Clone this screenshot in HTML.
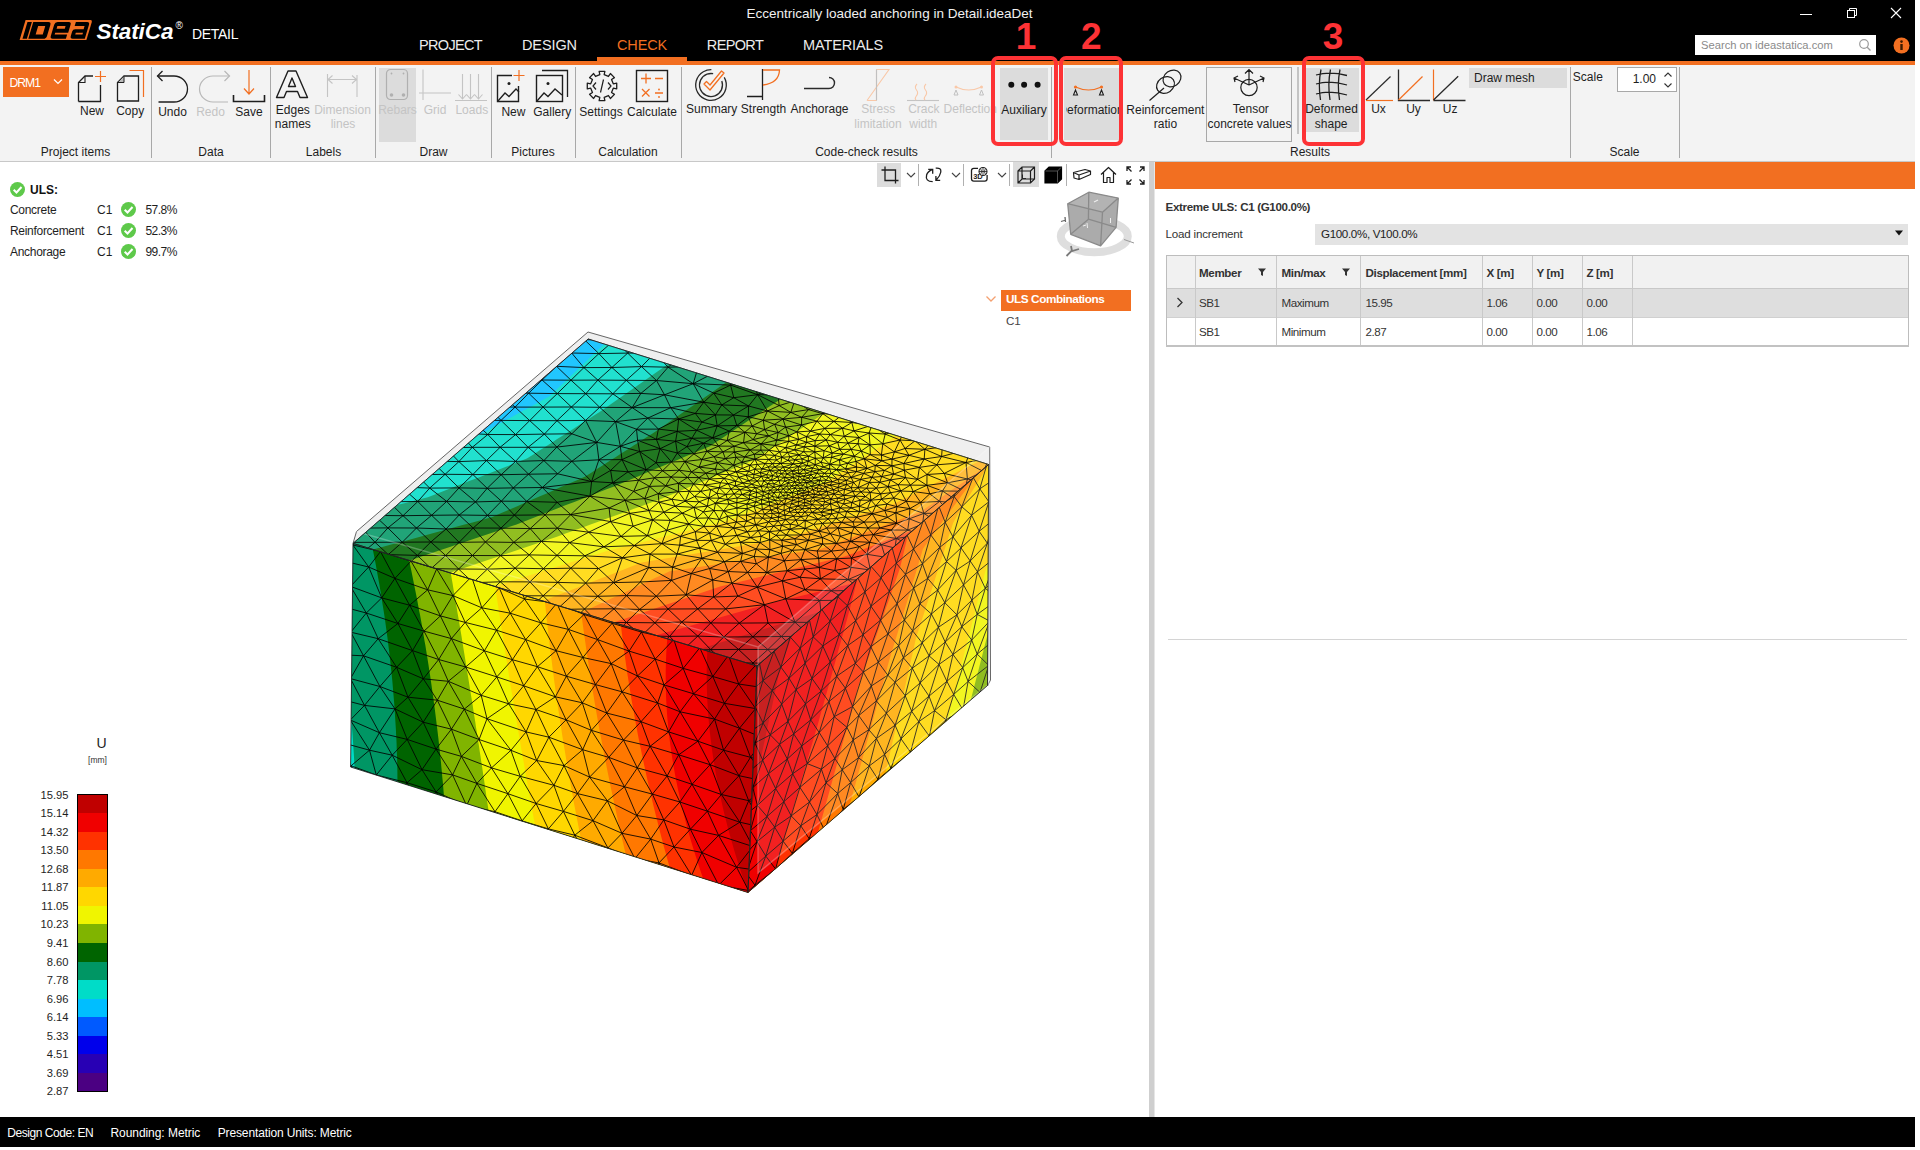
<!DOCTYPE html>
<html><head><meta charset="utf-8"><style>
html,body{margin:0;padding:0;width:1920px;height:1150px;overflow:hidden;background:#fff;}
body{position:relative;font-family:"Liberation Sans",sans-serif;}
.t{position:absolute;white-space:nowrap;line-height:1;}
.r{position:absolute;}
svg.r{overflow:visible;}
</style></head><body>
<div class="r" style="left:0px;top:0px;width:1915px;height:61px;background:#000;"></div>
<div class="r" style="left:0px;top:61px;width:1915px;height:4px;background:#f26f21;"></div>
<div class="r" style="left:0px;top:65px;width:1915px;height:96px;background:#f3f3f3;"></div>
<div class="r" style="left:0px;top:161px;width:1915px;height:1px;background:#c8c8c8;"></div>
<div class="r" style="left:0px;top:1117px;width:1915px;height:30px;background:#000;"></div>
<svg class="r" style="left:15px;top:15px;" width="85" height="30" viewBox="0 0 85 30"><g transform="matrix(1 0 -0.3 1 7.5 0)">
<path d="M4.6 5.1 H69.5 Q71.4 5.1 71.4 7 V25 H4.6 Z" fill="#f26f21"/>
<path d="M7.1 7.1 H11.5 V23.7 H7.1 Z" fill="#000"/>
<path d="M12.9 7.1 H28 Q30.8 7.1 30.8 9.9 V20.9 Q30.8 23.7 28 23.7 H12.9 Z M19 11.1 V19.5 H26.1 V11.1 Z" fill="#000" fill-rule="evenodd"/>
<path d="M37.3 7.1 H48.5 Q51 7.1 51 9.6 V17.7 H38 V19.5 H50.5 V23.7 H37.3 Q34.6 23.7 34.6 21 V9.8 Q34.6 7.1 37.3 7.1 Z M38.2 11.1 V13.7 H46.4 V11.1 Z" fill="#000" fill-rule="evenodd"/>
<path d="M55.5 7.1 H66.8 Q69.4 7.1 69.4 9.7 V23.7 H57.3 Q54.6 23.7 54.6 21 V16.5 Q54.6 14.2 57 14.2 H65.4 V11.1 H55.5 Z M58.6 17.7 V19.5 H65.8 V17.7 Z" fill="#000" fill-rule="evenodd"/>
</g></svg>
<div class="t" style="left:96.5px;top:20.5px;font-size:22.5px;color:#fff;font-weight:bold;font-style:italic;letter-spacing:-0.1px;">StatiCa</div>
<div class="t" style="left:175.5px;top:21.0px;font-size:10px;color:#fff;font-weight:normal;">®</div>
<div class="t" style="left:192.0px;top:27.1px;font-size:14px;color:#fff;font-weight:normal;letter-spacing:-0.3px;">DETAIL</div>
<div class="t" style="left:739.5px;width:300px;text-align:center;top:6.6px;font-size:13.5px;color:#f0f0f0;font-weight:normal;">Eccentrically loaded anchoring in Detail.ideaDet</div>
<div class="t" style="left:300.5px;width:300px;text-align:center;top:37.9px;font-size:14.5px;color:#ececec;font-weight:normal;letter-spacing:-0.65px;">PROJECT</div>
<div class="t" style="left:399.5px;width:300px;text-align:center;top:37.9px;font-size:14.5px;color:#ececec;font-weight:normal;letter-spacing:-0.1px;">DESIGN</div>
<div class="t" style="left:492.0px;width:300px;text-align:center;top:37.9px;font-size:14.5px;color:#f26f21;font-weight:normal;letter-spacing:-0.15px;">CHECK</div>
<div class="t" style="left:585.0px;width:300px;text-align:center;top:37.9px;font-size:14.5px;color:#ececec;font-weight:normal;letter-spacing:-0.65px;">REPORT</div>
<div class="t" style="left:693.0px;width:300px;text-align:center;top:37.9px;font-size:14.5px;color:#ececec;font-weight:normal;letter-spacing:-0.12px;">MATERIALS</div>
<div class="r" style="left:597px;top:57px;width:90px;height:4px;background:#f26f21;"></div>
<div class="r" style="left:1800px;top:14px;width:12px;height:1px;background:#fff;"></div>
<svg class="r" style="left:1845px;top:6px;" width="14" height="14" viewBox="0 0 14 14"><rect x="2.5" y="4.5" width="7" height="7" fill="none" stroke="#fff" stroke-width="1"/><path d="M4.5 4.5 V2.5 H11.5 V9.5 H9.5" fill="none" stroke="#fff" stroke-width="1"/></svg>
<svg class="r" style="left:1890px;top:7px;" width="12" height="12" viewBox="0 0 12 12"><path d="M1 1 L11 11 M11 1 L1 11" stroke="#fff" stroke-width="1.1"/></svg>
<div class="r" style="left:1695px;top:35px;width:181px;height:20px;background:#fff;"></div>
<div class="t" style="left:1701.0px;top:40.0px;font-size:11.2px;color:#8a8a8a;font-weight:normal;">Search on ideastatica.com</div>
<svg class="r" style="left:1858px;top:38px;" width="14" height="14" viewBox="0 0 14 14"><circle cx="6" cy="6" r="4.3" fill="none" stroke="#9a9a9a" stroke-width="1.2"/><path d="M9.2 9.2 L12.5 12.5" stroke="#9a9a9a" stroke-width="1.3"/></svg>
<svg class="r" style="left:1893px;top:37px;" width="17" height="17" viewBox="0 0 17 17"><circle cx="8.5" cy="8.5" r="8" fill="#f26f21"/><rect x="7.3" y="7" width="2.4" height="6" fill="#3a1a00"/><circle cx="8.5" cy="4.6" r="1.3" fill="#3a1a00"/></svg>
<div class="r" style="left:151px;top:67px;width:1px;height:91px;background:#a8a8a8;"></div>
<div class="r" style="left:270px;top:67px;width:1px;height:91px;background:#a8a8a8;"></div>
<div class="r" style="left:375px;top:67px;width:1px;height:91px;background:#a8a8a8;"></div>
<div class="r" style="left:491px;top:67px;width:1px;height:91px;background:#a8a8a8;"></div>
<div class="r" style="left:575px;top:67px;width:1px;height:91px;background:#a8a8a8;"></div>
<div class="r" style="left:681px;top:67px;width:1px;height:91px;background:#a8a8a8;"></div>
<div class="r" style="left:1051px;top:67px;width:1px;height:91px;background:#a8a8a8;"></div>
<div class="r" style="left:1570px;top:67px;width:1px;height:91px;background:#a8a8a8;"></div>
<div class="r" style="left:1679px;top:67px;width:1px;height:91px;background:#a8a8a8;"></div>
<div class="t" style="left:-74.5px;width:300px;text-align:center;top:145.6px;font-size:12px;color:#1e1e1e;font-weight:normal;">Project items</div>
<div class="t" style="left:61.0px;width:300px;text-align:center;top:145.6px;font-size:12px;color:#1e1e1e;font-weight:normal;">Data</div>
<div class="t" style="left:173.5px;width:300px;text-align:center;top:145.6px;font-size:12px;color:#1e1e1e;font-weight:normal;">Labels</div>
<div class="t" style="left:283.5px;width:300px;text-align:center;top:145.6px;font-size:12px;color:#1e1e1e;font-weight:normal;">Draw</div>
<div class="t" style="left:383.0px;width:300px;text-align:center;top:145.6px;font-size:12px;color:#1e1e1e;font-weight:normal;">Pictures</div>
<div class="t" style="left:478.0px;width:300px;text-align:center;top:145.6px;font-size:12px;color:#1e1e1e;font-weight:normal;">Calculation</div>
<div class="t" style="left:716.5px;width:300px;text-align:center;top:145.6px;font-size:12px;color:#1e1e1e;font-weight:normal;">Code-check results</div>
<div class="t" style="left:1160.0px;width:300px;text-align:center;top:145.6px;font-size:12px;color:#1e1e1e;font-weight:normal;">Results</div>
<div class="t" style="left:1474.5px;width:300px;text-align:center;top:145.6px;font-size:12px;color:#1e1e1e;font-weight:normal;">Scale</div>
<div class="r" style="left:3px;top:67px;width:66px;height:30px;background:#f26f21;"></div>
<div class="t" style="left:9.5px;top:76.7px;font-size:12.2px;color:#fff;font-weight:normal;letter-spacing:-1.0px;">DRM1</div>
<svg class="r" style="left:53px;top:78px;" width="10" height="7" viewBox="0 0 10 7"><path d="M1 1.5 L5 5.5 L9 1.5" fill="none" stroke="#fff" stroke-width="1.2"/></svg>
<svg class="r" style="left:76px;top:68px;" width="34" height="36" viewBox="0 0 34 36"><path d="M2.5 33.5 V14.5 L9 8 H17" fill="none" stroke="#1e1e1e" stroke-width="1.3"/>
<path d="M2.5 14.5 H9 V8" fill="none" stroke="#1e1e1e" stroke-width="1.1"/>
<path d="M24.5 17 V33.5 H2.5" fill="none" stroke="#1e1e1e" stroke-width="1.3"/>
<path d="M24.5 3 V14 M19 8.5 H30" stroke="#f26f21" stroke-width="1.2"/></svg>
<div class="t" style="left:-58.0px;width:300px;text-align:center;top:105.3px;font-size:12px;color:#1e1e1e;font-weight:normal;">New</div>
<svg class="r" style="left:114px;top:68px;" width="34" height="36" viewBox="0 0 34 36"><path d="M3.5 33 V14.5 L10 8 H24.5 V33 Z" fill="none" stroke="#1e1e1e" stroke-width="1.3"/>
<path d="M4 14.5 H10 V8.5" fill="#bbb" stroke="#1e1e1e" stroke-width="1"/>
<path d="M15.5 2.5 H29.5 V29" fill="none" stroke="#f26f21" stroke-width="1.2"/></svg>
<div class="t" style="left:-19.8px;width:300px;text-align:center;top:105.3px;font-size:12px;color:#1e1e1e;font-weight:normal;">Copy</div>
<svg class="r" style="left:155px;top:69px;" width="40" height="36" viewBox="0 0 40 36"><path d="M2.5 7 H19 A13.5 13 0 0 1 19 33 H3.5" fill="none" stroke="#1e1e1e" stroke-width="1.3"/>
<path d="M7.5 2 L2.5 7 L7.5 12" fill="none" stroke="#1e1e1e" stroke-width="1.3"/></svg>
<div class="t" style="left:22.5px;width:300px;text-align:center;top:105.5px;font-size:12px;color:#1e1e1e;font-weight:normal;">Undo</div>
<svg class="r" style="left:193px;top:69px;" width="40" height="36" viewBox="0 0 40 36"><path d="M36.5 7 H20 A13.5 13 0 0 0 20 33 H35" fill="none" stroke="#b8b8b8" stroke-width="1.2"/>
<path d="M31.5 2 L36.5 7 L31.5 12" fill="none" stroke="#b8b8b8" stroke-width="1.2"/></svg>
<div class="t" style="left:60.5px;width:300px;text-align:center;top:105.5px;font-size:12px;color:#c4c4c4;font-weight:normal;">Redo</div>
<svg class="r" style="left:231px;top:68px;" width="38" height="36" viewBox="0 0 38 36"><path d="M18 2 V26 M13 20.5 L18 26 L23 20.5" fill="none" stroke="#f26f21" stroke-width="1.2"/>
<path d="M2.5 27 V33.5 H33.5 V27" fill="none" stroke="#1e1e1e" stroke-width="1.6"/></svg>
<div class="t" style="left:99.0px;width:300px;text-align:center;top:105.5px;font-size:12px;color:#1e1e1e;font-weight:normal;">Save</div>
<svg class="r" style="left:274px;top:69px;" width="36" height="32" viewBox="0 0 36 32"><path d="M14 2 H22 L33.5 28.5 H26 L23.5 22.5 H12.5 L10 28.5 H2.5 Z M14.5 17.5 H21.5 L18 9 Z" fill="none" stroke="#1e1e1e" stroke-width="1.4" stroke-linejoin="round"/></svg>
<div class="t" style="left:142.8px;width:300px;text-align:center;top:103.7px;font-size:12px;color:#1e1e1e;font-weight:normal;">Edges</div>
<div class="t" style="left:142.8px;width:300px;text-align:center;top:118.3px;font-size:12px;color:#1e1e1e;font-weight:normal;">names</div>
<svg class="r" style="left:324px;top:72px;" width="36" height="28" viewBox="0 0 36 28"><path d="M3.5 2 V25 M33 3 V25 M4 7.5 H32.5 M8.5 3.5 L4 7.5 L8.5 11.5 M28 3.5 L32.5 7.5 L28 11.5" fill="none" stroke="#c4c4c4" stroke-width="1.1"/></svg>
<div class="t" style="left:192.5px;width:300px;text-align:center;top:103.7px;font-size:12px;color:#c4c4c4;font-weight:normal;">Dimension</div>
<div class="t" style="left:193.0px;width:300px;text-align:center;top:118.3px;font-size:12px;color:#c4c4c4;font-weight:normal;">lines</div>
<div class="r" style="left:379px;top:68px;width:37px;height:74px;background:#dcdcdc;"></div>
<svg class="r" style="left:384px;top:68px;" width="28" height="34" viewBox="0 0 28 34"><rect x="2.5" y="1.5" width="21" height="30" rx="4" fill="none" stroke="#b0b0b0" stroke-width="1.2"/>
<circle cx="7.5" cy="5.5" r="0.9" fill="#b0b0b0"/><circle cx="19.5" cy="5.5" r="0.9" fill="#b0b0b0"/>
<circle cx="7.5" cy="27" r="1.8" fill="#b0b0b0"/><circle cx="19.5" cy="27" r="1.8" fill="#b0b0b0"/></svg>
<div class="t" style="left:247.5px;width:300px;text-align:center;top:103.8px;font-size:12px;color:#c4c4c4;font-weight:normal;">Rebars</div>
<svg class="r" style="left:417px;top:68px;" width="36" height="34" viewBox="0 0 36 34"><path d="M6 1.5 V32 M2 25 H34" fill="none" stroke="#c4c4c4" stroke-width="1.1"/></svg>
<div class="t" style="left:285.0px;width:300px;text-align:center;top:103.8px;font-size:12px;color:#c4c4c4;font-weight:normal;">Grid</div>
<svg class="r" style="left:453px;top:72px;" width="36" height="30" viewBox="0 0 36 30"><path d="M2 28.5 H34 M9.5 2 V27 M17.5 2 V27 M25.5 2 V27 M5.5 22.5 L9.5 27 L13.5 22.5 M13.5 22.5 L17.5 27 L21.5 22.5 M21.5 22.5 L25.5 27 L29.5 22.5" fill="none" stroke="#c4c4c4" stroke-width="1.1"/></svg>
<div class="t" style="left:321.8px;width:300px;text-align:center;top:103.8px;font-size:12px;color:#c4c4c4;font-weight:normal;">Loads</div>
<svg class="r" style="left:495px;top:68px;" width="34" height="36" viewBox="0 0 34 36"><path d="M23.5 18 V33.5 H2.5 V7.5 H17" fill="none" stroke="#1e1e1e" stroke-width="1.4"/>
<circle cx="14" cy="15.5" r="1.5" fill="#1e1e1e"/>
<path d="M3 33 L10 25 L14 28.5 L21 21 L24 24" fill="none" stroke="#1e1e1e" stroke-width="1.3"/>
<path d="M24 2 V13 M18.5 7.5 H29.5" stroke="#f26f21" stroke-width="1.2"/></svg>
<div class="t" style="left:363.4px;width:300px;text-align:center;top:105.5px;font-size:12px;color:#1e1e1e;font-weight:normal;">New</div>
<svg class="r" style="left:534px;top:68px;" width="36" height="36" viewBox="0 0 36 36"><rect x="2.5" y="7.5" width="26" height="26" fill="none" stroke="#1e1e1e" stroke-width="1.4"/>
<circle cx="14" cy="15.5" r="1.5" fill="#1e1e1e"/>
<path d="M3 33 L10 25 L14 28.5 L21 21 L28 27" fill="none" stroke="#1e1e1e" stroke-width="1.3"/>
<path d="M8 2.5 H33.5 V29" fill="none" stroke="#1e1e1e" stroke-width="1.3"/></svg>
<div class="t" style="left:402.3px;width:300px;text-align:center;top:105.5px;font-size:12px;color:#1e1e1e;font-weight:normal;">Gallery</div>
<svg class="r" style="left:586px;top:70px;" width="32" height="32" viewBox="0 0 32 32"><polygon points="30.72,13.14 30.72,18.86 27.29,18.19 25.53,22.43 28.44,24.39 24.39,28.44 22.43,25.53 18.19,27.29 18.86,30.72 13.14,30.72 13.81,27.29 9.57,25.53 7.61,28.44 3.56,24.39 6.47,22.43 4.71,18.19 1.28,18.86 1.28,13.14 4.71,13.81 6.47,9.57 3.56,7.61 7.61,3.56 9.57,6.47 13.81,4.71 13.14,1.28 18.86,1.28 18.19,4.71 22.43,6.47 24.39,3.56 28.44,7.61 25.53,9.57 27.29,13.81" fill="none" stroke="#1e1e1e" stroke-width="1.3" stroke-linejoin="round"/>
<path d="M10 12.5 L7 16 L10 19.5 M22 12.5 L25 16 L22 19.5 M17.5 9.5 L14.5 22.5" fill="none" stroke="#1e1e1e" stroke-width="1.2"/></svg>
<div class="t" style="left:451.0px;width:300px;text-align:center;top:105.5px;font-size:12px;color:#1e1e1e;font-weight:normal;">Settings</div>
<svg class="r" style="left:635px;top:69px;" width="34" height="34" viewBox="0 0 34 34"><rect x="1.5" y="1.5" width="31" height="31" fill="none" stroke="#1e1e1e" stroke-width="1.4"/>
<path d="M6 9.5 H16 M11 4.5 V14.5 M20 9.5 H28 M7 20 L14.5 27.5 M14.5 20 L7 27.5 M20 24 H28" stroke="#f26f21" stroke-width="1.3"/>
<circle cx="24" cy="20.5" r="0.9" fill="#f26f21"/><circle cx="24" cy="28" r="0.9" fill="#f26f21"/></svg>
<div class="t" style="left:502.0px;width:300px;text-align:center;top:105.5px;font-size:12px;color:#1e1e1e;font-weight:normal;">Calculate</div>
<svg class="r" style="left:694px;top:68px;" width="34" height="34" viewBox="0 0 34 34"><circle cx="17" cy="17" r="15.3" fill="none" stroke="#2a2a2a" stroke-width="1.3" stroke-dasharray="80 16" transform="rotate(-30 17 17)"/>
<circle cx="17" cy="17" r="11.5" fill="none" stroke="#2a2a2a" stroke-width="1.3" stroke-dasharray="60 12" transform="rotate(-20 17 17)"/>
<path d="M10 16 L16 22 L30 5 L27.5 3 L16 17 L12.5 13.5 Z" fill="none" stroke="#f26f21" stroke-width="1.3" stroke-linejoin="round"/></svg>
<div class="t" style="left:561.7px;width:300px;text-align:center;top:103.4px;font-size:12px;color:#1e1e1e;font-weight:normal;">Summary</div>
<svg class="r" style="left:746px;top:68px;" width="36" height="34" viewBox="0 0 36 34"><path d="M1 28.5 H17 M16.5 1 V32" fill="none" stroke="#1e1e1e" stroke-width="1.3"/>
<path d="M17 2 H33.5 Q33 15 17 17" fill="none" stroke="#f26f21" stroke-width="1.3"/></svg>
<div class="t" style="left:613.5px;width:300px;text-align:center;top:103.4px;font-size:12px;color:#1e1e1e;font-weight:normal;">Strength</div>
<svg class="r" style="left:802px;top:76px;" width="36" height="16" viewBox="0 0 36 16"><path d="M2 12.5 H27 A5.5 5.5 0 0 0 27 1.5" fill="none" stroke="#2a2a2a" stroke-width="1.4"/></svg>
<div class="t" style="left:669.5px;width:300px;text-align:center;top:103.4px;font-size:12px;color:#1e1e1e;font-weight:normal;">Anchorage</div>
<svg class="r" style="left:864px;top:68px;" width="30" height="34" viewBox="0 0 30 34"><path d="M12.5 1.5 V32.5 M3 32.5 H12.5 M12.5 1.5 H25 L3 32.5" fill="none" stroke="#f9c8a8" stroke-width="1.1"/><path d="M12.5 1.5 V32.5" stroke="#c0c0c0" stroke-width="1.1"/></svg>
<div class="t" style="left:728.3px;width:300px;text-align:center;top:103.4px;font-size:12px;color:#c4c4c4;font-weight:normal;">Stress</div>
<div class="t" style="left:728.0px;width:300px;text-align:center;top:118.3px;font-size:12px;color:#c4c4c4;font-weight:normal;">limitation</div>
<svg class="r" style="left:906px;top:83px;" width="34" height="20" viewBox="0 0 34 20"><path d="M1 17.5 H33" stroke="#c4c4c4" stroke-width="1.1"/><path d="M11 1 Q8 4 10.5 7 Q13 10 10 13.5 Q8.5 15.5 10 17 M20 1 Q17 4 19.5 7 Q22 10 19 13.5 Q17.5 15.5 19 17" fill="none" stroke="#f9c8a8" stroke-width="1.1"/></svg>
<div class="t" style="left:773.8px;width:300px;text-align:center;top:103.4px;font-size:12px;color:#c4c4c4;font-weight:normal;">Crack</div>
<div class="t" style="left:773.3px;width:300px;text-align:center;top:118.3px;font-size:12px;color:#c4c4c4;font-weight:normal;">width</div>
<svg class="r" style="left:953px;top:84px;" width="34" height="14" viewBox="0 0 34 14"><path d="M3 3 Q15.5 9 28.5 3" fill="none" stroke="#f9c8a8" stroke-width="1.1"/><circle cx="3" cy="3" r="1.5" fill="#f9c8a8"/><circle cx="28.5" cy="3" r="1.5" fill="#f9c8a8"/>
<path d="M3 6 L1 11 H5 Z M28.5 6 L26.5 11 H30.5 Z" fill="none" stroke="#c0c0c0" stroke-width="1"/></svg>
<div class="t" style="left:943.6px;top:103.4px;font-size:12px;color:#c4c4c4;font-weight:normal;">Deflection</div>
<div class="r" style="left:1000px;top:68px;width:48px;height:72px;background:#dcdcdc;"></div>
<svg class="r" style="left:1005px;top:79px;" width="40" height="12" viewBox="0 0 40 12"><circle cx="6.3" cy="5.8" r="3" fill="#111"/><circle cx="19.1" cy="5.8" r="3" fill="#111"/><circle cx="32.6" cy="5.8" r="3" fill="#111"/></svg>
<div class="t" style="left:874.0px;width:300px;text-align:center;top:103.6px;font-size:12px;color:#1e1e1e;font-weight:normal;">Auxiliary</div>
<div class="r" style="left:1064px;top:68px;width:55px;height:72px;background:#dcdcdc;"></div>
<div class="r" style="left:1066px;top:100px;width:53px;height:20px;overflow:hidden"><div class="t" style="left:-125px;width:300px;text-align:center;top:3.64px;font-size:12px;color:#1e1e1e">Deformation</div></div>
<svg class="r" style="left:1072px;top:84px;" width="32" height="14" viewBox="0 0 32 14"><path d="M3.5 3 Q16.5 9 29.5 3" fill="none" stroke="#f26f21" stroke-width="1.2"/><circle cx="3.5" cy="3" r="1.6" fill="#f26f21"/><circle cx="29.5" cy="3" r="1.6" fill="#f26f21"/>
<path d="M3.5 6 L1.5 11 H5.5 Z M29.5 6 L27.5 11 H31.5 Z" fill="none" stroke="#1e1e1e" stroke-width="1.1"/></svg>
<svg class="r" style="left:1147px;top:68px;" width="38" height="36" viewBox="0 0 38 36"><ellipse cx="25" cy="10.5" rx="9.5" ry="7.8" transform="rotate(-35 25 10.5)" fill="none" stroke="#1e1e1e" stroke-width="1.2"/>
<ellipse cx="18.5" cy="17" rx="9.5" ry="7.8" transform="rotate(-35 18.5 17)" fill="none" stroke="#1e1e1e" stroke-width="1.2"/>
<path d="M2.5 32.5 L17 20" stroke="#1e1e1e" stroke-width="1.2"/></svg>
<div class="t" style="left:1015.4px;width:300px;text-align:center;top:103.6px;font-size:12px;color:#1e1e1e;font-weight:normal;">Reinforcement</div>
<div class="t" style="left:1015.4px;width:300px;text-align:center;top:118.4px;font-size:12px;color:#1e1e1e;font-weight:normal;">ratio</div>
<div class="r" style="left:1206px;top:67px;width:86px;height:75px;background:transparent;border:1px solid #a8a8a8;box-sizing:border-box;"></div>
<svg class="r" style="left:1232px;top:68px;" width="36" height="32" viewBox="0 0 36 32"><circle cx="17" cy="19.5" r="8.2" fill="none" stroke="#1e1e1e" stroke-width="1.2"/>
<path d="M17 1.5 V17 M13 5.5 L17 1.5 L21 5.5 M17 17 L2 10 M17 17 L32 10 M3 14 L2 10 L6 8 M31 14 L32 10 L28 8" fill="none" stroke="#1e1e1e" stroke-width="1.2"/></svg>
<div class="t" style="left:1100.8px;width:300px;text-align:center;top:103.4px;font-size:12px;color:#1e1e1e;font-weight:normal;">Tensor</div>
<div class="t" style="left:1099.5px;width:300px;text-align:center;top:118.3px;font-size:12px;color:#1e1e1e;font-weight:normal;">concrete values</div>
<div class="r" style="left:1297px;top:67px;width:2px;height:67px;background:#c4c4c4;"></div>
<div class="r" style="left:1306px;top:68px;width:53px;height:64px;background:#dcdcdc;"></div>
<svg class="r" style="left:1313px;top:68px;" width="36" height="34" viewBox="0 0 36 34"><path d="M8 1.5 Q5 16 7.5 32 M17.5 1.5 Q14.5 16 17 32 M27 1.5 Q24 16 26.5 32 M3 7 Q17 3 34 7.5 M3 16 Q17 12 34 17 M3 26 Q17 22 34 27" fill="none" stroke="#1e1e1e" stroke-width="1.3"/></svg>
<div class="t" style="left:1181.5px;width:300px;text-align:center;top:103.4px;font-size:12px;color:#1e1e1e;font-weight:normal;">Deformed</div>
<div class="t" style="left:1181.2px;width:300px;text-align:center;top:118.3px;font-size:12px;color:#1e1e1e;font-weight:normal;">shape</div>
<svg class="r" style="left:1364px;top:69px;" width="34" height="34" viewBox="0 0 34 34"><path d="M2 31 L26.5 7.5" stroke="#2a2a2a" stroke-width="1.2"/><path d="M2 31.5 H29" stroke="#f26f21" stroke-width="1.2"/></svg>
<div class="t" style="left:1228.5px;width:300px;text-align:center;top:103.2px;font-size:12px;color:#1e1e1e;font-weight:normal;">Ux</div>
<svg class="r" style="left:1396px;top:69px;" width="36" height="34" viewBox="0 0 36 34"><path d="M2.5 0.5 V31.5 H34" fill="none" stroke="#2a2a2a" stroke-width="1.3"/><path d="M2.5 31 L26.5 7.5" stroke="#f26f21" stroke-width="1.2"/></svg>
<div class="t" style="left:1263.5px;width:300px;text-align:center;top:103.2px;font-size:12px;color:#1e1e1e;font-weight:normal;">Uy</div>
<svg class="r" style="left:1432px;top:69px;" width="36" height="34" viewBox="0 0 36 34"><path d="M1.5 0.5 V31.5" stroke="#f26f21" stroke-width="1.2"/><path d="M1.5 31.5 H33.5 M1.5 31 L26.2 7.3" fill="none" stroke="#2a2a2a" stroke-width="1.3"/></svg>
<div class="t" style="left:1300.2px;width:300px;text-align:center;top:103.0px;font-size:12px;color:#1e1e1e;font-weight:normal;">Uz</div>
<div class="r" style="left:1469px;top:68px;width:98px;height:20px;background:#dcdcdc;"></div>
<div class="t" style="left:1474.0px;top:72.4px;font-size:12px;color:#1e1e1e;font-weight:normal;">Draw mesh</div>
<div class="t" style="left:1572.8px;top:70.8px;font-size:12px;color:#1e1e1e;font-weight:normal;">Scale</div>
<div class="r" style="left:1617px;top:67px;width:60px;height:25px;background:#fff;border:1px solid #a8a8a8;box-sizing:border-box;"></div>
<div class="t" style="left:1356.0px;width:300px;text-align:right;top:73.1px;font-size:12px;color:#1e1e1e;font-weight:normal;">1.00</div>
<svg class="r" style="left:1662px;top:70px;" width="12" height="20" viewBox="0 0 12 20"><path d="M2.5 6.5 L6 3 L9.5 6.5 M2.5 13.5 L6 17 L9.5 13.5" fill="none" stroke="#333" stroke-width="1.1"/></svg>
<div class="r" style="left:877px;top:163px;width:24px;height:24px;background:#dcdcdc;"></div>
<div class="r" style="left:1013px;top:162px;width:26px;height:25px;background:#dcdcdc;"></div>
<div class="r" style="left:918px;top:164px;width:1px;height:22px;background:#b0b0b0;"></div>
<div class="r" style="left:963px;top:164px;width:1px;height:22px;background:#b0b0b0;"></div>
<div class="r" style="left:1009px;top:164px;width:1px;height:22px;background:#b0b0b0;"></div>
<div class="r" style="left:1066px;top:164px;width:1px;height:22px;background:#b0b0b0;"></div>
<svg class="r" style="left:880px;top:165px;" width="20" height="20" viewBox="0 0 20 20"><path d="M5 1.5 V15.5 H18.5 M1.5 5 H15.5 V18.5" fill="none" stroke="#1e1e1e" stroke-width="1.3"/></svg>
<svg class="r" style="left:906px;top:172px;" width="10" height="6" viewBox="0 0 10 6"><path d="M1 1 L5 5 L9 1" fill="none" stroke="#444" stroke-width="1.1"/></svg>
<svg class="r" style="left:951px;top:172px;" width="10" height="6" viewBox="0 0 10 6"><path d="M1 1 L5 5 L9 1" fill="none" stroke="#444" stroke-width="1.1"/></svg>
<svg class="r" style="left:997px;top:172px;" width="10" height="6" viewBox="0 0 10 6"><path d="M1 1 L5 5 L9 1" fill="none" stroke="#444" stroke-width="1.1"/></svg>
<svg class="r" style="left:920px;top:162px;" width="30" height="26" viewBox="0 0 30 26"><path d="M12.7 19.7 Q5 19.5 6.6 13 Q7.5 9.5 12.2 7.6 M8.2 7.3 H12.7 V11.7" fill="none" stroke="#1e1e1e" stroke-width="1.3"/><path d="M15.7 6.1 Q21.5 5.5 20.8 10 Q20 14.5 16.2 17.9 M15.9 14.1 V18.3 H20.2" fill="none" stroke="#1e1e1e" stroke-width="1.3"/></svg>
<svg class="r" style="left:966px;top:162px;" width="26" height="26" viewBox="0 0 26 26"><path d="M12 6.3 H7.8 Q5.5 6.3 5.5 8.6 V16.8 Q5.5 19.2 7.8 19.2 H18.8 Q21.1 19.2 21.1 16.8 V13" fill="none" stroke="#1e1e1e" stroke-width="1.3"/><text x="7.2" y="17.2" font-size="7.5" font-weight="bold" font-family="Liberation Sans" fill="#1e1e1e">3D</text><circle cx="17" cy="9.5" r="4.6" fill="#fff"/><circle cx="17" cy="9.5" r="4" fill="none" stroke="#1e1e1e" stroke-width="1.1"/><path d="M13 9.5 H21 M17 5.5 V13.5 M14.5 6.5 Q17 9.5 14.5 12.5 M19.5 6.5 Q17 9.5 19.5 12.5" fill="none" stroke="#1e1e1e" stroke-width="0.8"/></svg>
<svg class="r" style="left:1016px;top:165px;" width="22" height="20" viewBox="0 0 22 20"><path d="M2 6 L6 2 H18.5 V14 L14.5 18 H2 Z M2 6 H14.5 V18 M14.5 6 L18.5 2 M2 18 L6 14 H18.5 M6 2 V14" fill="none" stroke="#1e1e1e" stroke-width="1.2"/><path d="M6.5 13.5 V9.5 M6.5 13.5 H10" stroke="#1e1e1e" stroke-width="0.9"/></svg>
<svg class="r" style="left:1043px;top:165px;" width="20" height="20" viewBox="0 0 20 20"><path d="M2 6 L6 2 H18.5 V14 L14.5 18 H2 Z" fill="#000" stroke="#000" stroke-width="1.2"/><path d="M2.5 6 H14.5 V17.5 M14.5 6 L18 2.5" fill="none" stroke="#888" stroke-width="0.6"/></svg>
<svg class="r" style="left:1072px;top:168px;" width="20" height="14" viewBox="0 0 20 14"><path d="M1.5 4.5 L13 1.5 L18.5 3 V6.5 L7 11.5 L2 10 Z M1.5 4.5 L7 7 L18.5 3 M7 7 V11.5" fill="none" stroke="#1e1e1e" stroke-width="1.2" stroke-linejoin="round"/></svg>
<svg class="r" style="left:1099px;top:165px;" width="20" height="20" viewBox="0 0 20 20"><path d="M2 9.5 L9.5 2.5 L17 9.5 M4.5 7.5 V17.5 H8 V12.5 H11 V17.5 H14.5 V7.5" fill="none" stroke="#1e1e1e" stroke-width="1.2" stroke-linejoin="round"/></svg>
<svg class="r" style="left:1125px;top:165px;" width="21" height="21" viewBox="0 0 21 21"><path d="M2 6 V2 H6 M2 2 L6.5 6.5 M19 6 V2 H15 M19 2 L14.5 6.5 M2 15 V19 H6 M2 19 L6.5 14.5 M19 15 V19 H15 M19 19 L14.5 14.5" fill="none" stroke="#1e1e1e" stroke-width="1.3"/></svg>
<div class="r" style="left:1149px;top:162px;width:6px;height:955px;background:#cfcfcf;"></div>
<div class="r" style="left:1154px;top:162px;width:1px;height:955px;background:#e6e6e6;"></div>
<svg class="r" style="left:8.5px;top:181.0px;" width="17.0" height="17.0" viewBox="0 0 17.0 17.0"><circle cx="8.5" cy="8.5" r="7.5" fill="#5ec94a"/><path d="M4.7 8.7 L7.5 11.5 L12.5 6.0" fill="none" stroke="#fff" stroke-width="2"/></svg>
<div class="t" style="left:30.0px;top:184.3px;font-size:12px;color:#111;font-weight:bold;">ULS:</div>
<div class="t" style="left:10.0px;top:204.3px;font-size:12px;color:#1e1e1e;font-weight:normal;letter-spacing:-0.3px;">Concrete</div>
<div class="t" style="left:97.0px;top:204.3px;font-size:12px;color:#1e1e1e;font-weight:normal;">C1</div>
<svg class="r" style="left:119.5px;top:201.0px;" width="17.0" height="17.0" viewBox="0 0 17.0 17.0"><circle cx="8.5" cy="8.5" r="7.5" fill="#5ec94a"/><path d="M4.7 8.7 L7.5 11.5 L12.5 6.0" fill="none" stroke="#fff" stroke-width="2"/></svg>
<div class="t" style="left:145.5px;top:204.3px;font-size:12px;color:#1e1e1e;font-weight:normal;letter-spacing:-0.55px;">57.8%</div>
<div class="t" style="left:10.0px;top:225.3px;font-size:12px;color:#1e1e1e;font-weight:normal;letter-spacing:-0.3px;">Reinforcement</div>
<div class="t" style="left:97.0px;top:225.3px;font-size:12px;color:#1e1e1e;font-weight:normal;">C1</div>
<svg class="r" style="left:119.5px;top:222.0px;" width="17.0" height="17.0" viewBox="0 0 17.0 17.0"><circle cx="8.5" cy="8.5" r="7.5" fill="#5ec94a"/><path d="M4.7 8.7 L7.5 11.5 L12.5 6.0" fill="none" stroke="#fff" stroke-width="2"/></svg>
<div class="t" style="left:145.5px;top:225.3px;font-size:12px;color:#1e1e1e;font-weight:normal;letter-spacing:-0.55px;">52.3%</div>
<div class="t" style="left:10.0px;top:246.3px;font-size:12px;color:#1e1e1e;font-weight:normal;letter-spacing:-0.3px;">Anchorage</div>
<div class="t" style="left:97.0px;top:246.3px;font-size:12px;color:#1e1e1e;font-weight:normal;">C1</div>
<svg class="r" style="left:119.5px;top:243.0px;" width="17.0" height="17.0" viewBox="0 0 17.0 17.0"><circle cx="8.5" cy="8.5" r="7.5" fill="#5ec94a"/><path d="M4.7 8.7 L7.5 11.5 L12.5 6.0" fill="none" stroke="#fff" stroke-width="2"/></svg>
<div class="t" style="left:145.5px;top:246.3px;font-size:12px;color:#1e1e1e;font-weight:normal;letter-spacing:-0.55px;">99.7%</div>
<div class="t" style="left:-48.5px;width:300px;text-align:center;top:735.6px;font-size:14px;color:#222;font-weight:normal;">U</div>
<div class="t" style="left:-52.5px;width:300px;text-align:center;top:756.3px;font-size:8.5px;color:#333;font-weight:normal;">[mm]</div>
<div class="r" style="left:77px;top:794.6px;width:31px;height:19.1px;background:#c00000;"></div>
<div class="r" style="left:77px;top:813.1px;width:31px;height:19.1px;background:#f00000;"></div>
<div class="r" style="left:77px;top:831.7px;width:31px;height:19.1px;background:#ff3200;"></div>
<div class="r" style="left:77px;top:850.2px;width:31px;height:19.1px;background:#ff7800;"></div>
<div class="r" style="left:77px;top:868.8px;width:31px;height:19.1px;background:#ffaa00;"></div>
<div class="r" style="left:77px;top:887.3px;width:31px;height:19.1px;background:#ffd700;"></div>
<div class="r" style="left:77px;top:905.9px;width:31px;height:19.1px;background:#f0f500;"></div>
<div class="r" style="left:77px;top:924.4px;width:31px;height:19.1px;background:#80b400;"></div>
<div class="r" style="left:77px;top:943.0px;width:31px;height:19.1px;background:#006400;"></div>
<div class="r" style="left:77px;top:961.5px;width:31px;height:19.1px;background:#009664;"></div>
<div class="r" style="left:77px;top:980.0px;width:31px;height:19.1px;background:#00dcc8;"></div>
<div class="r" style="left:77px;top:998.6px;width:31px;height:19.1px;background:#00beff;"></div>
<div class="r" style="left:77px;top:1017.1px;width:31px;height:19.1px;background:#005aff;"></div>
<div class="r" style="left:77px;top:1035.7px;width:31px;height:19.1px;background:#0000eb;"></div>
<div class="r" style="left:77px;top:1054.2px;width:31px;height:19.1px;background:#2800b4;"></div>
<div class="r" style="left:77px;top:1072.8px;width:31px;height:19.1px;background:#4b0082;"></div>
<div class="r" style="left:77px;top:794px;width:31px;height:298px;background:transparent;border:1px solid #000;box-sizing:border-box;"></div>
<div class="t" style="left:-231.5px;width:300px;text-align:right;top:789.6px;font-size:11.2px;color:#1e1e1e;font-weight:normal;">15.95</div>
<div class="t" style="left:-231.5px;width:300px;text-align:right;top:808.2px;font-size:11.2px;color:#1e1e1e;font-weight:normal;">15.14</div>
<div class="t" style="left:-231.5px;width:300px;text-align:right;top:826.7px;font-size:11.2px;color:#1e1e1e;font-weight:normal;">14.32</div>
<div class="t" style="left:-231.5px;width:300px;text-align:right;top:845.3px;font-size:11.2px;color:#1e1e1e;font-weight:normal;">13.50</div>
<div class="t" style="left:-231.5px;width:300px;text-align:right;top:863.8px;font-size:11.2px;color:#1e1e1e;font-weight:normal;">12.68</div>
<div class="t" style="left:-231.5px;width:300px;text-align:right;top:882.3px;font-size:11.2px;color:#1e1e1e;font-weight:normal;">11.87</div>
<div class="t" style="left:-231.5px;width:300px;text-align:right;top:900.9px;font-size:11.2px;color:#1e1e1e;font-weight:normal;">11.05</div>
<div class="t" style="left:-231.5px;width:300px;text-align:right;top:919.4px;font-size:11.2px;color:#1e1e1e;font-weight:normal;">10.23</div>
<div class="t" style="left:-231.5px;width:300px;text-align:right;top:938.0px;font-size:11.2px;color:#1e1e1e;font-weight:normal;">9.41</div>
<div class="t" style="left:-231.5px;width:300px;text-align:right;top:956.5px;font-size:11.2px;color:#1e1e1e;font-weight:normal;">8.60</div>
<div class="t" style="left:-231.5px;width:300px;text-align:right;top:975.1px;font-size:11.2px;color:#1e1e1e;font-weight:normal;">7.78</div>
<div class="t" style="left:-231.5px;width:300px;text-align:right;top:993.6px;font-size:11.2px;color:#1e1e1e;font-weight:normal;">6.96</div>
<div class="t" style="left:-231.5px;width:300px;text-align:right;top:1012.1px;font-size:11.2px;color:#1e1e1e;font-weight:normal;">6.14</div>
<div class="t" style="left:-231.5px;width:300px;text-align:right;top:1030.7px;font-size:11.2px;color:#1e1e1e;font-weight:normal;">5.33</div>
<div class="t" style="left:-231.5px;width:300px;text-align:right;top:1049.2px;font-size:11.2px;color:#1e1e1e;font-weight:normal;">4.51</div>
<div class="t" style="left:-231.5px;width:300px;text-align:right;top:1067.8px;font-size:11.2px;color:#1e1e1e;font-weight:normal;">3.69</div>
<div class="t" style="left:-231.5px;width:300px;text-align:right;top:1086.3px;font-size:11.2px;color:#1e1e1e;font-weight:normal;">2.87</div>
<div class="r" style="left:1155px;top:162px;width:760px;height:27px;background:#f26f21;"></div>
<div class="t" style="left:1165.5px;top:200.7px;font-size:11.6px;color:#333;font-weight:bold;letter-spacing:-0.35px;">Extreme ULS: C1 (G100.0%)</div>
<div class="t" style="left:1165.5px;top:228.2px;font-size:11.6px;color:#333;font-weight:normal;letter-spacing:-0.2px;">Load increment</div>
<div class="r" style="left:1315px;top:224px;width:593px;height:21px;background:#e3e3e3;"></div>
<div class="t" style="left:1321.0px;top:228.2px;font-size:11.6px;color:#222;font-weight:normal;letter-spacing:-0.35px;">G100.0%, V100.0%</div>
<svg class="r" style="left:1894px;top:229px;" width="10" height="8" viewBox="0 0 10 8"><path d="M1 1.5 H9 L5 6.5 Z" fill="#111"/></svg>
<div class="r" style="left:1166px;top:255px;width:743px;height:92px;background:#fff;border:1px solid #bdbdbd;box-sizing:border-box;"></div>
<div class="r" style="left:1167px;top:256px;width:741px;height:32px;background:#f1f1f1;"></div>
<div class="r" style="left:1167px;top:288px;width:741px;height:1px;background:#c8c8c8;"></div>
<div class="r" style="left:1167px;top:289px;width:741px;height:28px;background:#dedede;"></div>
<div class="r" style="left:1167px;top:317px;width:741px;height:1px;background:#d0d0d0;"></div>
<div class="r" style="left:1166px;top:345px;width:743px;height:2px;background:#c2c2c2;"></div>
<div class="r" style="left:1195px;top:256px;width:1px;height:89px;background:#c9c9c9;"></div>
<div class="r" style="left:1276px;top:256px;width:1px;height:89px;background:#c9c9c9;"></div>
<div class="r" style="left:1360px;top:256px;width:1px;height:89px;background:#c9c9c9;"></div>
<div class="r" style="left:1482px;top:256px;width:1px;height:89px;background:#c9c9c9;"></div>
<div class="r" style="left:1532px;top:256px;width:1px;height:89px;background:#c9c9c9;"></div>
<div class="r" style="left:1582px;top:256px;width:1px;height:89px;background:#c9c9c9;"></div>
<div class="r" style="left:1632px;top:256px;width:1px;height:89px;background:#c9c9c9;"></div>
<div class="t" style="left:1199.0px;top:266.7px;font-size:11.6px;color:#333;font-weight:bold;letter-spacing:-0.35px;">Member</div>
<div class="t" style="left:1281.5px;top:266.7px;font-size:11.6px;color:#333;font-weight:bold;letter-spacing:-0.35px;">Min/max</div>
<div class="t" style="left:1365.5px;top:266.7px;font-size:11.6px;color:#333;font-weight:bold;letter-spacing:-0.35px;">Displacement [mm]</div>
<div class="t" style="left:1486.5px;top:266.7px;font-size:11.6px;color:#333;font-weight:bold;letter-spacing:-0.35px;">X [m]</div>
<div class="t" style="left:1536.5px;top:266.7px;font-size:11.6px;color:#333;font-weight:bold;letter-spacing:-0.35px;">Y [m]</div>
<div class="t" style="left:1586.5px;top:266.7px;font-size:11.6px;color:#333;font-weight:bold;letter-spacing:-0.35px;">Z [m]</div>
<svg class="r" style="left:1257px;top:267px;" width="10" height="10" viewBox="0 0 10 10"><path d="M1 1.5 H9 L6 5 V9 L4 8 V5 Z" fill="#333"/></svg>
<svg class="r" style="left:1341px;top:267px;" width="10" height="10" viewBox="0 0 10 10"><path d="M1 1.5 H9 L6 5 V9 L4 8 V5 Z" fill="#333"/></svg>
<svg class="r" style="left:1176px;top:297px;" width="8" height="11" viewBox="0 0 8 11"><path d="M1.5 1 L6 5.5 L1.5 10" fill="none" stroke="#333" stroke-width="1.3"/></svg>
<div class="t" style="left:1199.0px;top:297.2px;font-size:11.6px;color:#333;font-weight:normal;letter-spacing:-0.45px;">SB1</div>
<div class="t" style="left:1281.5px;top:297.2px;font-size:11.6px;color:#333;font-weight:normal;letter-spacing:-0.45px;">Maximum</div>
<div class="t" style="left:1365.5px;top:297.2px;font-size:11.6px;color:#333;font-weight:normal;letter-spacing:-0.45px;">15.95</div>
<div class="t" style="left:1486.5px;top:297.2px;font-size:11.6px;color:#333;font-weight:normal;letter-spacing:-0.45px;">1.06</div>
<div class="t" style="left:1536.5px;top:297.2px;font-size:11.6px;color:#333;font-weight:normal;letter-spacing:-0.45px;">0.00</div>
<div class="t" style="left:1586.5px;top:297.2px;font-size:11.6px;color:#333;font-weight:normal;letter-spacing:-0.45px;">0.00</div>
<div class="t" style="left:1199.0px;top:326.2px;font-size:11.6px;color:#333;font-weight:normal;letter-spacing:-0.45px;">SB1</div>
<div class="t" style="left:1281.5px;top:326.2px;font-size:11.6px;color:#333;font-weight:normal;letter-spacing:-0.45px;">Minimum</div>
<div class="t" style="left:1365.5px;top:326.2px;font-size:11.6px;color:#333;font-weight:normal;letter-spacing:-0.45px;">2.87</div>
<div class="t" style="left:1486.5px;top:326.2px;font-size:11.6px;color:#333;font-weight:normal;letter-spacing:-0.45px;">0.00</div>
<div class="t" style="left:1536.5px;top:326.2px;font-size:11.6px;color:#333;font-weight:normal;letter-spacing:-0.45px;">0.00</div>
<div class="t" style="left:1586.5px;top:326.2px;font-size:11.6px;color:#333;font-weight:normal;letter-spacing:-0.45px;">1.06</div>
<div class="r" style="left:1168px;top:639px;width:739px;height:1px;background:#d4d4d4;"></div>
<div class="t" style="left:7.3px;top:1126.8px;font-size:12px;color:#fff;font-weight:normal;letter-spacing:-0.45px;">Design Code: EN</div>
<div class="t" style="left:110.4px;top:1126.8px;font-size:12px;color:#fff;font-weight:normal;letter-spacing:-0.05px;">Rounding: Metric</div>
<div class="t" style="left:217.7px;top:1126.8px;font-size:12px;color:#fff;font-weight:normal;letter-spacing:-0.13px;">Presentation Units: Metric</div>
<svg class="r" style="left:0;top:0" width="1920" height="1150" viewBox="0 0 1920 1150">
<defs><clipPath id="ct"><polygon points="353.0,543.4 757.0,666.0 988.6,464.5 588.2,339.0"/></clipPath><clipPath id="cl"><polygon points="353.0,543.4 757.0,666.0 748.0,892.5 350.6,767.0"/></clipPath><clipPath id="cr"><polygon points="757.0,666.0 988.6,464.5 987.5,685.5 748.0,892.5"/></clipPath></defs>
<polygon points="356.5,531.5 588,332 989.7,447 990.5,680 987.5,686 988.6,464.5 588.2,339 353,543.4" fill="#efefef" stroke="#555" stroke-width="0.9"/>
<g clip-path="url(#ct)"><polygon points="353.0,543.4 757.0,666.0 988.6,464.5 588.2,339.0" fill="#21c6ff"/><polygon points="344.9,540.9 349.8,536.7 354.7,532.4 359.6,528.2 364.5,523.9 369.4,519.7 374.3,515.4 379.2,511.1 384.1,506.9 389.0,502.6 393.9,498.4 398.8,494.1 403.7,489.8 408.6,485.6 413.5,481.3 418.4,477.1 423.3,472.8 428.2,468.5 433.1,464.3 438.0,460.0 443.0,455.8 447.9,451.5 452.8,447.2 458.8,443.3 468.6,440.6 475.3,436.9 482.1,433.2 488.8,429.5 495.6,425.8 502.3,422.1 509.0,418.4 515.8,414.8 522.5,411.1 529.3,407.4 536.0,403.7 542.7,400.0 549.5,396.3 554.0,392.0 558.6,387.6 563.2,383.3 567.7,378.9 572.3,374.5 576.8,370.2 581.4,365.8 586.0,361.5 590.5,357.1 595.1,352.7 599.7,348.4 604.2,344.0 1001.2,463.0 760.4,672.5" fill="#21e1cf"/><polygon points="344.9,540.9 349.8,536.7 354.7,532.4 359.6,528.2 364.5,523.9 369.4,519.7 374.3,515.4 379.2,511.1 386.8,507.7 397.1,505.1 407.4,502.5 417.7,499.8 427.9,497.2 436.2,494.0 444.4,490.8 452.7,487.6 460.9,484.3 469.2,481.1 477.4,477.9 485.7,474.7 493.9,471.4 502.2,468.2 510.4,465.0 518.7,461.8 526.9,458.6 533.0,454.7 539.0,450.8 545.1,446.9 551.2,443.0 557.2,439.1 563.3,435.2 569.3,431.4 575.4,427.5 581.5,423.6 587.5,419.7 593.6,415.8 599.6,411.9 605.4,407.9 611.1,404.0 616.8,400.0 622.5,396.0 628.2,392.0 634.0,388.0 639.7,384.0 645.4,380.0 651.1,376.1 656.8,372.1 662.6,368.1 668.3,364.1 1001.2,463.0 760.4,672.5" fill="#21a478"/><polygon points="373.2,549.5 383.1,546.8 393.1,544.1 403.0,541.4 413.0,538.7 422.9,535.9 432.8,533.2 442.8,530.5 452.7,527.8 462.6,525.1 472.6,522.4 482.5,519.7 492.4,517.0 500.2,513.6 507.9,510.2 515.6,506.9 523.4,503.5 531.1,500.1 538.8,496.7 546.6,493.4 554.3,490.0 562.0,486.6 569.8,483.3 577.5,479.9 585.2,476.6 591.3,472.7 597.3,468.8 603.4,464.9 609.4,461.0 615.5,457.2 621.5,453.3 627.6,449.4 633.6,445.5 639.7,441.7 645.7,437.8 651.8,433.9 657.8,430.0 663.5,426.0 669.2,422.1 675.0,418.1 680.7,414.1 686.4,410.1 692.1,406.2 697.8,402.2 703.5,398.2 709.2,394.2 714.9,390.3 720.6,386.3 726.3,382.3 1001.2,463.0 760.4,672.5" fill="#217821"/><polygon points="409.6,560.6 418.5,557.5 427.4,554.5 436.3,551.5 445.3,548.5 454.2,545.5 463.1,542.4 472.0,539.4 480.9,536.4 489.9,533.4 498.8,530.4 507.7,527.4 516.6,524.4 524.8,521.2 533.1,517.9 541.3,514.7 549.6,511.5 557.8,508.3 566.0,505.1 574.3,501.9 582.5,498.7 590.7,495.5 598.9,492.3 607.2,489.1 615.4,485.9 623.3,482.6 631.2,479.2 639.1,475.9 646.9,472.6 654.8,469.3 662.7,466.0 670.6,462.7 678.5,459.4 686.4,456.1 694.2,452.8 702.1,449.5 710.0,446.2 715.9,442.3 721.7,438.4 727.6,434.5 733.5,430.6 739.3,426.7 745.2,422.7 751.1,418.8 756.9,414.9 762.8,411.0 768.7,407.1 774.5,403.2 780.4,399.2 1001.2,463.0 760.4,672.5" fill="#91be21"/><polygon points="450.0,572.8 458.9,569.8 467.8,566.8 476.7,563.8 485.6,560.8 494.6,557.7 503.5,554.7 512.4,551.7 521.3,548.7 530.2,545.7 539.1,542.7 548.0,539.7 556.9,536.7 565.5,533.6 574.0,530.5 582.6,527.4 591.2,524.3 599.7,521.2 608.3,518.1 616.9,515.0 625.4,511.9 634.0,508.8 642.5,505.7 651.1,502.6 659.6,499.5 667.5,496.2 675.4,492.9 683.3,489.6 691.2,486.3 699.0,483.0 706.9,479.7 714.8,476.4 722.6,473.1 730.5,469.8 738.4,466.6 746.3,463.3 754.1,460.0 760.0,456.1 765.8,452.1 771.7,448.2 777.6,444.3 783.4,440.4 789.3,436.5 795.1,432.6 801.0,428.7 806.9,424.8 812.7,420.9 818.6,417.0 824.4,413.0 1001.2,463.0 760.4,672.5" fill="#f2f621"/><polygon points="494.4,586.3 503.6,583.4 512.9,580.5 522.1,577.6 531.4,574.7 540.6,571.8 549.9,568.9 559.1,566.0 568.4,563.1 577.6,560.2 586.8,557.3 596.1,554.4 605.3,551.5 615.5,548.9 625.8,546.3 636.0,543.7 646.2,541.2 656.5,538.6 666.7,536.0 676.9,533.4 687.1,530.9 697.4,528.3 707.6,525.7 717.8,523.2 728.0,520.6 736.2,517.4 744.4,514.2 752.6,511.0 760.8,507.9 769.0,504.7 777.2,501.5 785.4,498.3 793.6,495.1 801.8,492.0 810.0,488.8 818.2,485.6 826.4,482.4 832.2,478.5 838.1,474.6 843.9,470.7 849.8,466.8 855.6,462.9 861.4,459.0 867.3,455.1 873.1,451.2 879.0,447.3 884.8,443.4 890.7,439.5 896.5,435.6 1001.2,463.0 760.4,672.5" fill="#ffdc21"/><polygon points="542.9,601.0 551.1,597.8 559.3,594.6 567.6,591.4 575.8,588.2 584.0,585.0 592.2,581.8 600.5,578.6 608.7,575.4 616.9,572.2 625.1,569.0 633.3,565.8 641.6,562.6 653.6,560.6 665.7,558.6 677.8,556.6 689.9,554.6 701.9,552.6 714.0,550.5 726.1,548.5 738.1,546.5 750.2,544.6 762.2,542.6 774.3,540.6 786.3,538.6 795.4,535.7 804.4,532.7 813.4,529.8 822.4,526.9 831.5,524.0 840.5,521.1 849.5,518.2 858.5,515.3 867.5,512.4 876.6,509.5 885.6,506.5 894.6,503.6 901.6,500.1 908.6,496.6 915.6,493.1 922.6,489.5 929.6,486.0 936.6,482.5 943.6,479.0 950.6,475.4 957.6,471.9 964.6,468.4 971.6,464.9 978.6,461.4 1001.2,463.0 760.4,672.5" fill="#ffb521"/><polygon points="581.3,612.7 588.6,609.2 596.0,605.8 603.4,602.3 610.8,598.8 618.2,595.4 625.5,591.9 632.9,588.5 640.3,585.0 647.7,581.6 655.0,578.1 662.4,574.7 669.8,571.2 682.4,569.4 694.9,567.5 707.5,565.7 720.1,563.8 732.6,562.0 745.2,560.1 757.8,558.3 770.3,556.5 782.9,554.6 795.4,552.8 808.0,551.0 820.5,549.1 828.9,546.0 837.2,542.9 845.6,539.8 853.9,536.7 862.3,533.5 870.6,530.4 879.0,527.3 887.3,524.2 895.6,521.1 904.0,518.0 912.3,514.9 920.7,511.8 926.3,507.8 932.0,503.9 937.7,499.9 943.3,496.0 949.0,492.1 954.6,488.1 960.3,484.2 966.0,480.2 971.6,476.3 977.3,472.4 982.9,468.4 988.6,464.5 1001.2,463.0 760.4,672.5" fill="#ff8a21"/><polygon points="613.6,622.5 622.5,619.5 631.4,616.5 640.2,613.5 649.1,610.5 658.0,607.5 666.9,604.5 675.8,601.6 684.7,598.6 693.5,595.6 702.4,592.6 711.3,589.6 720.2,586.6 730.6,584.1 740.9,581.6 751.3,579.1 761.7,576.6 772.1,574.1 782.4,571.6 792.8,569.1 803.2,566.6 813.6,564.1 823.9,561.6 834.3,559.1 844.6,556.6 852.8,553.4 861.0,550.2 869.2,547.1 877.4,543.9 885.5,540.7 893.7,537.6 901.9,534.4 910.1,531.3 918.2,528.1 926.4,524.9 933.9,521.6 938.7,517.4 943.5,513.2 948.4,509.0 953.2,504.8 958.0,500.6 962.8,496.4 967.7,492.2 972.5,488.0 977.3,483.8 982.1,479.6 987.0,475.4 991.8,471.2 996.6,467.0 1001.2,463.0 760.4,672.5" fill="#ff4d21"/><polygon points="656.0,635.4 665.7,632.6 675.4,629.9 685.2,627.2 694.9,624.4 704.6,621.7 714.3,619.0 724.0,616.3 733.7,613.5 743.5,610.8 753.2,608.1 762.9,605.4 772.6,602.7 782.9,600.2 793.3,597.7 803.7,595.2 814.1,592.7 824.4,590.2 834.8,587.7 845.2,585.2 855.5,582.7 865.9,580.2 871.2,576.1 876.0,571.9 880.8,567.7 885.7,563.5 890.5,559.3 895.3,555.1 900.1,550.9 905.0,546.7 909.8,542.6 914.6,538.4 919.4,534.2 924.3,530.0 929.1,525.8 933.9,521.6 938.7,517.4 943.5,513.2 948.4,509.0 953.2,504.8 958.0,500.6 962.8,496.4 967.7,492.2 972.5,488.0 977.3,483.8 982.1,479.6 987.0,475.4 991.8,471.2 996.6,467.0 1001.2,463.0 760.4,672.5" fill="#f22121"/><polygon points="700.4,648.8 709.7,646.0 718.9,643.1 728.1,640.2 737.3,637.3 746.5,634.5 755.7,631.6 764.9,628.7 774.1,625.9 783.3,623.0 792.5,620.1 801.7,617.3 810.9,614.4 821.1,611.8 831.3,609.3 837.4,605.5 842.3,601.3 847.1,597.1 851.9,592.9 856.7,588.7 861.6,584.5 866.4,580.3 871.2,576.1 876.0,571.9 880.8,567.7 885.7,563.5 890.5,559.3 895.3,555.1 900.1,550.9 905.0,546.7 909.8,542.6 914.6,538.4 919.4,534.2 924.3,530.0 929.1,525.8 933.9,521.6 938.7,517.4 943.5,513.2 948.4,509.0 953.2,504.8 958.0,500.6 962.8,496.4 967.7,492.2 972.5,488.0 977.3,483.8 982.1,479.6 987.0,475.4 991.8,471.2 996.6,467.0 1001.2,463.0 760.4,672.5" fill="#c82121"/></g>
<g clip-path="url(#cl)"><polygon points="353.0,543.4 757.0,666.0 748.0,892.5 350.6,767.0" fill="#00dcc8"/><polygon points="344.9,540.9 344.9,545.6 344.8,550.3 344.8,554.9 344.7,559.6 344.7,564.2 344.6,568.9 344.6,573.5 344.5,578.2 344.5,582.9 344.4,587.5 344.4,592.2 344.4,596.8 344.3,601.5 344.3,606.1 344.2,610.8 344.2,615.5 344.1,620.1 344.1,624.8 344.0,629.4 344.0,634.1 343.9,638.7 344.1,643.5 344.7,648.3 345.2,653.2 345.8,658.0 346.3,662.8 346.8,667.7 347.3,672.5 347.8,677.3 348.2,682.1 348.7,686.9 349.1,691.8 349.6,696.6 350.0,701.4 350.4,706.2 350.8,711.0 351.2,715.8 351.5,720.6 351.9,725.3 352.2,730.1 352.6,734.9 352.9,739.7 353.2,744.4 353.5,749.2 353.8,754.0 354.1,758.7 354.3,763.5 354.6,768.3 755.8,899.5 765.3,663.9" fill="#009664"/><polygon points="372.8,549.4 373.8,554.4 374.8,559.4 375.7,564.3 376.6,569.3 377.5,574.2 378.4,579.2 379.3,584.1 380.1,589.1 381.0,594.0 381.8,598.9 382.5,603.9 383.3,608.8 384.1,613.7 384.8,618.6 385.5,623.5 386.2,628.4 386.8,633.3 387.5,638.1 388.1,643.0 388.7,647.9 389.3,652.8 389.8,657.6 390.4,662.5 390.9,667.3 391.4,672.1 391.9,677.0 392.4,681.8 392.8,686.6 393.2,691.4 393.6,696.3 394.0,701.1 394.4,705.9 394.7,710.6 395.0,715.4 395.3,720.2 395.6,725.0 395.9,729.8 396.1,734.5 396.4,739.3 396.6,744.0 396.7,748.8 396.9,753.5 397.1,758.2 397.2,763.0 397.3,767.7 397.4,772.4 397.4,777.1 397.5,781.8 755.8,899.5 765.3,663.9" fill="#006400"/><polygon points="409.2,560.4 410.2,565.5 411.3,570.5 412.3,575.5 413.3,580.5 414.3,585.5 415.3,590.4 416.3,595.4 417.3,600.4 418.2,605.4 419.1,610.4 420.1,615.3 421.0,620.3 421.9,625.3 422.7,630.2 423.6,635.2 424.4,640.2 425.3,645.1 426.1,650.0 426.9,655.0 427.7,659.9 428.5,664.9 429.2,669.8 430.0,674.7 430.7,679.6 431.4,684.5 432.1,689.5 432.8,694.4 433.5,699.3 434.1,704.2 434.8,709.1 435.4,714.0 436.0,718.8 436.6,723.7 437.2,728.6 437.8,733.5 438.4,738.4 438.9,743.2 439.4,748.1 440.0,752.9 440.5,757.8 441.0,762.7 441.4,767.5 441.9,772.3 442.3,777.2 442.8,782.0 443.2,786.8 443.6,791.7 444.0,796.5 755.8,899.5 765.3,663.9" fill="#80b400"/><polygon points="450.8,573.1 451.6,578.0 452.5,583.0 453.3,587.9 454.2,592.9 455.0,597.9 455.9,602.8 456.7,607.8 457.5,612.7 458.4,617.7 459.2,622.6 460.0,627.6 460.9,632.5 461.7,637.5 462.5,642.5 463.3,647.4 464.1,652.4 464.9,657.3 465.7,662.3 466.5,667.2 467.3,672.2 468.1,677.1 468.9,682.1 469.7,687.0 470.5,692.0 471.3,696.9 472.1,701.8 472.9,706.8 473.6,711.7 474.4,716.7 475.2,721.6 475.9,726.6 476.7,731.5 477.5,736.5 478.2,741.4 479.0,746.3 479.7,751.3 480.5,756.2 481.2,761.2 482.0,766.1 482.7,771.0 483.4,776.0 484.2,780.9 484.9,785.9 485.6,790.8 486.3,795.7 487.1,800.7 487.8,805.6 488.5,810.5 755.8,899.5 765.3,663.9" fill="#f0f500"/><polygon points="495.2,586.6 495.9,591.5 496.7,596.4 497.4,601.4 498.2,606.3 498.9,611.2 499.7,616.2 500.4,621.1 501.2,626.1 501.9,631.0 502.7,635.9 503.5,640.9 504.3,645.8 505.0,650.8 505.8,655.8 506.6,660.7 507.4,665.7 508.2,670.6 509.0,675.6 509.8,680.5 510.6,685.5 511.4,690.5 512.3,695.4 513.1,700.4 513.9,705.4 514.7,710.4 515.6,715.3 516.4,720.3 517.3,725.3 518.1,730.3 519.0,735.3 519.8,740.2 520.7,745.2 521.5,750.2 522.4,755.2 523.3,760.2 524.2,765.2 525.0,770.2 525.9,775.2 526.8,780.2 527.7,785.2 528.6,790.2 529.5,795.2 530.4,800.2 531.3,805.2 532.2,810.2 533.1,815.2 534.1,820.2 535.0,825.2 755.8,899.5 765.3,663.9" fill="#ffd700"/><polygon points="544.9,601.6 545.4,606.5 545.9,611.4 546.4,616.3 546.9,621.1 547.5,626.0 548.0,630.9 548.6,635.8 549.2,640.7 549.7,645.6 550.3,650.5 550.9,655.4 551.6,660.3 552.2,665.3 552.8,670.2 553.5,675.1 554.1,680.0 554.8,685.0 555.5,689.9 556.2,694.8 556.9,699.8 557.6,704.7 558.3,709.7 559.1,714.6 559.8,719.6 560.6,724.6 561.4,729.5 562.1,734.5 562.9,739.5 563.7,744.5 564.6,749.4 565.4,754.4 566.2,759.4 567.1,764.4 567.9,769.4 568.8,774.4 569.7,779.4 570.6,784.4 571.5,789.4 572.4,794.5 573.3,799.5 574.2,804.5 575.2,809.5 576.1,814.6 577.1,819.6 578.1,824.6 579.1,829.7 580.1,834.7 581.1,839.8 755.8,899.5 765.3,663.9" fill="#ffaa00"/><polygon points="581.3,612.7 581.9,617.6 582.5,622.5 583.2,627.5 583.9,632.4 584.6,637.3 585.3,642.3 586.0,647.2 586.7,652.2 587.4,657.1 588.2,662.1 588.9,667.1 589.7,672.0 590.5,677.0 591.3,682.0 592.1,687.0 592.9,692.0 593.8,697.0 594.6,702.0 595.5,707.0 596.3,712.0 597.2,717.0 598.1,722.0 599.0,727.0 599.9,732.0 600.9,737.0 601.8,742.1 602.8,747.1 603.7,752.1 604.7,757.2 605.7,762.2 606.7,767.3 607.7,772.3 608.8,777.4 609.8,782.5 610.8,787.5 611.9,792.6 613.0,797.7 614.1,802.8 615.2,807.9 616.3,813.0 617.4,818.1 618.5,823.2 619.7,828.3 620.8,833.4 622.0,838.5 623.2,843.6 624.4,848.7 625.6,853.8 755.8,899.5 765.3,663.9" fill="#ff7800"/><polygon points="620.9,624.7 621.4,629.6 622.0,634.5 622.6,639.4 623.3,644.4 623.9,649.3 624.6,654.3 625.3,659.2 626.0,664.2 626.7,669.1 627.4,674.1 628.2,679.1 629.0,684.1 629.8,689.1 630.6,694.1 631.4,699.1 632.3,704.1 633.2,709.1 634.1,714.1 635.0,719.1 635.9,724.2 636.9,729.2 637.8,734.3 638.8,739.3 639.8,744.4 640.9,749.4 641.9,754.5 643.0,759.6 644.1,764.7 645.2,769.8 646.3,774.9 647.4,780.0 648.6,785.1 649.8,790.2 651.0,795.3 652.2,800.5 653.4,805.6 654.7,810.7 656.0,815.9 657.3,821.1 658.6,826.2 659.9,831.4 661.2,836.6 662.6,841.8 664.0,846.9 665.4,852.1 666.8,857.3 668.3,862.6 669.7,867.8 755.8,899.5 765.3,663.9" fill="#ff3200"/><polygon points="667.3,638.8 666.9,643.4 666.6,648.1 666.3,652.7 666.1,657.4 665.9,662.1 665.8,666.8 665.7,671.6 665.7,676.3 665.7,681.1 665.7,685.8 665.9,690.6 666.0,695.4 666.2,700.2 666.5,705.1 666.8,709.9 667.1,714.8 667.5,719.7 668.0,724.5 668.4,729.5 669.0,734.4 669.6,739.3 670.2,744.3 670.9,749.2 671.6,754.2 672.4,759.2 673.2,764.2 674.1,769.2 675.0,774.3 675.9,779.3 677.0,784.4 678.0,789.5 679.1,794.6 680.3,799.7 681.5,804.8 682.7,810.0 684.0,815.2 685.3,820.3 686.7,825.5 688.1,830.7 689.6,836.0 691.1,841.2 692.7,846.5 694.3,851.7 696.0,857.0 697.7,862.3 699.4,867.6 701.2,873.0 703.1,878.3 755.8,899.5 765.3,663.9" fill="#f00000"/><polygon points="707.3,650.9 707.1,655.6 706.9,660.3 706.8,665.1 706.7,669.8 706.7,674.6 706.7,679.3 706.8,684.1 706.9,688.9 707.0,693.7 707.2,698.5 707.5,703.4 707.8,708.2 708.1,713.1 708.5,718.0 708.9,722.9 709.4,727.8 709.9,732.7 710.5,737.6 711.1,742.6 711.7,747.6 712.4,752.5 713.1,757.5 713.9,762.5 714.8,767.6 715.6,772.6 716.6,777.7 717.5,782.7 718.5,787.8 719.6,792.9 720.7,798.0 721.8,803.1 723.0,808.3 724.2,813.4 725.5,818.6 726.8,823.8 728.2,829.0 729.6,834.2 731.1,839.4 732.6,844.7 734.1,849.9 735.7,855.2 737.3,860.5 739.0,865.8 740.7,871.1 742.5,876.4 744.3,881.8 746.1,887.1 748.0,892.5 755.8,899.5 765.3,663.9" fill="#c00000"/></g>
<g clip-path="url(#cr)"><polygon points="757.0,666.0 988.6,464.5 987.5,685.5 748.0,892.5" fill="#80b400"/><polygon points="993.2,460.5 993.2,465.1 993.2,469.7 993.2,474.3 993.2,478.9 993.1,483.5 993.1,488.1 993.1,492.7 993.1,497.3 993.1,501.9 993.0,506.5 993.0,511.1 993.0,515.7 993.0,520.3 993.0,524.9 992.9,529.5 992.9,534.1 992.9,538.7 992.9,543.3 992.9,547.9 992.8,552.5 992.8,557.1 992.8,561.7 992.8,566.3 992.8,570.9 992.7,575.5 992.7,580.1 992.7,584.7 992.7,589.3 992.7,593.9 992.6,598.5 992.6,603.1 992.6,607.7 992.6,612.3 992.0,617.4 990.5,623.3 989.0,629.2 987.5,635.1 985.9,641.0 984.4,646.9 982.9,652.8 981.4,658.7 979.9,664.6 978.4,670.5 976.8,676.4 975.3,682.3 973.8,688.2 972.3,694.1 970.7,700.0 743.0,901.2 752.6,665.5" fill="#f0f500"/><polygon points="993.2,460.5 993.2,465.1 993.2,469.7 993.2,474.3 993.2,478.9 993.1,483.5 993.1,488.1 993.1,492.7 993.1,497.3 993.1,501.9 993.0,506.5 993.0,511.1 993.0,515.7 993.0,520.3 993.0,524.9 992.9,529.5 992.9,534.1 992.9,538.7 992.8,543.4 991.2,549.4 989.6,555.3 988.1,561.2 986.5,567.2 984.9,573.1 983.3,579.1 981.8,585.0 980.3,590.9 978.8,596.7 977.3,602.6 975.8,608.5 974.3,614.4 972.8,620.3 971.3,626.2 969.8,632.1 968.3,638.0 966.7,643.9 965.2,649.8 963.7,655.7 962.2,661.6 960.6,667.5 959.1,673.4 957.6,679.3 956.0,685.2 954.5,691.1 953.0,697.0 951.4,702.9 949.9,708.9 948.3,714.8 946.8,720.7 743.0,901.2 752.6,665.5" fill="#ffd700"/><polygon points="988.6,464.5 982.5,474.4 976.5,484.2 970.4,494.1 964.3,504.0 958.2,513.8 953.1,522.9 951.1,529.2 949.0,535.5 947.0,541.9 945.0,548.2 942.9,554.6 940.9,560.9 938.9,567.3 936.8,573.6 934.8,580.0 932.7,586.4 930.7,592.7 928.6,599.1 926.5,605.4 924.5,611.8 922.4,618.2 920.4,624.6 918.3,630.9 916.2,637.3 914.9,643.0 913.7,648.7 912.4,654.3 911.1,660.0 909.8,665.7 908.6,671.4 907.3,677.1 906.0,682.8 904.7,688.4 903.4,694.1 902.1,699.8 900.8,705.5 899.5,711.2 898.3,716.9 897.0,722.6 895.7,728.3 894.4,734.0 893.1,739.7 891.8,745.4 890.5,751.1 889.2,756.8 887.9,762.5 886.5,768.2 885.2,773.9 743.0,901.2 752.6,665.5" fill="#ffaa00"/><polygon points="977.0,474.6 967.7,487.2 958.4,499.9 949.1,512.6 939.8,525.3 930.5,538.0 922.9,549.1 921.1,555.3 919.2,561.5 917.3,567.7 915.5,573.9 913.6,580.1 911.7,586.3 909.9,592.5 908.0,598.7 906.1,604.9 904.2,611.1 902.4,617.3 900.5,623.5 898.6,629.7 896.7,635.9 894.8,642.1 892.9,648.3 891.0,654.6 889.1,660.8 887.5,666.8 885.9,672.7 884.3,678.7 882.6,684.7 881.0,690.7 879.4,696.6 877.8,702.6 876.1,708.6 874.5,714.6 872.9,720.6 871.2,726.6 869.6,732.5 868.0,738.5 866.3,744.5 864.7,750.5 863.0,756.5 861.4,762.5 859.7,768.5 858.1,774.5 856.4,780.5 854.8,786.5 853.1,792.5 851.5,798.5 849.8,804.5 743.0,901.2 752.6,665.5" fill="#ff7800"/><polygon points="908.0,534.6 906.6,540.4 905.3,546.2 903.9,551.9 902.5,557.7 901.1,563.5 899.5,569.4 897.3,576.0 895.0,582.6 892.7,589.1 890.4,595.7 888.1,602.3 885.7,608.8 883.4,615.4 881.1,622.0 878.8,628.6 876.5,635.2 874.2,641.8 871.8,648.4 869.5,655.0 867.2,661.5 864.8,668.1 862.5,674.7 860.1,681.3 857.8,688.0 856.2,693.9 854.5,699.9 852.9,705.9 851.3,711.9 849.6,717.9 848.0,723.8 846.4,729.8 844.7,735.8 843.1,741.8 841.4,747.8 839.8,753.8 838.1,759.8 836.5,765.8 834.8,771.8 833.2,777.8 831.5,783.8 829.9,789.8 828.2,795.8 826.5,801.8 824.9,807.8 823.2,813.8 821.5,819.8 819.8,825.8 818.2,831.8 743.0,901.2 752.6,665.5" fill="#ff3200"/><polygon points="857.5,578.5 856.0,584.4 854.5,590.3 853.1,596.1 851.6,602.0 850.1,607.9 848.5,613.8 846.9,619.8 845.2,625.8 843.6,631.8 841.9,637.8 840.3,643.8 838.6,649.8 836.9,655.8 835.3,661.8 833.6,667.8 831.9,673.9 830.2,679.9 828.6,685.9 826.9,691.9 825.2,698.0 823.5,704.0 821.8,710.0 820.1,716.0 818.5,722.1 816.7,728.2 814.9,734.3 813.1,740.4 811.3,746.5 809.5,752.6 807.7,758.7 805.9,764.9 804.1,771.0 802.3,777.1 800.5,783.2 798.7,789.3 796.9,795.5 795.1,801.6 793.3,807.7 791.5,813.9 789.7,820.0 787.9,826.1 786.0,832.3 784.2,838.4 782.4,844.5 780.6,850.7 778.7,856.8 776.9,863.0 775.1,869.1 743.0,901.2 752.6,665.5" fill="#f00000"/><polygon points="791.7,635.8 789.6,642.2 787.4,648.7 785.2,655.1 783.0,661.6 780.8,668.1 778.9,674.3 777.7,679.9 776.5,685.5 775.3,691.1 774.1,696.7 772.9,702.3 771.7,707.9 770.5,713.5 769.3,719.1 768.1,724.7 766.9,730.3 765.7,735.9 764.5,741.5 763.3,747.1 762.1,752.7 760.9,758.3 759.6,763.9 758.4,769.6 757.2,775.2 756.3,780.5 755.5,785.8 754.6,791.1 753.7,796.4 752.8,801.7 752.0,807.1 751.1,812.4 750.2,817.7 749.3,823.0 748.5,828.3 747.6,833.6 746.7,839.0 745.8,844.3 745.1,849.4 744.9,854.2 744.7,858.9 744.5,863.6 744.4,868.3 744.2,873.0 744.0,877.8 743.8,882.5 743.6,887.2 743.4,891.9 743.2,896.6 743.0,901.2 752.6,665.5" fill="#c00000"/></g>
<path clip-path="url(#cl)" d="M394.9 578.4L381.7 597.9M723.6 750.2L750.5 757.3M641.0 721.7L650.1 746.3M352.9 545.0L368.7 567.0M491.5 767.9L520.2 776.3M566.9 584.8L594.6 591.6M351.1 765.8L367.6 795.9M510.2 613.2L540.8 622.8M436.7 568.9L427.7 589.8M326.6 533.9L321.6 624.3M750.5 757.3L783.1 767.4M692.0 784.3L721.4 794.5M608.8 757.4L624.5 786.8M466.6 805.6L495.0 811.7M623.6 602.3L612.2 623.3M540.8 622.8L568.4 629.4M484.4 650.8L512.4 659.7M798.7 700.0L797.5 793.0M721.4 794.5L748.7 800.7M577.5 793.6L593.0 820.7M743.3 639.2L768.8 645.8M597.6 639.6L582.9 657.5M512.4 659.7L537.4 666.7M448.3 681.3L481.2 695.3M363.5 655.8L350.5 678.6M690.4 829.2L718.6 835.4M768.8 645.8L799.1 654.3M548.4 828.9L560.0 857.8M712.8 676.5L738.7 684.0M481.2 695.3L508.7 703.8M412.5 650.6L396.6 667.3M341.0 699.3L323.8 713.8M659.0 862.9L691.6 875.4M738.7 684.0L766.8 688.2M321.6 624.3L323.6 762.5M673.8 639.5L655.2 659.1M680.1 711.8L714.6 719.1M595.5 684.6L582.3 702.8M451.4 729.2L479.1 739.5M379.9 686.5L364.5 705.4M780.6 859.7L790.8 881.8M714.6 719.1L739.5 728.2M797.5 793.0L788.2 926.4M323.8 713.8L323.6 762.5M637.5 676.0L622.0 691.8M736.6 867.3L748.6 890.5M566.1 719.8L548.9 737.2M422.0 769.7L452.6 774.9M350.3 720.0L337.2 741.3M471.6 576.6L499.3 588.0M748.6 890.5L757.8 918.5M324.1 583.4L337.8 605.5M678.7 754.8L710.1 764.7M606.8 713.1L591.3 730.3M536.7 760.5L520.2 776.3M507.9 793.7L522.1 820.9M395.9 803.1L420.6 809.6M379.4 732.7L369.5 750.2M440.4 615.9L465.2 622.4M771.6 782.6L780.3 808.4M641.0 721.7L623.5 740.1M652.4 794.1L679.9 802.0M582.7 749.7L564.0 765.6M420.6 809.6L455.3 822.3M351.1 765.8L337.3 781.8M739.8 822.2L752.8 846.5M510.2 613.2L525.7 639.6M608.8 757.4L589.6 777.1M553.9 785.3L536.1 803.5M367.6 795.9L533.6 849.3M556.8 603.1L568.4 629.4M650.7 839.1L674.0 847.0M701.9 852.5L718.7 885.1M484.4 650.8L496.8 676.9M577.5 793.6L563.4 811.4M522.1 820.9L506.7 835.9M743.3 639.2L755.7 665.2M780.3 808.4L764.9 827.9M618.5 873.5L647.8 882.7M448.3 681.3L464.3 709.1M548.4 828.9L533.6 849.3M326.6 533.9L335.3 559.0M535.9 709.5L526.1 731.9M712.8 676.5L724.4 703.3M512.5 567.5L524.6 599.1M752.8 846.5L736.6 867.3M436.7 568.9L471.6 576.6M718.7 885.1L732.8 912.2M423.2 722.2L436.0 749.1M798.7 700.0L786.7 723.6M650.1 746.3L678.7 754.8M510.9 750.3L491.5 767.9M623.6 602.3L686.0 621.3M680.1 711.8L697.9 741.2M780.6 859.7L762.9 871.1M367.6 795.9L395.9 803.1M481.8 607.8L496.5 630.2M409.6 605.2L440.4 615.9M392.2 755.2L407.0 782.7M764.6 738.4L750.5 757.3M624.5 786.8L652.4 794.1M476.9 783.4L466.6 805.6M748.6 890.5L732.8 912.2M524.6 599.1L540.8 622.8M451.4 638.6L465.7 667.0M378.2 638.7L412.5 650.6M797.3 747.3L783.1 767.4M739.0 775.7L721.4 794.5M593.0 820.7L622.0 833.3M507.9 793.7L495.0 811.7M641.4 632.1L673.8 639.5M496.5 630.2L512.4 659.7M412.5 650.6L438.7 659.5M350.5 678.6L379.9 686.5M771.6 782.6L748.7 800.7M707.4 811.2L690.4 829.2M622.0 833.3L650.7 839.1M673.8 639.5L699.8 647.8M611.2 663.6L637.5 676.0M525.7 639.6L537.4 666.7M465.7 667.0L481.2 695.3M379.9 686.5L408.0 697.2M323.8 713.8L350.3 720.0M739.8 822.2L718.6 835.4M748.7 800.7L739.8 822.2M395.6 532.1L425.6 545.3M592.1 864.1L618.5 873.5M728.5 655.2L738.7 684.0M637.5 676.0L664.0 684.9M582.3 702.8L606.8 713.1M496.8 676.9L508.7 703.8M437.3 700.2L451.4 729.2M350.3 720.0L379.4 732.7M425.6 545.3L453.3 550.2M701.9 852.5L691.6 875.4M368.7 567.0L394.9 578.4M755.7 665.2L766.8 688.2M693.6 693.8L714.6 719.1M606.8 713.1L641.0 721.7M548.9 737.2L582.7 749.7M464.3 709.1L479.1 739.5M799.1 654.3L798.7 700.0M323.6 762.5L351.1 765.8M484.4 561.3L471.6 576.6M394.9 578.4L427.7 589.8M337.8 605.5L366.3 613.0M724.4 703.3L739.5 728.2M668.6 731.9L678.7 754.8M582.7 749.7L608.8 757.4M520.2 776.3L553.9 785.3M436.0 749.1L452.6 774.9M512.5 567.5L499.3 588.0M718.7 885.1L702.3 898.6M366.3 613.0L397.9 623.5M697.9 741.2L710.1 764.7M553.9 785.3L577.5 793.6M623.6 602.3L653.8 612.4M407.0 782.7L420.6 809.6M481.8 607.8L465.2 622.4M499.3 588.0L481.8 607.8M341.8 654.8L363.5 655.8M667.1 776.0L679.9 802.0M522.1 820.9L548.4 828.9M708.8 627.5L728.5 655.2M597.6 639.6L629.1 651.1M524.6 599.1L510.2 613.2M451.4 638.6L438.7 659.5M465.2 622.4L451.4 638.6M423.3 678.8L437.3 700.2M636.8 815.5L650.7 839.1M683.2 668.4L693.6 693.8M566.4 676.2L595.5 684.6M496.5 630.2L484.4 650.8M593.0 820.7L607.9 847.9M395.0 708.9L407.2 739.4M512.5 567.5L594.6 591.6M752.8 846.5L780.6 859.7M607.9 847.9L618.5 873.5M699.8 647.8L683.2 668.4M657.6 703.0L668.6 731.9M465.7 667.0L448.3 681.3M797.5 793.0L790.8 881.8M369.5 750.2L376.3 775.0M728.5 655.2L712.8 676.5M623.5 740.1L637.3 767.9M437.3 700.2L423.2 722.2M693.6 693.8L680.1 711.8M589.6 777.1L607.4 800.8M464.3 709.1L451.4 729.2M407.2 739.4L392.2 755.2M594.6 591.6L623.6 602.3M452.9 595.6L440.4 615.9M668.6 731.9L650.1 746.3M637.3 767.9L652.4 794.1M563.4 811.4L574.8 835.2M481.5 829.8L533.6 849.3M436.0 749.1L422.0 769.7M376.3 775.0L367.6 795.9M568.4 629.4L597.6 639.6M424.0 631.1L412.5 650.6M748.7 800.7L780.3 808.4M607.4 800.8L622.0 833.3M407.0 782.7L395.9 803.1M686.0 621.3L673.8 639.5M537.4 666.7L566.4 676.2M396.6 667.3L379.9 686.5M667.1 776.0L652.4 794.1M367.1 523.6L380.5 551.5M574.8 835.2L592.1 864.1M708.8 627.5L699.8 647.8M655.2 659.1L637.5 676.0M508.7 703.8L535.9 709.5M423.3 678.8L408.0 697.2M364.5 705.4L350.3 720.0M762.9 871.1L774.2 902.3M674.4 891.5L732.8 912.2M636.8 815.5L622.0 833.3M766.8 688.2L798.7 700.0M683.2 668.4L664.0 684.9M622.0 691.8L606.8 713.1M535.9 709.5L566.1 719.8M395.0 708.9L379.4 732.7M337.2 741.3L323.6 762.5M718.7 885.1L748.6 890.5M607.9 847.9L592.1 864.1M380.5 551.5L394.9 578.4M739.5 728.2L764.6 738.4M657.6 703.0L641.0 721.7M664.0 684.9L657.6 703.0M591.3 730.3L582.7 749.7M510.9 750.3L536.7 760.5M369.5 750.2L351.1 765.8M499.3 588.0L524.6 599.1M774.2 902.3L788.2 926.4M411.0 561.1L427.7 589.8M350.6 586.4L366.3 613.0M764.6 738.4L797.3 747.3M710.1 764.7L739.0 775.7M623.5 740.1L608.8 757.4M560.0 857.8L674.4 891.5M564.0 765.6L553.9 785.3M708.8 627.5L799.1 654.3M476.9 783.4L507.9 793.7M524.6 599.1L556.8 603.1M465.2 622.4L496.5 630.2M381.7 597.9L397.9 623.5M321.6 624.3L341.8 654.8M739.0 775.7L771.6 782.6M589.6 777.1L577.5 793.6M536.1 803.5L522.1 820.9M455.3 822.3L481.5 829.8M584.0 614.5L597.6 639.6M718.6 835.4L752.8 846.5M496.5 630.2L525.7 639.6M438.7 659.5L465.7 667.0M350.8 632.2L363.5 655.8M797.5 793.0L780.3 808.4M707.4 811.2L739.8 822.2M637.3 767.9L624.5 786.8M563.4 811.4L548.4 828.9M338.8 517.2L352.9 545.0M699.8 647.8L728.5 655.2M612.2 623.3L629.1 651.1M691.6 875.4L718.7 885.1M465.7 667.0L496.8 676.9M323.0 666.1L341.0 699.3M764.9 827.9L752.8 846.5M674.0 847.0L701.9 852.5M453.3 550.2L512.5 567.5M607.4 800.8L593.0 820.7M728.5 655.2L755.7 665.2M479.1 739.5L510.9 750.3M582.9 657.5L595.5 684.6M437.3 700.2L464.3 709.1M791.9 840.4L780.6 859.7M367.1 523.6L352.9 545.0M647.8 882.7L674.4 891.5M335.3 559.0L350.6 586.4M574.8 835.2L560.0 857.8M452.6 774.9L476.9 783.4M693.6 693.8L724.4 703.3M555.4 696.8L566.1 719.8M407.2 739.4L436.0 749.1M484.4 561.3L512.5 567.5M762.9 871.1L748.6 890.5M541.0 579.1L556.8 603.1M352.9 545.0L335.3 559.0M668.6 731.9L697.9 741.2M526.1 731.9L536.7 760.5M376.3 775.0L407.0 782.7M566.9 584.8L584.0 614.5M679.9 802.0L707.4 811.2M380.5 551.5L368.7 567.0M540.8 622.8L556.1 650.7M774.2 902.3L757.8 918.5M350.6 586.4L337.8 605.5M408.0 697.2L437.3 700.2M512.4 659.7L523.7 685.8M768.8 645.8L787.8 677.5M584.0 614.5L568.4 629.4M556.1 650.7L566.4 676.2M481.2 695.3L487.0 718.7M338.8 517.2L326.6 533.9M738.7 684.0L755.6 708.6M797.5 793.0L791.9 840.4M664.0 684.9L693.6 693.8M523.7 685.8L535.9 709.5M451.4 729.2L461.4 756.4M453.3 550.2L484.4 561.3M736.6 867.3L718.7 885.1M787.8 677.5L798.7 700.0M714.6 719.1L723.6 750.2M479.1 739.5L491.5 767.9M487.0 718.7L510.9 750.3M422.0 769.7L436.1 791.9M427.7 589.8L452.9 595.6M335.3 559.0L324.1 583.4M324.1 583.4L321.6 624.3M755.6 708.6L764.6 738.4M678.7 754.8L692.0 784.3M452.6 774.9L466.6 805.6M461.4 756.4L476.9 783.4M541.0 579.1L524.6 599.1M397.9 623.5L424.0 631.1M786.7 723.6L797.3 747.3M723.6 750.2L739.0 775.7M637.3 767.9L667.1 776.0M652.4 794.1L663.8 819.9M491.5 767.9L507.9 793.7M653.8 612.4L686.0 621.3M436.1 791.9L455.3 822.3M510.2 613.2L496.5 630.2M750.5 757.3L771.6 782.6M679.9 802.0L690.4 829.2M692.0 784.3L707.4 811.2M607.4 800.8L636.8 815.5M466.6 805.6L481.5 829.8M629.1 651.1L655.2 659.1M540.8 622.8L525.7 639.6M556.8 603.1L540.8 622.8M484.4 650.8L465.7 667.0M721.4 794.5L739.8 822.2M650.7 839.1L659.0 862.9M663.8 819.9L674.0 847.0M574.8 835.2L607.9 847.9M743.3 639.2L728.5 655.2M379.4 732.7L407.2 739.4M512.4 659.7L496.8 676.9M448.3 681.3L437.3 700.2M364.5 705.4L395.0 708.9M641.0 721.7L668.6 731.9M690.4 829.2L701.9 852.5M352.9 545.0L380.5 551.5M634.9 858.6L647.8 882.7M768.8 645.8L755.7 665.2M326.6 533.9L324.1 583.4M712.8 676.5L693.6 693.8M351.1 765.8L376.3 775.0M556.1 650.7L537.4 666.7M481.2 695.3L464.3 709.1M423.2 722.2L407.2 739.4M337.2 741.3L369.5 750.2M732.8 912.2L788.2 926.4M608.8 757.4L637.3 767.9M659.0 862.9L674.4 891.5M738.7 684.0L724.4 703.3M798.7 700.0L797.3 747.3M680.1 711.8L668.6 731.9M591.3 730.3L623.5 740.1M650.1 746.3L667.1 776.0M523.7 685.8L508.7 703.8M451.4 729.2L436.0 749.1M392.2 755.2L376.3 775.0M577.5 793.6L607.4 800.8M787.8 677.5L766.8 688.2M714.6 719.1L697.9 741.2M564.0 765.6L589.6 777.1M624.5 786.8L636.8 815.5M487.0 718.7L479.1 739.5M363.5 655.8L396.6 667.3M422.0 769.7L407.0 782.7M471.6 576.6L481.8 607.8M548.4 828.9L574.8 835.2M321.6 624.3L350.8 632.2M797.3 747.3L797.5 793.0M755.6 708.6L739.5 728.2M678.7 754.8L667.1 776.0M536.1 803.5L563.4 811.4M461.4 756.4L452.6 774.9M341.0 699.3L364.5 705.4M440.4 615.9L451.4 638.6M723.6 750.2L710.1 764.7M595.5 684.6L622.0 691.8M652.4 794.1L636.8 815.5M525.7 639.6L512.4 659.7M622.0 833.3L634.9 858.6M506.7 835.9L533.6 849.3M436.1 791.9L420.6 809.6M764.9 827.9L791.9 840.4M692.0 784.3L679.9 802.0M566.1 719.8L591.3 730.3M395.6 532.1L411.0 561.1M496.8 676.9L481.2 695.3M323.0 666.1L323.6 762.5M748.6 890.5L774.2 902.3M324.1 583.4L350.6 586.4M755.7 665.2L738.7 684.0M425.6 545.3L436.7 568.9M663.8 819.9L650.7 839.1M536.7 760.5L564.0 765.6M368.7 567.0L381.7 597.9M724.4 703.3L714.6 719.1M394.9 578.4L409.6 605.2M634.9 858.6L618.5 873.5M337.8 605.5L350.8 632.2M697.9 741.2L678.7 754.8M436.7 568.9L452.9 595.6M366.3 613.0L378.2 638.7M395.6 532.1L512.5 567.5M650.1 746.3L637.3 767.9M623.6 602.3L641.4 632.1M556.8 603.1L584.0 614.5M409.6 605.2L424.0 631.1M341.8 654.8L350.5 678.6M624.5 786.8L607.4 800.8M597.6 639.6L611.2 663.6M326.6 533.9L352.9 545.0M378.2 638.7L396.6 667.3M593.0 820.7L574.8 835.2M641.4 632.1L655.2 659.1M512.5 567.5L566.9 584.8M566.4 676.2L582.3 702.8M341.0 699.3L350.3 720.0M350.5 678.6L364.5 705.4M622.0 833.3L607.9 847.9M611.2 663.6L622.0 691.8M379.9 686.5L395.0 708.9M323.8 713.8L337.2 741.3M367.6 795.9L455.3 822.3M395.6 532.1L380.5 551.5M582.3 702.8L591.3 730.3M350.3 720.0L369.5 750.2M702.3 898.6L732.8 912.2M368.7 567.0L350.6 586.4M507.9 793.7L536.1 803.5M606.8 713.1L623.5 740.1M536.7 760.5L553.9 785.3M548.9 737.2L564.0 765.6M395.9 803.1L455.3 822.3M771.6 782.6L797.5 793.0M323.6 762.5L337.3 781.8M594.6 591.6L612.2 623.3M337.8 605.5L321.6 624.3M481.5 829.8L506.7 835.9M525.7 639.6L556.1 650.7M582.7 749.7L589.6 777.1M520.2 776.3L536.1 803.5M436.1 791.9L466.6 805.6M739.8 822.2L764.9 827.9M568.4 629.4L582.9 657.5M366.3 613.0L350.8 632.2M783.1 767.4L797.5 793.0M496.8 676.9L523.7 685.8M553.9 785.3L563.4 811.4M367.6 795.9L560.0 857.8M701.9 852.5L736.6 867.3M537.4 666.7L555.4 696.8M409.6 605.2L397.9 623.5M755.7 665.2L787.8 677.5M341.8 654.8L323.0 666.1M663.8 819.9L690.4 829.2M464.3 709.1L487.0 718.7M522.1 820.9L533.6 849.3M674.4 891.5L702.3 898.6M508.7 703.8L526.1 731.9M378.2 638.7L363.5 655.8M724.4 703.3L755.6 708.6M594.6 591.6L708.8 627.5M780.3 808.4L791.9 840.4M634.9 858.6L659.0 862.9M436.0 749.1L461.4 756.4M766.8 688.2L786.7 723.6M641.4 632.1L629.1 651.1M512.5 567.5L541.0 579.1M790.8 881.8L774.2 902.3M566.4 676.2L555.4 696.8M535.9 709.5L548.9 737.2M423.2 722.2L451.4 729.2M350.5 678.6L341.0 699.3M697.9 741.2L723.6 750.2M752.8 846.5L762.9 871.1M407.0 782.7L436.1 791.9M739.5 728.2L750.5 757.3M611.2 663.6L595.5 684.6M481.8 607.8L510.2 613.2M411.0 561.1L394.9 578.4M510.9 750.3L520.2 776.3M392.2 755.2L422.0 769.7M395.6 532.1L594.6 591.6M667.1 776.0L692.0 784.3M560.0 857.8L647.8 882.7M708.8 627.5L768.8 645.8M764.6 738.4L783.1 767.4M710.1 764.7L721.4 794.5M582.3 702.8L566.1 719.8M451.4 638.6L484.4 650.8M381.7 597.9L366.3 613.0M476.9 783.4L495.0 811.7M636.8 815.5L663.8 819.9M495.0 811.7L506.7 835.9M321.6 624.3L323.0 666.1M739.0 775.7L748.7 800.7M548.9 737.2L536.7 760.5M350.8 632.2L341.8 654.8M594.6 591.6L584.0 614.5M607.9 847.9L634.9 858.6M612.2 623.3L597.6 639.6M707.4 811.2L718.6 835.4M520.2 776.3L507.9 793.7M568.4 629.4L556.1 650.7M323.0 666.1L323.8 713.8M783.1 767.4L771.6 782.6M748.7 800.7L764.9 827.9M582.9 657.5L566.4 676.2M674.0 847.0L691.6 875.4M395.6 532.1L453.3 550.2M537.4 666.7L523.7 685.8M791.9 840.4L790.8 881.8M555.4 696.8L535.9 709.5M799.1 654.3L787.8 677.5M452.9 595.6L481.8 607.8M508.7 703.8L487.0 718.7M594.6 591.6L686.0 621.3M484.4 561.3L499.3 588.0M526.1 731.9L510.9 750.3M766.8 688.2L755.6 708.6M566.9 584.8L556.8 603.1M424.0 631.1L451.4 638.6M790.8 881.8L788.2 926.4M686.0 621.3L708.8 627.5M739.5 728.2L723.6 750.2M396.6 667.3L423.3 678.8M499.3 588.0L510.2 613.2M560.0 857.8L618.5 873.5M708.8 627.5L743.3 639.2M655.2 659.1L683.2 668.4M710.1 764.7L692.0 784.3M423.3 678.8L448.3 681.3M465.2 622.4L484.4 650.8M495.0 811.7L481.5 829.8M683.2 668.4L712.8 676.5M622.0 691.8L657.6 703.0M594.6 591.6L799.1 654.3M395.0 708.9L423.2 722.2M718.6 835.4L736.6 867.3M380.5 551.5L411.0 561.1M438.7 659.5L448.3 681.3M657.6 703.0L680.1 711.8M699.8 647.8L712.8 676.5M369.5 750.2L392.2 755.2M411.0 561.1L436.7 568.9M691.6 875.4L702.3 898.6M350.6 586.4L381.7 597.9M623.5 740.1L650.1 746.3M674.0 847.0L659.0 862.9M453.3 550.2L471.6 576.6M479.1 739.5L461.4 756.4M337.3 781.8L367.6 795.9M560.0 857.8L732.8 912.2M381.7 597.9L409.6 605.2M589.6 777.1L624.5 786.8M427.7 589.8L440.4 615.9M452.6 774.9L436.1 791.9M584.0 614.5L612.2 623.3M350.8 632.2L378.2 638.7M455.3 822.3L533.6 849.3M407.2 739.4L422.0 769.7M786.7 723.6L764.6 738.4M452.9 595.6L465.2 622.4M563.4 811.4L593.0 820.7M397.9 623.5L412.5 650.6M491.5 767.9L476.9 783.4M612.2 623.3L641.4 632.1M323.0 666.1L350.5 678.6M653.8 612.4L673.8 639.5M376.3 775.0L395.9 803.1M750.5 757.3L739.0 775.7M679.9 802.0L663.8 819.9M424.0 631.1L438.7 659.5M533.6 849.3L560.0 857.8M466.6 805.6L455.3 822.3M582.9 657.5L611.2 663.6M686.0 621.3L699.8 647.8M629.1 651.1L637.5 676.0M721.4 794.5L707.4 811.2M367.1 523.6L395.6 532.1M650.7 839.1L634.9 858.6M560.0 857.8L592.1 864.1M396.6 667.3L408.0 697.2M555.4 696.8L582.3 702.8M408.0 697.2L423.2 722.2M655.2 659.1L664.0 684.9M762.9 871.1L790.8 881.8M690.4 829.2L674.0 847.0M364.5 705.4L379.4 732.7M526.1 731.9L548.9 737.2M622.0 691.8L641.0 721.7M732.8 912.2L757.8 918.5M718.6 835.4L701.9 852.5M659.0 862.9L647.8 882.7M438.7 659.5L423.3 678.8M337.2 741.3L351.1 765.8M664.0 684.9L680.1 711.8M757.8 918.5L788.2 926.4M591.3 730.3L608.8 757.4M691.6 875.4L674.4 891.5M453.3 550.2L436.7 568.9M471.6 576.6L452.9 595.6M564.0 765.6L577.5 793.6M363.5 655.8L379.9 686.5M427.7 589.8L409.6 605.2M495.0 811.7L522.1 820.9M556.1 650.7L582.9 657.5M440.4 615.9L424.0 631.1M536.1 803.5L548.4 828.9M412.5 650.6L423.3 678.8M338.8 517.2L367.1 523.6M397.9 623.5L378.2 638.7M673.8 639.5L683.2 668.4M595.5 684.6L606.8 713.1M523.7 685.8L555.4 696.8M653.8 612.4L641.4 632.1M736.6 867.3L762.9 871.1M764.9 827.9L780.6 859.7M637.5 676.0L657.6 703.0M566.1 719.8L582.7 749.7M487.0 718.7L526.1 731.9M629.1 651.1L611.2 663.6M425.6 545.3L411.0 561.1M335.3 559.0L368.7 567.0M755.6 708.6L786.7 723.6M408.0 697.2L395.0 708.9M461.4 756.4L491.5 767.9M379.4 732.7L392.2 755.2M541.0 579.1L566.9 584.8" fill="none" stroke="#000" stroke-width="0.85"/>
<path clip-path="url(#cr)" d="M780.9 667.1L772.2 690.6M1014.0 420.8L1014.5 502.6M970.2 561.0L987.3 543.2M919.9 603.8L931.4 614.0M759.5 663.3L763.0 680.6M834.9 758.5L853.2 740.0M881.5 535.0L898.9 520.9M746.5 873.5L755.0 885.2M847.4 605.6L864.9 591.9M809.2 618.9L800.2 648.1M739.0 678.8L736.2 763.6M932.5 490.9L979.4 451.4M987.3 543.2L1006.3 529.9M956.9 614.8L971.9 600.1M903.4 657.8L912.3 668.2M730.6 928.6L868.8 811.8M816.9 814.6L837.7 793.5M912.1 511.0L906.6 534.1M864.9 591.9L881.0 577.8M830.2 662.2L847.7 645.6M971.9 600.1L985.3 588.4M886.4 713.2L895.1 725.2M979.4 451.4L997.7 435.3M798.6 870.1L814.5 854.6M896.3 563.2L889.4 591.4M847.7 645.6L863.0 634.8M810.7 719.9L828.9 701.6M762.7 760.1L752.8 787.5M953.0 654.5L971.7 640.1M997.7 435.3L1014.0 420.8M869.3 765.9L878.0 779.4M814.5 854.6L833.9 836.4M961.8 506.8L979.8 488.8M828.9 701.6L845.4 688.2M868.8 811.8L918.9 767.3M788.0 721.3L779.6 744.3M743.8 816.1L732.5 848.6M934.5 710.7L953.7 694.4M979.8 488.8L996.9 477.5M938.6 505.6L930.7 534.8M946.5 561.6L961.0 547.9M897.0 603.6L887.9 634.0M807.2 763.6L827.6 745.8M768.5 773.7L757.4 805.4M1005.8 609.2L1011.4 627.5M918.9 767.3L934.1 753.3M961.0 547.9L979.2 531.3M732.5 848.6L732.0 884.5M922.5 563.8L913.7 588.0M977.2 654.1L988.7 665.4M878.3 662.2L871.3 686.0M791.2 815.9L809.5 802.0M750.4 830.7L740.2 860.3M821.2 608.6L837.9 596.8M988.7 665.4L996.3 680.8M934.1 753.3L953.0 737.6M738.3 720.5L747.9 732.9M944.8 602.7L963.5 584.9M904.4 620.0L898.7 645.7M963.0 710.0L970.5 719.1M858.7 715.6L853.2 740.0M842.2 769.8L850.6 782.6M775.6 869.0L792.4 853.4M767.0 816.5L757.0 841.6M805.1 663.2L822.8 646.0M997.4 555.7L1004.6 571.4M732.0 884.5L730.6 928.6M919.9 603.8L912.6 630.8M929.1 655.9L945.2 642.0M887.8 675.2L876.4 700.9M792.4 853.4L809.2 838.7M824.6 830.2L833.9 836.4M746.5 873.5L740.3 898.2M977.2 614.4L989.7 621.1M847.4 605.6L855.6 620.7M903.4 657.8L895.1 682.3M868.8 729.7L858.5 757.8M871.0 566.3L881.0 577.8M798.0 611.3L832.0 579.1M962.7 667.6L968.1 681.5M929.0 696.1L946.9 681.3M886.4 713.2L876.4 738.5M830.2 662.2L836.7 676.2M850.6 782.6L843.2 809.5M979.4 451.4L987.5 462.5M1004.6 571.4L998.8 598.8M910.5 752.2L929.4 736.2M945.9 719.7L953.0 737.6M810.7 719.9L819.2 732.5M739.0 678.8L747.8 693.7M869.3 765.9L859.1 797.0M863.4 672.1L852.6 706.5M961.8 506.8L971.6 515.2M848.4 566.6L857.4 577.1M989.7 621.1L977.2 654.1M809.2 618.9L821.2 608.6M968.1 681.5L980.0 692.4M792.7 773.7L799.9 787.4M1013.2 462.5L1003.3 490.7M931.4 614.0L944.8 602.7M846.9 727.3L834.9 758.5M946.5 561.6L956.1 570.3M1005.8 609.2L995.8 638.6M755.0 885.2L775.6 869.0M830.1 621.2L839.2 634.7M789.0 678.2L805.1 663.2M774.7 827.2L783.1 841.2M993.6 519.6L987.3 543.2M912.3 668.2L929.1 655.9M826.0 782.8L816.9 814.6M857.4 577.1L864.9 591.9M988.7 665.4L980.0 692.4M812.0 678.5L821.1 691.2M770.3 734.9L788.0 721.3M1014.5 502.6L1006.3 529.9M977.5 571.8L971.9 600.1M895.1 725.2L911.7 711.3M833.9 836.4L868.8 811.8M842.2 769.8L837.7 793.5M923.8 519.1L938.6 505.6M839.2 634.7L847.7 645.6M788.0 721.3L805.5 703.9M752.8 787.5L768.5 773.7M997.4 555.7L985.3 588.4M961.8 626.7L953.0 654.5M911.7 711.3L929.0 696.1M938.6 505.6L954.2 496.6M824.6 830.2L814.5 854.6M905.5 574.3L922.5 563.8M855.6 620.7L863.0 634.8M821.1 691.2L828.9 701.6M768.5 773.7L787.3 759.0M732.5 848.6L750.4 830.7M977.2 614.4L971.7 640.1M985.3 588.4L977.2 614.4M783.1 623.1L798.0 611.3M891.0 768.4L910.5 752.2M973.1 477.3L979.8 488.8M922.5 563.8L939.8 547.3M887.9 634.0L904.4 620.0M836.7 676.2L845.4 688.2M801.7 746.0L807.2 763.6M750.4 830.7L767.0 816.5M798.0 611.3L815.3 596.3M962.7 667.6L953.7 694.4M763.0 680.6L780.9 667.1M987.5 462.5L996.9 477.5M953.0 536.9L961.0 547.9M904.4 620.0L919.9 603.8M871.3 686.0L887.8 675.2M819.2 732.5L827.6 745.8M1014.0 420.8L1013.2 462.5M898.9 520.9L932.5 490.9M732.0 884.5L746.5 873.5M832.0 579.1L821.2 608.6M780.9 667.1L800.2 648.1M945.9 719.7L934.1 753.3M747.9 732.9L763.1 723.1M971.6 515.2L979.2 531.3M937.7 590.0L944.8 602.7M887.8 675.2L903.4 657.8M853.2 740.0L868.8 729.7M799.9 787.4L809.5 802.0M848.4 566.6L837.9 596.8M968.1 681.5L963.0 710.0M763.1 723.1L781.7 704.0M956.1 570.3L963.5 584.9M868.8 729.7L886.4 713.2M912.1 511.0L932.5 490.9M783.1 841.2L792.4 853.4M830.1 621.2L822.8 646.0M837.9 596.8L830.1 621.2M745.2 774.9L762.7 760.1M755.0 885.2L764.0 898.8M938.4 627.3L945.2 642.0M850.6 782.6L869.3 765.9M962.5 467.9L973.1 477.3M896.3 563.2L913.5 548.9M857.4 577.1L847.4 605.6M812.0 678.5L805.5 703.9M822.8 646.0L812.0 678.5M793.7 733.9L801.7 746.0M832.0 579.1L881.5 535.0M920.1 683.0L929.0 696.1M833.9 836.4L850.4 822.2M945.2 522.3L953.0 536.9M880.5 620.1L897.0 603.6M839.2 634.7L830.2 662.2M895.1 725.2L901.0 738.8M736.2 763.6L732.5 848.6M775.6 788.5L783.8 801.7M989.7 621.1L1005.8 609.2M901.0 738.8L910.5 752.2M954.2 496.6L945.2 522.3M927.7 578.4L937.7 590.0M821.1 691.2L810.7 719.9M757.0 841.6L765.8 856.1M953.0 737.6L987.8 706.4M973.1 477.3L961.8 506.8M912.6 630.8L922.2 642.9M801.7 746.0L792.7 773.7M740.3 898.2L746.6 914.1M953.0 536.9L946.5 561.6M895.1 682.3L905.2 695.7M819.2 732.5L807.2 763.6M783.8 801.7L774.7 827.2M898.9 520.9L912.1 511.0M813.2 636.9L805.1 663.2M937.7 590.0L931.4 614.0M922.2 642.9L929.1 655.9M876.4 738.5L884.6 754.4M799.9 787.4L791.2 815.9M765.8 856.1L755.0 885.2M881.0 577.8L896.3 563.2M796.0 689.7L788.0 721.3M985.3 588.4L1004.6 571.4M905.2 695.7L911.7 711.3M859.1 797.0L868.8 811.8M946.0 480.4L938.6 505.6M783.1 841.2L775.6 869.0M863.0 634.8L880.5 620.1M779.6 744.3L768.5 773.7M938.4 627.3L929.1 655.9M768.1 635.2L773.9 651.3M878.0 779.4L887.2 791.8M884.6 754.4L891.0 768.4M962.5 467.9L954.2 496.6M930.7 534.8L922.5 563.8M845.4 688.2L863.4 672.1M793.7 733.9L787.3 759.0M757.4 805.4L750.4 830.7M832.0 579.1L866.3 549.5M995.8 638.6L1004.6 649.3M920.1 683.0L911.7 711.3M996.9 477.5L1013.2 462.5M945.2 522.3L939.8 547.3M913.7 588.0L904.4 620.0M863.4 672.1L878.3 662.2M775.6 788.5L767.0 816.5M740.2 860.3L732.0 884.5M968.1 681.5L988.7 665.4M980.0 692.4L987.8 706.4M901.0 738.8L891.0 768.4M773.9 651.3L780.9 667.1M979.2 531.3L993.6 519.6M927.7 578.4L919.9 603.8M939.8 547.3L927.7 578.4M898.7 645.7L887.8 675.2M846.9 727.3L858.7 715.6M757.0 841.6L746.5 873.5M837.9 596.8L857.4 577.1M1004.6 649.3L1011.9 664.2M996.3 680.8L1004.6 691.5M953.0 737.6L970.5 719.1M790.3 637.1L800.2 648.1M755.0 706.6L763.1 723.1M993.6 519.6L1014.5 502.6M963.5 584.9L977.5 571.8M768.1 635.2L832.0 579.1M912.6 630.8L903.4 657.8M876.4 700.9L868.8 729.7M826.0 782.8L842.2 769.8M764.0 898.8L798.6 870.1M857.4 577.1L871.0 566.3M740.3 898.2L730.6 928.6M822.8 646.0L839.2 634.7M772.2 690.6L781.7 704.0M736.2 763.6L745.2 774.9M977.5 571.8L997.4 555.7M895.1 682.3L886.4 713.2M858.5 757.8L850.6 782.6M809.2 838.7L824.6 830.2M1014.5 502.6L1015.0 582.8M891.3 544.7L896.3 563.2M971.7 640.1L989.7 621.1M839.2 634.7L855.6 620.7M805.5 703.9L821.1 691.2M754.9 742.9L762.7 760.1M1013.1 543.6L1004.6 571.4M961.8 626.7L977.2 614.4M922.2 642.9L912.3 668.2M750.7 650.8L759.5 663.3M876.4 738.5L869.3 765.9M954.2 496.6L973.1 477.3M843.2 809.5L833.9 836.4M906.6 534.1L913.5 548.9M953.7 694.4L968.1 681.5M821.1 691.2L836.7 676.2M736.1 802.9L743.8 816.1M998.8 598.8L989.7 621.1M946.9 681.3L962.7 667.6M905.2 695.7L895.1 725.2M973.1 477.3L987.5 462.5M859.1 797.0L850.4 822.2M827.6 745.8L846.9 727.3M889.4 591.4L897.0 603.6M801.7 746.0L819.2 732.5M1015.0 582.8L1005.8 609.2M768.1 635.2L759.5 663.3M929.4 736.2L945.9 719.7M747.8 693.7L755.0 706.6M884.6 754.4L878.0 779.4M809.5 802.0L826.0 782.8M953.0 536.9L971.6 515.2M870.8 646.7L878.3 662.2M783.8 801.7L799.9 787.4M832.0 579.1L848.4 566.6M995.8 638.6L988.7 665.4M866.3 549.5L871.0 566.3M759.5 663.3L747.8 693.7M937.7 590.0L956.1 570.3M852.6 706.5L858.7 715.6M765.8 856.1L783.1 841.2M881.5 535.0L891.3 544.7M945.2 642.0L961.8 626.7M980.0 692.4L970.5 719.1M773.9 651.3L763.0 680.6M946.0 480.4L979.4 451.4M746.6 914.1L764.0 898.8M864.9 591.9L871.0 606.3M1004.6 649.3L996.3 680.8M755.0 706.6L747.9 732.9M787.3 759.0L801.7 746.0M847.7 645.6L855.4 663.3M997.7 435.3L1004.6 450.5M868.8 811.8L902.6 779.0M891.3 544.7L881.0 577.8M871.0 606.3L880.5 620.1M828.9 701.6L834.2 716.7M750.7 650.8L739.0 678.8M979.8 488.8L988.9 501.8M1013.1 543.6L1015.0 582.8M939.8 547.3L953.0 536.9M855.4 663.3L863.4 672.1M807.2 763.6L821.4 769.2M815.3 596.3L832.0 579.1M977.2 654.1L968.1 681.5M1004.6 450.5L1013.2 462.5M961.0 547.9L970.2 561.0M827.6 745.8L834.9 758.5M834.2 716.7L846.9 727.3M798.6 870.1L868.8 811.8M791.2 815.9L800.8 825.8M800.2 648.1L813.2 636.9M963.0 710.0L953.0 737.6M747.8 693.7L738.3 720.5M738.3 720.5L736.2 763.6M988.9 501.8L993.6 519.6M944.8 602.7L956.9 614.8M809.5 802.0L816.9 814.6M821.4 769.2L826.0 782.8M775.6 869.0L781.4 881.7M866.3 549.5L857.4 577.1M781.7 704.0L796.0 689.7M1003.3 490.7L1014.5 502.6M970.2 561.0L977.5 571.8M922.2 642.9L938.4 627.3M929.1 655.9L939.0 664.4M834.9 758.5L842.2 769.8M932.5 490.9L946.0 480.4M792.4 853.4L798.6 870.1M800.8 825.8L809.2 838.7M847.4 605.6L839.2 634.7M987.3 543.2L997.4 555.7M945.2 642.0L953.0 654.5M956.9 614.8L961.8 626.7M905.2 695.7L920.1 683.0M816.9 814.6L824.6 830.2M913.5 548.9L930.7 534.8M864.9 591.9L855.6 620.7M871.0 566.3L864.9 591.9M830.2 662.2L821.1 691.2M971.9 600.1L977.2 614.4M929.0 696.1L934.5 710.7M939.0 664.4L946.9 681.3M884.6 754.4L901.0 738.8M979.4 451.4L973.1 477.3M767.0 816.5L783.8 801.7M847.7 645.6L836.7 676.2M810.7 719.9L801.7 746.0M757.4 805.4L775.6 788.5M919.9 603.8L937.7 590.0M953.0 654.5L962.7 667.6M759.5 663.3L773.9 651.3M918.8 721.6L929.4 736.2M997.7 435.3L987.5 462.5M739.0 678.8L738.3 720.5M868.8 811.8L887.2 791.8M910.5 752.2L918.9 767.3M961.8 506.8L953.0 536.9M746.5 873.5L765.8 856.1M871.0 606.3L863.0 634.8M828.9 701.6L819.2 732.5M792.7 773.7L783.8 801.7M881.5 535.0L932.5 490.9M740.2 860.3L757.0 841.6M903.4 657.8L922.2 642.9M934.5 710.7L945.9 719.7M932.5 490.9L1014.0 420.8M979.8 488.8L971.6 515.2M1013.2 462.5L1014.5 502.6M946.5 561.6L937.7 590.0M730.6 928.6L746.6 914.1M931.4 614.0L938.4 627.3M898.7 645.7L912.6 630.8M855.4 663.3L845.4 688.2M807.2 763.6L799.9 787.4M774.7 827.2L765.8 856.1M886.4 713.2L905.2 695.7M1004.6 450.5L996.9 477.5M961.0 547.9L956.1 570.3M876.4 700.9L895.1 682.3M912.3 668.2L920.1 683.0M834.2 716.7L827.6 745.8M762.7 760.1L779.6 744.3M791.2 815.9L783.1 841.2M732.5 848.6L730.6 928.6M821.2 608.6L830.1 621.2M987.8 706.4L1004.6 691.5M869.3 765.9L884.6 754.4M736.2 763.6L754.9 742.9M1014.5 502.6L1013.1 543.6M988.9 501.8L979.2 531.3M944.8 602.7L938.4 627.3M858.5 757.8L876.4 738.5M821.4 769.2L809.5 802.0M743.8 816.1L757.4 805.4M775.6 869.0L764.0 898.8M805.1 663.2L812.0 678.5M850.4 822.2L868.8 811.8M970.2 561.0L963.5 584.9M897.0 603.6L913.7 588.0M929.1 655.9L920.1 683.0M855.6 620.7L847.7 645.6M911.7 711.3L918.8 721.6M843.2 809.5L859.1 797.0M800.8 825.8L792.4 853.4M998.8 598.8L1015.0 582.8M956.9 614.8L945.2 642.0M878.3 662.2L898.7 645.7M783.1 623.1L790.3 637.1M836.7 676.2L828.9 701.6M891.0 768.4L902.6 779.0M988.7 665.4L1004.6 649.3M738.3 720.5L755.0 706.6M987.5 462.5L979.8 488.8M798.0 611.3L809.2 618.9M939.0 664.4L929.0 696.1M858.7 715.6L876.4 700.9M763.0 680.6L772.2 690.6M1015.0 582.8L1011.9 664.2M970.5 719.1L987.8 706.4M971.6 515.2L961.0 547.9M780.9 667.1L789.0 678.2M918.8 721.6L910.5 752.2M747.9 732.9L754.9 742.9M956.1 570.3L944.8 602.7M809.2 618.9L813.2 636.9M763.1 723.1L770.3 734.9M931.4 614.0L922.2 642.9M739.0 678.8L732.5 848.6M912.1 511.0L923.8 519.1M871.0 566.3L891.3 544.7M755.0 885.2L746.6 914.1M789.0 678.2L796.0 689.7M745.2 774.9L752.8 787.5M912.3 668.2L905.2 695.7M979.4 451.4L1014.0 420.8M896.3 563.2L905.5 574.3M739.0 678.8L759.5 663.3M770.3 734.9L779.6 744.3M895.1 725.2L884.6 754.4M923.8 519.1L930.7 534.8M880.5 620.1L887.9 634.0M743.8 816.1L750.4 830.7M752.8 787.5L757.4 805.4M911.7 711.3L901.0 738.8M905.5 574.3L913.7 588.0M768.5 773.7L775.6 788.5M730.6 928.6L798.6 870.1M732.5 848.6L740.2 860.3M918.9 767.3L953.0 737.6M783.1 623.1L773.9 651.3M891.0 768.4L887.2 791.8M887.9 634.0L898.7 645.7M750.4 830.7L757.0 841.6M963.0 710.0L980.0 692.4M763.0 680.6L755.0 706.6M842.2 769.8L858.5 757.8M904.4 620.0L912.6 630.8M858.7 715.6L868.8 729.7M871.3 686.0L876.4 700.9M997.4 555.7L1013.1 543.6M898.9 520.9L906.6 534.1M732.0 884.5L740.3 898.2M747.9 732.9L736.2 763.6M824.6 830.2L843.2 809.5M855.6 620.7L871.0 606.3M887.8 675.2L895.1 682.3M853.2 740.0L858.5 757.8M800.8 825.8L816.9 814.6M977.2 614.4L998.8 598.8M881.0 577.8L889.4 591.4M1011.9 664.2L1004.6 691.5M763.1 723.1L754.9 742.9M1006.3 529.9L1013.1 543.6M783.1 623.1L832.0 579.1M836.7 676.2L855.4 663.3M868.8 729.7L876.4 738.5M781.4 881.7L798.6 870.1M962.7 667.6L977.2 654.1M863.0 634.8L870.8 646.7M789.0 678.2L781.7 704.0M987.5 462.5L1004.6 450.5M878.0 779.4L868.8 811.8M745.2 774.9L736.1 802.9M939.0 664.4L953.0 654.5M819.2 732.5L834.2 716.7M850.6 782.6L859.1 797.0M945.9 719.7L963.0 710.0M845.4 688.2L852.6 706.5M770.3 734.9L762.7 760.1M971.6 515.2L988.9 501.8M1004.6 571.4L1015.0 582.8M918.8 721.6L934.5 710.7M799.9 787.4L821.4 769.2M996.9 477.5L1003.3 490.7M923.8 519.1L913.5 548.9M848.4 566.6L866.3 549.5M880.5 620.1L870.8 646.7M1011.4 627.5L1004.6 649.3M863.4 672.1L871.3 686.0M792.7 773.7L807.2 763.6M752.8 787.5L743.8 816.1M956.1 570.3L970.2 561.0M989.7 621.1L995.8 638.6M783.1 841.2L800.8 825.8M979.2 531.3L987.3 543.2M905.5 574.3L897.0 603.6M830.1 621.2L847.4 605.6M996.3 680.8L987.8 706.4M790.3 637.1L780.9 667.1M846.9 727.3L853.2 740.0M774.7 827.2L791.2 815.9M938.4 627.3L956.9 614.8M993.6 519.6L1006.3 529.9M764.0 898.8L781.4 881.7M963.5 584.9L971.9 600.1M887.9 634.0L878.3 662.2M812.0 678.5L830.2 662.2M772.2 690.6L763.1 723.1M826.0 782.8L837.7 793.5M920.1 683.0L939.0 664.4M837.7 793.5L843.2 809.5M736.2 763.6L736.1 802.9M977.5 571.8L985.3 588.4M871.3 686.0L858.7 715.6M754.9 742.9L745.2 774.9M809.2 838.7L814.5 854.6M898.9 520.9L891.3 544.7M901.0 738.8L918.8 721.6M906.6 534.1L896.3 563.2M961.8 626.7L971.7 640.1M853.2 740.0L842.2 769.8M881.0 577.8L871.0 606.3M1006.3 529.9L997.4 555.7M736.1 802.9L732.5 848.6M985.3 588.4L998.8 598.8M889.4 591.4L880.5 620.1M946.9 681.3L953.7 694.4M768.1 635.2L881.5 535.0M863.0 634.8L855.4 663.3M902.6 779.0L918.9 767.3M1015.0 582.8L1011.4 627.5M870.8 646.7L863.4 672.1M929.4 736.2L934.1 753.3M1014.0 420.8L1004.6 450.5M813.2 636.9L830.1 621.2M845.4 688.2L834.2 716.7M832.0 579.1L837.9 596.8M852.6 706.5L846.9 727.3M996.9 477.5L988.9 501.8M881.5 535.0L871.0 566.3M796.0 689.7L812.0 678.5M1011.4 627.5L1011.9 664.2M946.0 480.4L962.5 467.9M979.2 531.3L970.2 561.0M779.6 744.3L793.7 733.9M837.9 596.8L847.4 605.6M962.5 467.9L979.4 451.4M930.7 534.8L945.2 522.3M963.5 584.9L956.9 614.8M793.7 733.9L810.7 719.9M822.8 646.0L830.2 662.2M837.7 793.5L824.6 830.2M945.2 522.3L961.8 506.8M913.7 588.0L927.7 578.4M775.6 788.5L792.7 773.7M809.2 838.7L798.6 870.1M971.7 640.1L977.2 654.1M773.9 651.3L790.3 637.1M805.5 703.9L810.7 719.9M887.2 791.8L902.6 779.0M927.7 578.4L946.5 561.6M954.2 496.6L961.8 506.8M757.0 841.6L774.7 827.2M790.3 637.1L809.2 618.9M953.7 694.4L963.0 710.0M755.0 706.6L772.2 690.6M912.6 630.8L931.4 614.0M953.0 737.6L1004.6 691.5M946.9 681.3L934.5 710.7M815.3 596.3L821.2 608.6M827.6 745.8L821.4 769.2M740.3 898.2L755.0 885.2M772.2 690.6L789.0 678.2M895.1 682.3L912.3 668.2M929.4 736.2L918.9 767.3M800.2 648.1L805.1 663.2M814.5 854.6L868.8 811.8M809.5 802.0L800.8 825.8M891.3 544.7L906.6 534.1M868.8 811.8L953.0 737.6M754.9 742.9L770.3 734.9M783.8 801.7L791.2 815.9M1003.3 490.7L993.6 519.6M813.2 636.9L822.8 646.0M876.4 738.5L895.1 725.2M781.7 704.0L788.0 721.3M834.9 758.5L826.0 782.8M906.6 534.1L923.8 519.1M792.4 853.4L781.4 881.7M736.1 802.9L752.8 787.5M932.5 490.9L938.6 505.6M765.8 856.1L775.6 869.0M987.3 543.2L977.5 571.8M945.2 642.0L939.0 664.4M796.0 689.7L805.5 703.9M859.1 797.0L878.0 779.4M816.9 814.6L809.2 838.7M889.4 591.4L905.5 574.3M946.0 480.4L954.2 496.6M913.5 548.9L922.5 563.8M971.9 600.1L961.8 626.7M768.1 635.2L783.1 623.1M929.0 696.1L918.8 721.6M878.0 779.4L891.0 768.4M779.6 744.3L787.3 759.0M870.8 646.7L887.9 634.0M787.3 759.0L792.7 773.7M930.7 534.8L939.8 547.3M995.8 638.6L1011.4 627.5M953.0 654.5L946.9 681.3M910.5 752.2L902.6 779.0M757.4 805.4L767.0 816.5M852.6 706.5L871.3 686.0M913.7 588.0L919.9 603.8M971.7 640.1L962.7 667.6M980.0 692.4L996.3 680.8M934.5 710.7L929.4 736.2M805.5 703.9L793.7 733.9M740.2 860.3L746.5 873.5M939.8 547.3L946.5 561.6M996.3 680.8L1011.9 664.2M898.7 645.7L903.4 657.8M953.7 694.4L945.9 719.7M746.6 914.1L798.6 870.1M815.3 596.3L809.2 618.9M821.2 608.6L813.2 636.9M876.4 700.9L886.4 713.2M762.7 760.1L768.5 773.7M800.2 648.1L789.0 678.2M837.7 793.5L850.6 782.6M871.0 606.3L889.4 591.4M805.1 663.2L796.0 689.7M858.5 757.8L869.3 765.9M788.0 721.3L793.7 733.9M750.7 650.8L768.1 635.2M781.7 704.0L770.3 734.9M938.6 505.6L945.2 522.3M897.0 603.6L904.4 620.0M855.4 663.3L870.8 646.7M843.2 809.5L850.4 822.2M932.5 490.9L923.8 519.1M977.2 654.1L995.8 638.6M998.8 598.8L1005.8 609.2M922.5 563.8L927.7 578.4M878.3 662.2L887.8 675.2M834.2 716.7L852.6 706.5M913.5 548.9L905.5 574.3M798.0 611.3L790.3 637.1M747.8 693.7L763.0 680.6M988.9 501.8L1003.3 490.7M787.3 759.0L775.6 788.5M821.4 769.2L834.9 758.5M767.0 816.5L774.7 827.2M866.3 549.5L881.5 535.0" fill="none" stroke="#000" stroke-width="0.85"/>
<path clip-path="url(#ct)" d="M881.5 544.7L869.8 542.3M687.0 446.6L675.6 441.2M757.6 394.7L781.4 381.9M361.5 475.3L347.2 487.4M715.4 469.0L699.1 467.1M557.2 690.1L583.5 690.7M418.2 366.5L401.5 380.1M780.8 338.8L768.5 353.9M836.8 502.0L843.5 503.9M543.3 299.0L570.9 300.0M697.9 312.4L726.2 313.3M376.6 461.1L361.5 475.3M881.7 476.5L884.4 470.4M529.7 420.6L544.4 434.1M389.3 474.9L375.3 487.8M444.3 582.0L473.1 582.7M802.6 485.3L800.3 483.0M717.5 462.7L699.1 467.1M819.3 567.5L834.8 570.5M726.2 313.3L752.6 313.2M402.8 461.0L389.3 474.9M1018.8 622.5L1032.7 636.5M878.8 325.7L905.9 325.8M708.4 517.9L714.0 510.5M820.6 494.8L827.1 491.5M749.9 499.3L737.1 498.0M648.9 510.6L625.2 500.3M780.5 485.9L777.7 489.7M415.7 609.4L444.2 610.4M767.9 649.5L753.0 663.0M528.7 691.1L948.3 690.4M817.0 487.8L813.0 489.7M905.9 325.8L934.7 326.5M317.8 353.6L347.2 353.2M459.8 649.7L473.6 662.9M446.7 501.4L459.2 515.0M697.7 608.9L713.7 597.0M704.0 526.4L695.3 531.7M779.6 470.1L783.4 467.0M947.8 662.5L935.4 676.6M697.8 636.1L710.7 649.6M714.0 510.5L707.3 506.2M710.8 622.9L739.3 623.1M870.3 454.7L881.8 460.8M834.0 493.9L838.6 491.4M836.8 502.0L837.6 498.2M1032.1 582.6L1032.7 609.2M347.2 353.2L375.8 353.8M797.0 431.9L785.6 427.1M783.4 467.0L780.8 463.5M459.1 542.3L445.7 555.5M642.2 663.4L653.5 676.5M774.8 455.4L779.6 451.9M652.6 519.9L666.8 530.3M675.6 441.2L677.3 431.3M892.9 636.2L921.3 636.9M814.0 478.0L821.4 476.4M304.2 501.2L305.5 528.1M736.2 471.8L729.1 474.7M402.7 570.2L389.0 582.7M529.1 366.8L556.5 366.3M826.7 528.1L830.4 533.7M823.9 677.4L837.8 690.2M861.5 415.6L847.0 406.2M787.9 494.9L786.4 498.6M784.3 504.3L778.3 504.4M921.3 636.9L947.5 636.2M814.9 446.2L804.2 446.8M333.6 663.2L361.4 663.4M869.4 482.4L872.0 477.3M765.1 463.6L757.3 464.4M332.8 393.3L359.7 393.3M1005.2 582.5L991.0 596.3M800.2 577.3L805.0 589.7M924.9 449.3L941.6 456.5M771.3 480.3L767.7 477.9M845.3 517.1L856.7 517.3M823.5 467.1L829.6 468.9M361.4 663.4L388.9 663.0M842.2 414.8L847.0 406.2M759.9 542.6L769.9 549.7M705.9 473.2L698.9 477.6M967.4 479.0L966.0 462.5M1032.1 582.6L1020.7 596.3M688.8 524.0L680.6 536.4M417.5 420.6L445.3 419.8M633.7 491.4L625.2 500.3M814.9 446.2L806.8 442.3M543.4 676.5L569.7 676.2M935.7 595.6L949.2 608.9M445.3 419.8L472.4 420.4M678.4 483.3L665.8 485.9M376.6 461.1L402.8 461.0M610.6 521.6L621.0 536.4M780.6 492.1L782.8 495.7M734.0 493.8L727.5 499.5M458.5 326.7L474.4 339.8M823.4 498.1L824.9 501.8M921.0 367.0L935.4 381.4M725.7 690.1L754.3 689.9M831.7 513.9L836.1 518.5M402.8 461.0L431.5 461.1M782.7 546.2L769.9 549.7M1005.0 610.2L1018.8 622.5M727.5 499.5L719.0 498.2M737.1 498.0L736.8 502.7M614.0 608.8L626.3 622.5M641.7 339.4L655.0 352.9M612.8 393.8L632.2 407.6M650.1 554.1L672.5 567.2M784.7 477.4L779.0 480.6M446.7 501.4L475.6 501.9M597.9 380.1L612.8 393.8M571.9 461.3L557.6 473.8M684.9 461.5L691.4 471.9M727.5 516.2L726.8 523.8M741.9 494.5L734.0 493.8M891.4 530.0L896.3 538.5M794.9 481.9L798.2 479.9M675.0 506.2L685.2 501.2M812.1 512.4L823.4 515.8M1032.7 609.2L1018.8 622.5M836.7 558.7L819.3 567.5M1018.5 462.2L1033.8 474.5M459.1 542.3L485.4 542.0M319.4 514.8L305.5 528.1M841.6 522.4L838.0 527.9M842.2 476.1L836.7 469.7M762.6 518.2L755.7 524.9M819.0 531.2L830.4 533.7M826.2 439.9L819.6 434.1M767.7 477.9L761.4 476.4M944.3 473.4L966.0 462.5M693.9 453.9L684.9 461.5M851.8 422.5L842.2 414.8M909.9 508.6L909.3 518.8M782.8 495.7L786.4 498.6M818.9 484.8L811.4 486.1M827.1 491.5L833.6 489.8M472.7 636.5L459.8 649.7M844.6 489.3L851.2 487.7M345.9 514.9L334.1 528.4M513.7 353.3L542.0 352.8M331.5 582.9L361.5 581.8M859.3 506.4L850.9 507.9M797.9 490.8L804.7 490.6M772.8 475.6L766.6 474.6M655.1 648.7L669.2 662.7M851.5 558.1L851.0 567.4M711.2 540.4L717.5 552.2M762.0 469.0L755.0 469.1M753.9 506.2L747.3 508.6M765.1 463.6L772.8 463.6M1003.7 555.8L966.7 545.8M570.8 568.2L557.9 582.4M709.1 479.0L705.9 473.2M698.4 366.3L724.8 367.2M836.2 662.4L850.2 676.7M688.8 524.0L666.8 530.3M695.3 531.7L680.6 536.4M1003.7 555.8L1019.4 568.5M755.7 524.9L746.7 521.1M347.1 542.4L360.5 554.4M704.9 485.1L719.2 487.8M794.8 459.8L801.9 458.9M500.2 393.7L528.7 393.2M1018.3 676.4L1031.4 690.3M699.8 548.1L701.9 558.2M895.0 548.1L912.7 546.1M798.8 497.8L798.8 501.6M622.0 459.6L610.6 470.4M846.7 484.5L837.8 487.4M815.2 464.7L815.3 458.3M860.2 500.2L870.9 500.2M836.7 469.7L840.1 465.2M921.4 534.7L947.6 534.7M679.2 470.2L691.4 471.9M794.8 538.8L801.0 535.0M528.7 393.2L557.3 393.6M736.4 522.0L733.6 528.0M748.3 416.8L733.5 415.0M620.3 446.3L598.9 459.8M716.9 493.3L719.0 498.2M867.4 508.5L859.5 511.7M877.1 521.9L879.8 528.0M1004.7 419.7L1033.3 421.4M304.0 582.0L305.1 663.0M762.6 518.2L754.0 518.0M805.2 520.6L805.2 528.4M444.9 312.8L432.8 326.4M844.2 436.3L842.4 428.2M961.6 503.6L964.7 491.2M797.9 506.1L804.5 505.7M808.4 456.1L799.0 454.9M793.5 516.1L801.0 516.7M736.8 425.5L729.2 431.1M360.8 609.6L346.2 622.8M747.3 531.8L743.7 526.7M472.8 311.9L458.5 326.7M626.7 326.0L614.7 339.9M583.5 690.7L639.2 690.5M818.9 484.8L825.6 486.7M389.5 609.4L374.5 622.8M472.4 420.4L458.8 432.8M804.8 502.6L811.9 504.6M851.1 449.3L858.0 443.7M856.7 517.3L853.0 522.0M319.4 514.8L345.9 514.9M789.3 489.3L783.2 488.8M655.2 326.4L641.7 339.4M846.7 484.5L844.6 489.3M809.5 340.1L794.6 353.2M472.4 366.2L487.2 380.1M543.1 407.1L529.7 420.6M374.8 379.8L359.7 393.3M756.9 492.3L751.5 490.8M800.3 483.0L806.4 482.4M501.0 420.4L487.8 434.5M431.5 461.1L445.1 474.3M678.7 419.0L695.3 413.4M458.6 622.3L446.2 636.5M304.6 555.5L333.3 555.0M786.7 486.2L780.5 485.9M836.6 339.2L822.0 353.4M599.8 299.4L627.0 299.4M775.7 472.6L779.6 470.1M748.7 480.8L738.8 477.3M458.9 461.6L472.9 474.5M486.9 622.1L472.7 636.5M830.1 485.1L833.6 489.8M445.1 474.3L429.7 488.1M641.5 635.8L626.8 649.8M333.3 555.0L360.5 554.4M742.1 468.5L736.2 471.8M500.3 581.8L529.9 581.9M797.9 506.1L804.8 502.6M779.8 312.1L808.0 312.7M905.0 448.5L924.9 449.3M769.6 505.5L770.8 509.9M786.0 492.3L782.8 495.7M942.3 446.9L971.4 448.5M669.7 636.4L655.1 648.7M803.7 479.9L804.1 476.2M822.5 648.8L809.3 662.4M529.9 581.9L557.9 582.4M766.7 572.6L757.3 587.1M472.8 609.3L500.1 609.0M460.3 298.9L793.6 298.8M934.9 437.2L942.3 446.9M961.2 326.7L990.1 325.9M513.8 542.4L529.3 554.9M724.8 367.2L753.9 367.7M849.5 650.0L836.2 662.4M888.1 486.6L898.2 484.7M881.7 476.5L893.6 474.1M1003.9 663.7L990.7 677.6M500.1 609.0L528.0 609.7M804.8 569.0L820.4 578.8M1004.7 419.7L970.1 436.2M773.7 492.5L768.2 493.6M792.4 470.8L798.2 470.1M896.7 523.3L877.1 521.9M458.6 569.0L473.1 582.7M542.3 650.1L556.7 663.0M541.4 541.4L557.0 555.4M864.9 366.7L836.8 372.5M1034.0 663.0L1018.3 676.4M795.0 622.3L822.2 622.5M430.1 299.2L417.5 312.2M775.7 472.6L769.8 470.4M831.0 499.1L824.9 501.8M803.9 469.6L798.2 470.1M319.5 595.5L334.3 608.8M840.4 536.3L851.6 532.9M738.5 649.4L767.9 649.5M976.4 636.7L1004.7 636.4M613.2 312.9L599.1 325.9M915.1 440.8L905.1 429.7M304.5 312.8L319.7 326.9M417.2 662.9L445.3 663.6M640.7 312.6L626.7 326.0M734.0 493.8L731.0 489.0M779.6 451.9L785.7 447.7M824.5 473.3L829.6 468.9M347.3 595.9L334.3 608.8M869.4 482.4L876.4 488.2M333.5 313.0L346.3 326.3M766.7 572.6L782.3 580.9M703.8 402.2L721.8 404.9M599.0 677.3L627.8 676.9M822.1 325.4L809.5 340.1M821.3 403.8L847.0 406.2M991.0 596.3L1005.0 610.2M542.1 380.0L528.7 393.2M736.8 502.7L746.8 504.0M792.4 492.5L787.9 494.9M716.4 526.4L704.0 526.4M514.0 326.5L528.8 340.7M724.4 561.7L728.2 571.5M977.8 367.0L991.2 379.7M780.5 689.8L806.9 689.7M875.8 505.6L867.4 508.5M1005.9 339.9L990.9 352.9M641.5 366.6L626.3 380.3M360.4 420.6L375.2 435.2M796.3 445.0L798.6 439.4M766.5 299.4L793.6 298.8M756.5 513.3L747.3 508.6M831.2 473.4L842.2 476.1M320.3 434.1L305.8 447.9M319.0 623.2L334.2 635.6M791.6 485.9L786.7 486.2M668.1 609.0L681.7 622.0M698.4 339.5L710.1 353.3M430.6 406.6L445.3 419.8M882.8 443.8L900.0 440.0M460.3 298.9L515.1 300.1M1032.9 339.7L1019.6 353.0M668.1 367.2L656.5 380.5M777.7 489.7L780.6 492.1M1019.1 434.0L1001.1 445.2M810.5 431.1L816.9 421.2M671.0 477.0L678.4 483.3M347.3 434.5L331.7 447.8M346.2 622.8L360.1 636.0M948.1 312.3L976.2 312.9M304.3 474.1L318.1 488.8M501.6 635.7L513.7 648.7M726.8 523.8L719.3 519.5M740.5 542.2L756.3 549.0M811.1 471.4L803.9 469.6M769.4 531.6L761.1 536.3M778.1 432.5L768.6 435.9M976.2 312.9L1005.5 313.1M677.3 453.0L675.6 441.2M332.8 474.6L347.2 487.4M389.4 340.0L417.2 339.9M736.9 508.1L737.3 515.1M374.3 515.4L361.8 528.1M529.3 636.5L542.3 650.1M779.9 530.6L790.0 529.3M556.8 447.1L596.7 442.4M765.2 527.2L755.7 524.9M818.3 491.7L817.0 487.8M840.1 465.2L847.7 463.2M417.2 339.9L445.8 339.6M571.7 353.0L598.9 353.6M403.0 515.7L387.9 527.9M710.7 649.6L725.1 662.9M834.0 493.9L831.0 499.1M836.1 518.5L831.7 522.9M798.5 466.4L798.2 470.1M865.5 405.4L849.8 395.3M830.4 533.7L840.4 536.3M845.9 549.7L859.3 546.6M912.7 546.1L927.0 554.2M598.9 353.6L627.7 353.1M811.4 486.1L814.6 483.3M893.3 662.8L907.2 677.4M772.8 463.6L768.7 459.5M947.6 534.7L976.6 533.8M784.0 510.4L789.7 511.9M856.7 517.3L864.2 522.1M661.9 543.6L677.1 554.1M824.8 428.4L833.9 421.4M784.4 560.8L801.0 559.6M894.5 366.6L921.0 367.0M921.2 662.8L935.4 676.6M897.0 506.7L909.9 508.6M320.3 299.0L333.5 313.0M877.1 521.9L867.9 528.0M990.6 406.7L1019.1 407.3M976.6 581.3L953.3 560.0M1033.6 501.4L1032.3 527.9M961.6 503.6L939.6 501.4M722.9 451.9L706.8 451.3M585.8 393.7L612.8 393.8M516.2 595.8L500.1 609.0M884.7 510.5L895.8 512.8M501.7 312.7L514.0 326.5M612.8 663.9L642.2 663.4M861.5 415.6L865.5 405.4M837.7 442.3L844.2 436.3M646.2 469.7L654.3 477.8M543.1 595.8L528.0 609.7M320.3 434.1L347.3 434.5M922.6 524.0L921.4 534.7M851.9 502.5L860.2 500.2M528.6 312.8L544.1 326.1M892.0 459.1L894.4 451.9M683.9 326.7L698.4 339.5M761.1 536.3L769.7 539.8M654.3 477.8L649.5 486.4M821.3 403.8L809.6 394.2M796.6 676.3L823.9 677.4M821.4 476.4L826.3 480.2M304.3 474.1L332.8 474.6M832.2 453.0L839.7 449.4M709.7 326.5L725.5 340.0M736.4 522.0L743.7 526.7M866.2 339.9L879.1 352.4M571.9 461.3L596.7 442.4M430.5 380.5L444.6 393.7M978.5 689.9L1005.5 689.4M627.0 299.4L683.0 298.9M702.0 459.5L693.9 453.9M529.7 420.6L515.6 434.6M733.6 528.0L716.4 526.4M444.2 610.4L430.2 623.3M991.2 379.7L976.4 393.8M733.8 397.7L757.6 394.7M374.3 515.4L403.0 515.7M947.6 534.7L966.7 545.8M870.0 444.9L881.4 455.0M893.8 340.4L906.5 353.3M529.1 366.8L542.1 380.0M788.0 460.4L790.0 456.7M801.0 516.7L808.3 515.5M557.0 420.7L544.4 434.1M486.4 460.6L501.2 474.7M515.0 622.8L501.6 635.7M988.7 458.3L966.0 462.5M650.1 554.1L622.4 557.8M501.2 474.7L513.3 487.9M360.5 554.4L388.3 554.6M528.7 691.1L921.4 690.4M347.7 298.8L430.1 299.2M556.5 366.3L571.0 380.2M708.8 498.1L700.8 491.4M446.7 501.4L431.6 515.3M515.6 461.4L528.6 474.2M845.3 517.1L836.1 518.5M726.8 523.8L733.6 528.0M697.8 636.1L682.7 650.3M714.0 510.5L703.4 511.9M570.8 514.6L557.4 528.2M850.5 541.4L862.3 535.7M879.6 648.8L893.3 662.8M808.3 515.5L805.2 520.6M748.8 471.3L746.1 475.2M941.6 456.5L966.0 462.5M639.6 451.5L637.6 440.3M817.5 508.8L809.7 508.3M725.7 608.9L713.7 597.0M626.6 595.6L656.4 596.2M709.6 533.1L695.3 531.7M772.4 496.3L775.0 500.4M723.8 637.0L710.7 649.6M810.3 534.1L801.0 535.0M585.7 583.1L613.6 582.6M814.8 494.5L818.3 491.7M736.2 471.8L726.1 470.4M733.6 465.2L717.5 462.7M304.0 582.0L305.6 636.4M836.6 543.5L850.5 541.4M794.6 449.9L804.2 446.8M845.9 549.7L836.7 558.7M430.2 623.3L458.6 622.3M666.8 530.3L647.4 535.7M569.7 542.6L584.8 555.8M787.9 494.9L782.8 495.7M907.7 649.9L893.3 662.8M691.8 438.3L677.3 431.3M898.2 484.7L910.4 485.1M738.8 477.3L742.8 483.0M556.8 609.5L584.5 609.0M762.0 469.0L765.1 463.6M699.0 501.8L694.6 496.5M838.0 527.9L830.4 533.7M829.7 464.3L823.2 457.9M306.2 366.8L304.4 393.7M744.8 432.3L756.6 433.8M515.1 568.2L529.9 581.9M613.1 635.8L641.5 635.8M774.0 487.2L766.9 487.1M346.7 676.8L333.7 689.7M1019.1 514.5L988.6 522.3M794.2 648.3L822.5 648.8M376.0 596.2L389.5 609.4M991.6 568.8L976.6 581.3M861.2 451.0L870.3 454.7M814.9 446.2L815.2 440.7M515.1 300.1L501.7 312.7M802.4 463.2L808.3 461.1M808.2 382.0L797.3 368.6M402.5 595.7L415.7 609.4M976.3 663.7L1003.9 663.7M767.4 411.0L748.6 406.0M678.5 491.7L689.4 491.3M697.9 312.4L683.9 326.7M798.6 525.6L805.2 528.4M768.3 498.3L772.4 496.3M782.7 546.2L792.4 550.3M638.6 480.2L612.6 482.8M778.4 517.1L778.2 521.1M863.7 473.4L856.5 471.6M773.6 526.1L768.5 521.9M614.0 608.8L597.8 622.7M970.1 436.2L942.6 427.1M705.9 473.2L691.4 471.9M737.1 498.0L727.5 499.5M501.2 474.7L528.6 474.2M304.2 501.2L304.0 582.0M860.5 479.4L851.1 477.4M528.7 691.1L639.2 690.5M878.8 325.7L866.2 339.9M717.5 462.7L714.2 456.7M811.1 471.4L812.8 468.0M597.9 380.1L585.8 393.7M819.7 600.5L847.7 600.1M375.2 435.2L389.4 447.5M704.0 526.4L688.8 524.0M639.6 609.4L626.3 622.5M677.1 554.1L672.5 567.2M991.6 568.8L953.3 560.0M739.3 623.1L764.3 604.7M714.2 456.7L722.9 451.9M317.8 353.6L306.2 366.8M761.8 504.1L755.9 501.9M334.3 608.8L346.2 622.8M417.5 420.6L432.0 433.9M626.3 380.3L612.8 393.8M823.7 299.2L851.3 300.0M910.4 485.1L926.9 485.3M765.2 527.2L758.3 530.6M874.8 471.6L875.3 465.4M712.8 437.8L696.7 430.3M823.4 498.1L815.5 500.6M710.8 622.9L697.8 636.1M693.9 453.9L687.0 446.6M543.3 299.0L627.0 299.4M445.3 419.8L458.8 432.8M852.7 491.5L844.6 489.3M826.7 528.1L838.0 527.9M403.6 623.2L416.7 637.0M780.6 492.1L777.8 497.7M797.3 494.2L793.2 497.2M640.3 582.0L648.8 567.5M892.9 636.2L879.6 648.8M648.9 510.6L663.7 512.2M401.5 487.0L417.8 501.5M802.6 485.3L806.4 482.4M689.4 491.3L694.6 496.5M1032.3 527.9L988.6 522.3M805.2 528.4L801.0 535.0M586.0 635.8L599.1 650.0M459.2 515.0L473.2 528.0M771.3 480.3L772.8 475.6M755.0 459.2L768.7 459.5M795.0 622.3L819.7 600.5M446.0 529.0L430.8 542.0M333.6 663.2L319.2 675.7M976.9 339.8L1005.9 339.9M305.7 420.3L305.8 447.9M784.7 477.4L793.3 477.3M347.1 542.4L333.3 555.0M474.4 339.8L501.8 339.8M599.7 407.3L615.6 421.6M785.1 470.9L792.4 470.8M445.7 555.5L431.1 568.6M939.3 415.8L960.1 421.4M781.8 457.3L780.8 463.5M418.2 366.5L445.0 366.6M836.7 469.7L845.6 468.9M797.0 431.9L810.5 431.1M830.1 485.1L839.5 483.6M655.0 352.9L684.4 353.6M810.5 636.3L838.1 635.5M621.0 536.4L634.2 545.6M873.3 534.6L879.8 528.0M909.9 508.6L923.9 513.4M962.2 380.7L991.2 379.7M880.7 493.9L888.1 486.6M743.7 526.7L733.6 528.0M829.7 464.3L821.1 462.3M727.5 499.5L736.8 502.7M950.3 366.7L977.8 367.0M656.1 462.7L660.1 448.7M989.8 649.2L1019.7 649.1M773.7 492.5L769.9 490.3M660.1 448.7L637.6 440.3M375.6 299.4L390.2 313.0M305.7 420.3L332.5 420.3M687.5 477.5L693.5 483.9M748.3 416.8L736.8 425.5M571.5 596.0L556.8 609.5M668.1 367.2L693.2 383.7M430.4 676.7L459.3 676.9M400.9 299.4L417.5 312.2M603.9 546.8L622.4 557.8M556.8 313.1L570.4 326.8M701.9 558.2L677.1 554.1M669.2 662.7L697.4 663.1M764.6 429.6L763.3 420.2M597.7 596.3L584.5 609.0M472.8 609.3L486.9 622.1M612.7 690.0L639.2 690.5M584.0 312.5L599.1 325.9M671.0 477.0L665.8 485.9M739.7 326.5L752.2 339.8M756.6 433.8L753.2 439.6M816.9 421.2L822.8 413.7M850.2 676.7L878.7 676.8M304.1 690.4L360.7 690.2M500.1 609.0L515.0 622.8M621.0 536.4L588.7 532.2M767.8 326.1L780.8 338.8M920.6 340.2L934.0 352.9M487.2 380.1L500.2 393.7M513.7 353.3L501.0 366.0M751.5 490.8L755.5 487.6M782.7 546.2L781.0 553.4M708.8 498.1L715.6 503.2M747.3 508.6L746.4 515.1M571.8 433.8L556.8 447.1M570.7 622.7L586.0 635.8M785.1 470.9L779.6 470.1M948.8 339.8L962.7 353.4M514.4 379.9L528.7 393.2M347.1 542.4L375.0 542.3M724.8 367.2L730.6 385.1M704.9 485.1L693.5 483.9M597.8 622.7L613.1 635.8M972.9 512.7L998.3 507.4M850.5 541.4L869.8 542.3M806.4 473.2L803.9 469.6M611.9 367.5L626.3 380.3M769.9 549.7L768.4 557.2M526.7 501.4L545.1 514.9M649.5 486.4L644.7 498.6M1018.5 462.2L988.7 458.3M883.1 401.3L868.5 393.0M762.6 518.2L756.5 513.3M781.3 636.5L794.2 648.3M915.1 440.8L934.9 437.2M870.4 570.0L879.4 581.2M783.0 419.0L774.6 424.3M541.4 541.4L529.3 554.9M725.1 662.9L740.4 677.2M542.3 650.1L528.9 663.6M777.8 497.7L775.0 500.4M304.6 555.5L318.1 568.8M610.6 521.6L588.7 532.2M961.7 649.1L976.3 663.7M719.3 519.5L714.0 510.5M831.0 499.1L836.8 502.0M808.3 515.5L817.9 519.3M782.3 580.9L757.3 587.1M724.8 367.2L753.1 381.7M333.3 555.0L348.0 568.8M864.2 522.1L867.9 528.0M1032.2 312.5L1032.9 339.7M401.9 676.8L418.2 691.0M789.7 511.9L797.9 512.7M417.5 394.2L444.6 393.7M753.9 506.2L762.4 509.5M941.6 456.5L942.3 446.9M725.2 544.3L711.2 540.4M304.0 582.0L319.5 595.5M774.8 455.4L776.4 460.0M894.5 366.6L883.8 381.5M570.9 300.0L584.0 312.5M860.2 500.2L865.6 496.6M501.0 420.4L529.7 420.6M598.5 568.5L613.6 582.6M375.2 407.5L404.2 406.7M851.0 567.4L870.4 570.0M703.8 402.2L693.2 383.7M752.6 313.2L767.8 326.1M950.5 512.9L961.6 503.6M305.6 636.4L305.1 663.0M458.9 461.6L486.4 460.6M755.7 524.9L754.0 518.0M459.4 596.4L472.8 609.3M736.8 502.7L736.9 508.1M304.6 555.5L304.0 582.0M800.2 577.3L782.3 580.9M767.7 483.6L763.8 481.0M934.9 437.2L942.6 427.1M961.6 503.6L972.9 512.7M934.7 326.5L948.8 339.8M713.7 393.1L693.2 383.7M765.1 463.6L755.0 459.2M786.0 492.3L787.9 494.9M501.4 501.2L526.7 501.4M668.1 609.0L654.9 622.8M806.4 436.6L798.6 439.4M375.8 353.8L388.7 367.0M526.7 501.4L557.1 502.3M346.2 622.8L334.2 635.6M905.5 477.6L893.6 474.1M513.8 542.4L541.4 541.4M872.2 513.8L856.7 517.3M794.8 459.8L799.0 454.9M500.2 393.7L487.6 406.6M851.1 449.3L861.2 451.0M697.7 608.9L681.7 622.0M798.6 439.4L788.8 441.3M486.1 300.1L515.1 300.1M768.7 459.5L776.4 460.0M800.3 483.0L803.7 479.9M348.2 460.7L361.5 475.3M402.1 352.9L418.2 366.5M824.9 501.8L822.8 505.3M332.8 474.6L318.1 488.8M935.4 381.4L948.4 393.5M908.8 299.7L963.3 299.0M873.3 534.6L862.3 535.7M541.4 541.4L569.7 542.6M458.8 432.8L472.3 447.3M389.0 582.7L417.4 582.5M634.2 545.6L622.4 557.8M636.5 429.2L637.6 440.3M917.6 479.4L904.3 470.2M668.3 312.8L697.9 312.4M819.0 531.2L810.3 534.1M873.3 534.6L896.3 538.5M895.8 512.8L887.5 517.4M900.7 491.0L888.1 486.6M417.4 582.5L444.3 582.0M678.4 483.3L689.4 491.3M883.1 401.3L903.1 393.0M800.2 577.3L804.8 569.0M814.8 451.9L824.1 450.7M757.3 587.1L737.8 596.1M851.8 326.0L878.8 325.7M875.8 505.6L872.2 513.8M815.2 464.7L808.3 461.1M402.3 542.2L417.3 555.4M824.5 473.3L818.9 469.7M738.5 649.4L725.1 662.9M822.7 544.0L817.2 551.0M389.5 609.4L415.7 609.4M1019.1 514.5L998.3 507.4M783.4 467.0L793.2 463.9M514.4 515.2L530.2 528.6M820.9 512.2L823.4 515.8M858.0 443.7L870.0 444.9M983.7 471.6L988.7 458.3M815.5 500.6L811.9 504.6M815.2 464.7L821.1 462.3M777.7 489.7L773.7 492.5M855.2 496.1L865.6 496.6M921.2 662.8L907.2 677.4M789.4 507.7L784.0 510.4M681.7 622.0L710.8 622.9M500.7 555.6L487.3 569.2M851.1 477.4L848.2 472.8M728.2 571.5L740.6 561.4M658.9 502.2L663.7 512.2M865.7 636.1L892.9 636.2M808.9 492.0L813.0 489.7M817.0 473.2L824.5 473.3M824.5 508.7L820.9 512.2M694.0 507.4L682.3 513.1M803.9 451.7L794.6 449.9M742.1 468.5L733.6 465.2M794.6 509.6L802.4 508.7M774.6 424.3L763.3 420.2M804.4 499.2L804.8 502.6M802.4 508.7L804.5 505.7M305.1 663.0L333.6 663.2M528.6 312.8L514.0 326.5M821.1 462.3L815.3 458.3M867.1 554.3L869.8 542.3M864.2 522.1L854.4 527.2M821.3 403.8L828.5 394.7M766.5 299.4L752.6 313.2M826.2 439.9L837.7 442.3M822.8 413.7L801.7 417.3M830.3 434.5L824.8 428.4M656.4 596.2L668.1 609.0M761.4 499.6L761.8 504.1M486.5 676.7L514.0 675.9M709.7 326.5L698.4 339.5M460.3 298.9L472.8 311.9M948.1 312.3L934.7 326.5M764.6 454.7L774.8 455.4M699.0 501.8L694.0 507.4M746.4 515.1L737.3 515.1M514.0 675.9L543.4 676.5M832.2 453.0L831.6 457.3M669.7 689.8L697.0 690.2M634.2 545.6L603.9 546.8M893.8 340.4L879.1 352.4M636.5 429.2L615.6 421.6M788.0 460.4L781.8 457.3M654.5 300.3L683.0 298.9M806.4 436.6L810.5 431.1M389.4 340.0L375.8 353.8M740.3 489.6L735.3 485.9M854.3 456.1L861.2 451.0M853.5 482.4L851.2 487.7M785.3 519.7L790.4 524.1M785.7 447.7L788.8 441.3M501.2 474.7L487.2 488.3M556.8 609.5L570.7 622.7M697.0 690.2L725.7 690.1M347.7 298.8L400.9 299.4M556.5 366.3L542.1 380.0M798.2 479.9L803.7 479.9M683.0 298.9L710.6 299.7M814.8 451.9L823.2 457.9M768.2 493.6L772.4 496.3M836.7 312.6L865.1 311.9M977.9 608.3L991.4 622.9M515.6 461.4L501.2 474.7M571.7 353.0L556.5 366.3M834.0 493.9L843.7 495.4M803.9 451.7L804.2 446.8M865.1 311.9L893.4 312.2M543.9 460.6L528.6 474.2M416.7 637.0L430.7 649.0M756.5 513.3L762.4 509.5M570.8 514.6L609.1 508.0M654.9 622.8L669.7 636.4M823.2 457.9L832.2 453.0M851.2 622.8L847.7 600.1M305.2 340.3L333.0 340.3M640.9 393.4L664.5 394.8M1033.6 501.4L1019.1 514.5M646.2 469.7L622.0 459.6M768.9 450.2L761.0 443.9M913.2 491.5L926.9 485.3M599.1 650.0L612.8 663.9M769.3 501.9L761.8 504.1M870.9 500.2L867.4 508.5M1032.7 609.2L1034.0 663.0M838.1 635.5L849.5 650.0M851.2 622.8L879.0 622.6M870.1 492.4L880.7 493.9M774.6 467.1L768.3 466.9M818.3 491.7L813.0 489.7M819.0 531.2L805.2 528.4M785.8 598.9L757.3 587.1M486.5 353.1L513.7 353.3M792.4 550.3L804.9 549.6M756.1 497.3L749.9 499.3M781.2 663.7L796.6 676.3M913.2 491.5L910.4 485.1M922.6 524.0L923.9 513.4M360.5 554.4L375.5 568.9M675.0 506.2L663.7 512.2M786.0 492.3L780.6 492.1M1019.7 649.1L1034.0 663.0M870.0 444.9L870.3 454.7M805.2 520.6L813.7 524.4M668.1 367.2L698.4 366.3M801.7 417.3L808.5 409.6M919.3 422.7L942.6 427.1M963.9 676.4L978.5 689.9M388.3 554.6L402.7 570.2M867.9 528.0L879.8 528.0M459.3 676.9L472.5 689.7M862.8 590.4L847.7 600.1M473.6 662.9L499.9 663.1M941.0 524.4L947.6 534.7M473.2 393.2L500.2 393.7M402.5 595.7L389.5 609.4M703.6 443.2L691.8 438.3M658.2 493.7L671.9 499.3M768.3 466.9L765.1 463.6M786.4 498.6L792.4 500.4M824.9 501.8L815.5 500.6M784.4 560.8L766.7 572.6M727.2 440.5L744.8 432.3M361.5 581.8L376.0 596.2M811.1 471.4L818.9 469.7M881.7 476.5L890.4 479.9M1033.8 474.5L1033.5 555.7M627.0 299.4L640.7 312.6M750.1 450.0L754.4 454.2M557.0 420.7L585.6 420.4M801.4 488.6L807.1 487.4M699.0 501.8L685.2 501.2M683.3 676.7L711.3 676.5M808.0 312.7L822.1 325.4M1033.5 555.7L1032.1 582.6M515.6 461.4L543.9 460.6M569.7 542.6L588.7 532.2M725.4 458.7L722.9 451.9M825.6 486.7L833.6 489.8M760.2 472.7L755.0 469.1M964.7 491.2L981.2 498.3M305.7 420.3L304.3 474.1M831.1 590.8L862.8 590.4M778.0 394.8L809.6 394.2M320.4 379.4L332.8 393.3M851.9 502.5L855.2 496.1M864.3 690.2L891.3 689.9M946.7 546.0L953.3 560.0M744.8 432.3L753.2 439.6M334.3 608.8L319.0 623.2M869.1 433.0L882.8 443.8M794.6 449.9L785.7 447.7M892.0 415.9L865.5 405.4M543.9 460.6L571.9 461.3M818.7 558.5L831.5 551.1M843.3 454.1L851.1 449.3M795.8 520.1L790.4 524.1M749.0 495.1L751.5 490.8M780.8 338.8L794.6 353.2M903.9 463.5L924.2 459.0M768.0 622.9L764.3 604.7M1033.3 421.4L1033.8 474.5M543.3 299.0L599.8 299.4M837.8 487.4L833.6 489.8M808.9 492.0L807.9 494.9M445.3 419.8L432.0 433.9M818.7 558.5L836.7 558.7M403.6 623.2L388.5 636.5M907.7 530.1L896.3 538.5M389.3 474.9L401.5 487.0M873.3 534.6L869.8 542.3M799.1 476.5L793.0 473.9M401.5 487.0L388.8 501.7M807.9 494.9L803.3 495.9M715.4 414.9L701.9 422.1M402.8 461.0L416.5 474.8M774.6 467.1L783.4 467.0M458.4 352.8L472.4 366.2M430.2 623.3L416.7 637.0M831.7 522.9L822.5 523.4M586.0 635.8L571.5 649.6M459.2 515.0L446.0 529.0M515.6 434.6L528.1 447.3M429.7 488.1L417.8 501.5M795.0 622.3L785.8 598.9M650.1 554.1L648.8 567.5M723.6 510.8L719.3 519.5M763.1 491.7L768.2 493.6M766.9 487.1L767.7 483.6M687.5 477.5L671.0 477.0M416.5 474.8L401.5 487.0M613.1 635.8L599.1 650.0M473.1 582.7L500.3 581.8M822.2 622.5L819.7 600.5M785.1 470.9L789.2 468.0M717.5 462.7L715.4 469.0M836.8 502.0L830.4 503.7M797.0 431.9L801.5 425.0M459.1 542.3L472.5 555.5M1033.8 474.5L1033.6 501.4M845.3 517.1L841.6 522.4M794.2 648.3L781.2 663.7M444.2 610.4L472.8 609.3M675.6 441.2L656.4 439.4M782.8 495.7L777.8 497.7M670.2 520.4L682.3 513.1M837.8 479.5L839.5 483.6M829.7 464.3L829.6 468.9M622.0 459.6L628.0 471.8M976.3 663.7L963.9 676.4M666.8 530.3L661.9 543.6M828.5 476.7L831.2 473.4M739.3 623.1L768.0 622.9M689.4 491.3L685.2 501.2M789.2 468.0L793.2 463.9M824.9 501.8L830.4 503.7M869.4 482.4L860.5 479.4M653.5 676.5L669.7 689.8M843.5 503.9L850.9 507.9M306.5 608.7L305.6 636.4M774.0 487.2L769.9 490.3M780.5 485.9L774.0 487.2M988.7 458.3L1001.1 445.2M400.9 299.4L390.2 313.0M831.6 457.3L839.4 459.8M947.5 636.2L976.4 636.7M854.3 456.1L856.0 461.4M584.0 312.5L570.4 326.8M872.2 513.8L887.5 517.4M823.7 299.2L808.0 312.7M500.1 609.0L486.9 622.1M389.3 474.9L416.5 474.8M828.5 476.7L832.4 481.7M388.9 663.0L417.2 662.9M767.8 326.1L752.2 339.8M764.3 604.7L757.3 587.1M833.9 421.4L822.8 413.7M867.4 508.5L872.2 513.8M528.0 609.7L515.0 622.8M741.9 494.5L751.5 490.8M782.7 546.2L796.5 544.6M459.2 515.0L487.5 515.4M948.8 339.8L934.0 352.9M936.9 464.8L944.3 473.4M514.4 379.9L500.2 393.7M710.6 299.7L739.5 299.3M851.1 354.5L864.9 366.7M822.8 505.3L817.5 508.8M786.9 474.0L793.0 473.9M597.8 622.7L586.0 635.8M445.7 555.5L472.5 555.5M866.9 468.4L856.5 471.6M976.9 339.8L962.7 353.4M611.9 367.5L597.9 380.1M768.5 353.9L797.3 368.6M739.5 299.3L766.5 299.4M801.5 425.0L816.9 421.2M893.6 474.1L891.9 465.8M1033.3 421.4L1019.1 434.0M893.4 312.2L920.5 312.7M840.3 507.9L838.5 512.4M867.9 528.0L862.3 535.7M817.5 508.8L820.9 512.2M843.3 454.1L854.3 456.1M781.3 636.5L767.9 649.5M472.5 555.5L500.7 555.6M826.2 439.9L830.3 434.5M920.5 312.7L948.1 312.3M333.0 340.3L361.7 340.1M472.7 636.5L487.8 648.8M345.9 514.9L361.8 528.1M793.2 497.2L792.4 500.4M810.5 636.3L794.2 648.3M334.1 528.4L318.4 542.1M961.7 649.1L947.8 662.5M948.4 582.3L976.6 581.3M851.5 558.1L867.1 554.3M711.2 540.4L721.8 536.8M779.6 451.9L787.5 452.5M614.0 608.8L639.6 609.4M707.3 506.2L699.0 501.8M695.3 413.4L670.7 407.7M361.7 340.1L389.4 340.0M333.3 555.0L318.1 568.8M989.8 649.2L976.3 663.7M837.7 442.3L830.3 434.5M401.9 676.8L387.6 689.9M639.6 609.4L668.1 609.0M907.5 622.8L935.2 622.8M898.2 484.7L905.5 477.6M633.1 526.2L610.6 521.6M766.6 474.6L767.7 477.9M777.9 476.8L775.7 472.6M817.0 487.8L818.9 484.8M1033.0 366.4L1032.6 392.1M542.0 352.8L571.7 353.0M856.0 461.4L864.4 458.8M430.4 676.7L418.2 691.0M779.6 470.1L769.8 470.4M935.2 622.8L962.6 622.3M346.1 649.5L375.8 649.6M591.6 481.5L612.6 482.8M860.2 500.2L855.2 496.1M598.5 568.5L585.7 583.1M693.9 453.9L703.6 443.2M781.7 501.1L775.0 500.4M851.0 567.4L834.8 570.5M609.1 508.0L610.6 521.6M375.8 649.6L403.5 649.9M921.0 367.0L883.8 381.5M948.4 582.3L953.3 560.0M831.6 509.8L824.5 508.7M870.9 500.2L865.6 496.6M762.0 469.0L760.2 472.7M714.2 456.7L706.8 451.3M459.4 596.4L444.2 610.4M881.5 544.7L885.2 557.2M867.1 554.3L870.4 570.0M861.5 415.6L892.0 415.9M808.3 461.1L808.4 456.1M820.6 494.8L828.0 495.2M844.2 436.3L859.1 437.5M818.9 469.7L829.6 468.9M556.7 663.0L585.6 662.9M808.4 456.1L803.9 451.7M557.3 393.6L585.8 393.7M486.7 594.9L472.8 609.3M851.1 477.4L856.5 471.6M851.1 354.5L836.8 372.5M771.3 480.3L763.8 481.0M472.8 311.9L488.4 326.6M766.6 474.6L760.2 472.7M740.4 677.2L766.9 676.1M389.5 609.4L403.6 623.2M649.5 486.4L658.2 493.7M766.9 487.1L761.1 486.6M693.2 383.7L664.5 394.8M798.6 439.4L788.7 435.8M655.2 326.4L669.3 340.1M646.2 469.7L638.6 480.2M672.5 567.2L671.7 580.4M774.8 455.4L768.9 450.2M374.8 379.8L390.2 394.6M921.4 690.4L948.3 690.4M845.1 499.2L855.2 496.1M402.1 352.9L388.7 367.0M923.9 513.4L939.6 501.4M501.0 420.4L515.6 434.6M706.8 451.3L693.9 453.9M908.8 299.7L934.7 299.7M704.9 485.1L700.8 491.4M799.0 473.5L793.0 473.9M458.8 432.8L445.6 447.9M678.7 419.0L670.7 407.7M304.1 690.4L418.2 691.0M746.3 487.0L755.5 487.6M375.2 407.5L360.4 420.6M786.7 486.2L788.6 483.0M790.0 529.3L798.6 525.6M836.6 339.2L851.1 354.5M962.2 380.7L948.4 393.5M854.4 527.2L862.3 535.7M487.8 434.5L472.3 447.3M346.3 326.3L373.9 325.7M486.9 622.1L501.6 635.7M872.2 513.8L877.1 521.9M445.1 474.3L459.0 487.9M788.7 435.8L788.8 441.3M778.2 521.1L768.5 521.9M804.1 476.2L808.3 478.0M824.5 473.3L821.4 476.4M757.3 481.0L748.7 480.8M528.8 340.7L556.8 339.3M472.9 474.5L487.2 488.3M829.7 464.3L831.6 457.3M892.0 459.1L908.9 455.3M715.4 414.9L717.2 425.9M487.2 488.3L475.6 501.9M514.4 515.2L500.9 528.1M669.7 636.4L682.7 650.3M874.8 471.6L881.7 476.5M727.5 499.5L715.6 503.2M711.2 540.4L696.5 540.4M814.9 446.2L826.2 439.9M756.9 492.3L756.1 497.3M828.0 495.2L823.4 498.1M556.8 339.3L584.4 339.7M914.0 411.2L939.3 415.8M710.1 353.3L739.6 353.5M849.5 650.0L864.3 663.4M1033.8 474.5L1034.0 663.0M545.1 514.9L530.2 528.6M699.8 548.1L679.7 545.2M801.0 516.7L804.7 512.1M793.2 463.9L780.8 463.5M780.6 492.1L773.7 492.5M763.2 495.7L768.2 493.6M948.4 582.3L919.4 564.9M818.9 484.8L823.8 483.2M739.6 353.5L768.5 353.9M790.8 412.4L794.6 400.9M1004.8 366.8L1033.0 366.4M721.8 536.8L709.6 533.1M794.6 509.6L797.9 512.7M775.7 472.6L772.8 475.6M818.9 469.7L812.8 468.0M831.0 499.1L837.6 498.2M756.9 492.3L763.2 495.7M840.4 536.3L850.5 541.4M319.2 675.7L333.7 689.7M841.6 522.4L853.0 522.0M696.6 518.3L682.3 513.1M842.2 476.1L848.2 472.8M742.0 462.2L733.6 465.2M733.6 465.2L736.0 457.2M845.6 468.9L848.2 472.8M693.5 483.9L678.4 483.3M763.8 481.0L757.3 481.0M725.2 544.3L721.8 536.8M797.0 431.9L788.7 435.8M867.9 528.0L854.4 527.2M656.4 596.2L639.6 609.4M1005.1 393.7L1032.6 392.1M870.0 444.9L882.8 443.8M875.8 505.6L887.0 504.1M460.3 298.9L444.9 312.8M640.7 312.6L655.2 326.4M884.4 470.4L893.6 474.1M850.9 507.9L840.3 507.9M813.0 497.5L823.4 498.1M828.0 495.2L834.0 493.9M347.3 595.9L360.8 609.6M748.6 406.0L721.8 404.9M784.0 510.4L785.0 515.2M736.2 471.8L738.8 477.3M787.1 570.7L801.0 559.6M458.8 432.8L487.8 434.5M687.5 477.5L691.4 471.9M486.1 300.1L472.8 311.9M779.3 513.2L778.4 517.1M822.1 325.4L836.6 339.2M556.8 609.5L542.8 622.9M843.7 495.4L844.6 489.3M743.5 442.7L744.8 432.3M748.6 406.0L733.5 415.0M445.1 474.3L472.9 474.5M716.4 526.4L709.6 533.1M724.4 561.7L740.6 561.4M668.3 312.8L655.2 326.4M780.5 689.8L837.8 690.2M557.4 528.2L588.7 532.2M1005.9 339.9L1019.6 353.0M796.6 485.2L801.4 488.6M796.3 445.0L794.6 449.9M320.3 434.1L331.7 447.8M390.2 394.6L375.2 407.5M584.5 609.0L570.7 622.7M514.4 515.2L545.1 514.9M851.8 326.0L836.6 339.2M460.3 298.9L543.3 299.0M571.0 380.2L557.3 393.6M815.2 464.7L812.8 468.0M792.4 500.4L784.3 504.3M806.8 442.3L796.3 445.0M347.3 434.5L360.1 447.2M417.5 394.2L404.2 406.7M906.5 353.3L921.0 367.0M872.0 477.3L879.8 482.3M331.7 447.8L319.9 461.7M654.9 622.8L641.5 635.8M545.1 514.9L570.8 514.6M804.4 499.2L813.0 497.5M500.7 555.6L529.3 554.9M754.0 518.0L746.7 521.1M769.4 531.6L776.1 535.4M764.6 454.7L760.9 450.1M699.1 467.1L684.9 461.5M751.7 484.2L742.8 483.0M939.3 415.8L942.6 427.1M681.7 622.0L669.7 636.4M347.2 487.4L360.7 501.0M838.1 635.5L822.5 648.8M529.3 554.9L557.0 555.4M942.5 491.0L964.7 491.2M715.4 414.9L721.8 404.9M976.6 581.3L1005.2 582.5M761.0 443.9L776.7 440.2M1033.6 501.4L1033.5 555.7M840.1 465.2L839.4 459.8M756.1 497.3L749.0 495.1M761.1 486.6L755.5 487.6M734.0 446.2L718.6 446.1M671.9 499.3L685.2 501.2M887.4 425.4L892.0 415.9M900.7 491.0L898.2 484.7M808.3 478.0L810.9 474.9M403.0 515.7L416.5 528.0M818.9 484.8L814.6 483.3M781.4 381.9L797.3 368.6M865.7 636.1L849.5 650.0M387.9 527.9L375.0 542.3M1019.7 649.1L1003.9 663.7M1005.2 582.5L1032.1 582.6M967.4 479.0L983.7 471.6M720.5 482.7L719.2 487.8M668.1 609.0L697.7 608.9M830.4 533.7L822.3 537.6M677.3 453.0L660.1 448.7M751.7 484.2L755.5 487.6M767.4 411.0L790.8 412.4M431.6 515.3L446.0 529.0M966.7 545.8L946.7 546.0M388.3 554.6L375.5 568.9M747.5 572.4L728.2 571.5M459.3 676.9L444.9 690.9M821.1 462.3L823.2 457.9M709.1 479.0L704.9 485.1M697.7 608.9L725.7 608.9M797.9 490.8L797.3 494.2M571.8 433.8L596.7 442.4M796.3 445.0L804.2 446.8M779.6 451.9L775.2 445.4M417.3 555.4L402.7 570.2M660.1 448.7L639.6 451.5M752.9 636.8L781.3 636.5M670.2 520.4L666.8 530.3M361.5 581.8L347.3 595.9M486.5 676.7L472.5 689.7M991.4 622.9L1018.8 622.5M627.0 299.4L613.2 312.9M785.8 598.9L764.3 604.7M896.7 523.3L891.4 530.0M815.3 458.3L808.4 456.1M389.0 582.7L376.0 596.2M884.7 510.5L887.5 517.4M942.5 491.0L926.9 485.3M817.0 473.2L818.9 469.7M430.7 649.0L459.8 649.7M654.5 300.3L640.7 312.6M740.6 561.4L754.2 556.5M720.5 482.7L728.2 483.7M804.9 549.6L818.7 558.5M773.6 526.1L769.4 531.6M769.7 539.8L782.7 546.2M813.0 497.5L809.9 501.4M543.1 595.8L556.8 609.5M347.7 298.8L362.6 313.0M708.8 498.1L699.0 501.8M836.7 312.6L822.1 325.4M734.3 451.9L722.9 451.9M866.8 488.2L870.1 492.4M752.1 426.0L744.8 432.3M810.5 431.1L824.8 428.4M893.7 497.9L900.7 491.0M749.0 495.1L741.9 494.5M1031.9 447.7L1001.1 445.2M850.9 507.9L859.5 511.7M905.5 477.6L917.6 479.4M725.9 494.5L716.9 493.3M847.0 406.2L828.5 394.7M836.7 558.7L851.0 567.4M656.5 380.5L664.5 394.8M823.2 457.9L824.1 450.7M1019.5 326.3L1005.9 339.9M978.5 689.9L1031.4 690.3M820.4 578.8L819.3 567.5M444.2 610.4L458.6 622.3M991.2 379.7L1005.1 393.7M781.7 540.2L796.5 544.6M787.1 570.7L800.2 577.3M788.0 460.4L780.8 463.5M458.4 352.8L445.0 366.6M557.0 420.7L571.8 433.8M1018.8 380.1L1032.6 392.1M963.3 299.0L991.1 299.3M785.0 515.2L779.3 513.2M515.6 434.6L500.1 447.3M515.0 622.8L529.3 636.5M671.5 462.0L662.5 470.8M528.1 447.3L515.6 461.4M851.2 622.8L838.1 635.5M347.7 298.8L460.3 298.9M919.4 467.4L936.9 464.8M348.0 568.8L375.5 568.9M731.9 583.1L728.2 571.5M486.5 353.1L472.4 366.2M798.8 497.8L804.4 499.2M729.1 474.7L735.6 481.1M991.1 299.3L1017.4 299.3M544.4 434.1L528.1 447.3M403.8 326.0L432.8 326.4M542.8 622.9L557.2 636.9M935.4 381.4L927.0 401.1M542.3 487.5L557.1 502.3M1032.7 636.5L1019.7 649.1M304.4 393.7L304.2 501.2M836.1 518.5L841.6 522.4M430.0 596.5L459.4 596.4M727.5 516.2L723.6 510.8M817.5 508.8L812.1 512.4M830.4 503.7L840.3 507.9M747.3 531.8L755.7 524.9M432.8 326.4L458.5 326.7M528.6 474.2L542.3 487.5M584.4 339.7L614.7 339.9M981.2 498.3L993.8 484.8M913.2 491.5L929.8 493.8M736.8 425.5L717.2 425.9M764.5 514.2L756.5 513.3M570.8 514.6L610.6 521.6M723.8 637.0L738.5 649.4M748.8 471.3L736.2 471.8M473.6 662.9L459.3 676.9M792.4 550.3L801.0 559.6M715.4 414.9L695.3 413.4M896.3 538.5L912.7 546.1M716.9 493.3L719.2 487.8M614.7 339.9L641.7 339.4M781.8 457.3L779.6 451.9M1019.1 514.5L1032.3 527.9M907.7 649.9L921.2 662.8M584.8 555.8L570.8 568.2M785.7 447.7L787.5 452.5M868.5 393.0L849.8 395.3M792.4 492.5L797.3 494.2M809.9 501.4L815.5 500.6M653.5 676.5L639.2 690.5M556.5 366.3L583.9 367.6M1018.3 541.2L1033.5 555.7M794.6 353.2L822.0 353.4M934.4 650.0L947.8 662.5M774.0 487.2L774.0 483.8M755.0 459.2L764.6 454.7M346.7 676.8L360.7 690.2M803.9 469.6L807.0 465.6M834.0 493.9L827.1 491.5M777.9 476.8L771.3 480.3M683.3 676.7L669.7 689.8M798.2 479.9L799.1 476.5M446.2 636.5L472.7 636.5M359.7 393.3L390.2 394.6M788.7 435.8L776.7 440.2M809.6 394.2L781.4 381.9M348.0 380.1L374.8 379.8M991.6 568.8L1005.2 582.5M375.2 677.1L387.6 689.9M515.1 300.1L528.6 312.8M1003.7 555.8L976.6 533.8M870.1 492.4L876.4 488.2M626.8 649.8L655.1 648.7M782.3 580.9L805.0 589.7M941.0 524.4L950.5 512.9M811.0 481.2L814.6 483.3M831.2 473.4L836.7 469.7M786.4 535.0L801.0 535.0M768.4 557.2L756.4 563.8M821.3 403.8L808.5 409.6M1019.4 568.5L1032.1 582.6M318.9 407.6L347.5 407.4M822.8 413.7L847.0 406.2M569.7 676.2L599.0 677.3M543.3 299.0L556.8 313.1M833.9 421.4L842.2 414.8M802.4 463.2L801.9 458.9M697.9 312.4L709.7 326.5M807.1 487.4L811.4 486.1M809.3 662.4L836.2 662.4M1033.5 555.7L1034.0 663.0M900.0 440.0L915.1 440.8M773.6 526.1L781.5 525.2M768.4 557.2L766.7 572.6M515.6 434.6L544.4 434.1M754.3 689.9L780.5 689.8M859.5 511.7L872.2 513.8M726.2 313.3L739.7 326.5M832.4 481.7L830.1 485.1M878.8 325.7L893.8 340.4M727.5 499.5L729.0 504.1M794.8 538.8L796.5 544.6M990.7 677.6L1018.3 676.4M831.7 522.9L841.6 522.4M639.6 609.4L654.9 622.8M820.4 578.8L805.0 589.7M671.0 477.0L654.3 477.8M772.8 463.6L780.8 463.5M905.9 325.8L920.6 340.2M317.8 353.6L334.5 366.3M639.2 690.5L837.8 690.2M626.3 380.3L640.9 393.4M823.7 299.2L879.5 299.4M874.8 471.6L866.9 468.4M824.1 450.7L832.2 453.0M444.6 393.7L430.6 406.6M822.0 353.4L836.8 372.5M677.3 431.3L656.4 439.4M389.4 447.5L402.8 461.0M710.8 622.9L723.8 637.0M824.5 473.3L831.2 473.4M829.7 464.3L839.4 459.8M347.2 353.2L360.8 366.1M708.8 498.1L694.6 496.5M740.5 542.2L736.7 535.4M782.3 580.9L785.8 598.9M737.3 515.1L736.4 522.0M318.1 488.8L304.2 501.2M403.2 433.6L417.6 449.0M768.5 521.9L755.7 524.9M599.1 325.9L626.7 326.0M609.1 508.0L590.0 496.2M640.3 582.0L671.7 580.4M892.9 636.2L907.7 649.9M739.3 623.1L723.8 637.0M921.3 636.9L934.4 650.0M446.0 529.0L459.1 542.3M333.6 663.2L346.7 676.8M334.3 608.8L360.8 609.6M828.5 394.7L808.2 382.0M806.4 482.4L807.1 487.4M879.8 482.3L890.4 479.9M875.3 465.4L881.8 460.8M445.7 555.5L458.6 569.0M813.0 497.5L815.5 500.6M361.4 663.4L375.2 677.1M939.3 415.8L927.0 401.1M921.4 534.7L946.7 546.0M821.4 476.4L819.8 480.3M736.8 425.5L733.5 415.0M812.1 512.4L817.9 519.3M792.4 550.3L784.4 560.8M935.7 595.6L905.6 576.4M626.3 622.5L654.9 622.8M472.5 555.5L487.3 569.2M658.2 493.7L644.7 498.6M990.9 352.9L1019.6 353.0M609.1 508.0L625.2 500.3M993.8 484.8L1012.5 494.3M543.4 676.5L557.2 690.1M671.9 499.3L675.0 506.2M892.0 459.1L891.9 465.8M598.5 568.5L622.4 557.8M808.3 461.1L815.3 458.3M652.6 519.9L647.4 535.7M542.1 380.0L571.0 380.2M444.3 582.0L459.4 596.4M851.8 422.5L861.5 415.6M890.4 479.9L905.5 477.6M828.5 394.7L852.7 384.0M875.8 505.6L881.4 499.3M571.5 596.0L584.5 609.0M804.9 549.6L817.2 551.0M515.1 407.1L543.1 407.1M895.8 512.8L909.9 508.6M824.5 473.3L828.5 476.7M710.6 299.7L697.9 312.4M870.3 454.7L881.4 455.0M597.7 596.3L614.0 608.8M753.9 474.4L753.7 478.3M389.4 447.5L417.6 449.0M678.5 491.7L671.9 499.3M672.5 567.2L648.8 567.5M591.6 481.5L590.0 496.2M893.4 312.2L878.8 325.7M816.9 421.2L801.7 417.3M833.9 421.4L851.8 422.5M761.8 504.1L753.9 506.2M761.4 476.4L757.3 481.0M882.8 443.8L894.4 451.9M345.9 514.9L374.3 515.4M845.6 468.9L856.5 471.6M401.5 487.0L429.7 488.1M725.7 690.1L837.8 690.2M963.2 522.3L972.9 512.7M333.0 340.3L317.8 353.6M513.7 353.3L529.1 366.8M304.4 393.7L318.9 407.6M806.4 482.4L803.7 479.9M778.2 521.1L773.6 526.1M707.3 506.2L694.0 507.4M446.0 529.0L473.2 528.0M753.1 381.7L753.9 367.7M795.0 488.0L796.6 485.2M736.0 457.2L734.3 451.9M332.8 393.3L347.5 407.4M472.9 474.5L459.0 487.9M794.8 538.8L808.4 540.4M819.0 531.2L813.7 524.4M656.4 439.4L637.6 440.3M907.5 622.8L892.9 636.2M840.3 507.9L831.6 509.8M542.0 352.8L529.1 366.8M822.5 523.4L819.0 531.2M897.0 506.7L893.7 497.9M894.4 451.9L908.9 455.3M747.3 531.8L736.7 535.4M557.9 582.4L585.7 583.1M988.6 522.3L972.9 512.7M333.3 501.2L319.4 514.8M346.1 649.5L333.6 663.2M915.1 440.8L924.9 449.3M990.1 325.9L1019.5 326.3M763.2 495.7L756.1 497.3M853.5 482.4L860.5 479.4M528.0 609.7L556.8 609.5M801.0 559.6L804.8 569.0M610.6 470.4L598.9 459.8M749.9 499.3L755.9 501.9M432.2 353.9L458.4 352.8M760.9 450.1L750.1 450.0M811.9 504.6L809.7 508.3M831.6 457.3L843.3 454.1M830.3 434.5L844.2 436.3M319.2 675.7L304.1 690.4M304.4 393.7L305.7 420.3M768.3 498.3L775.0 500.4M822.2 622.5L851.2 622.8M879.8 482.3L888.1 486.6M704.0 526.4L696.6 518.3M893.7 497.9L890.5 492.7M713.7 597.0L731.9 583.1M804.1 476.2L810.9 474.9M611.9 367.5L641.5 366.6M784.7 477.4L786.9 474.0M792.4 500.4L798.8 501.6M725.2 544.3L717.5 552.2M859.1 437.5L848.1 443.1M867.9 528.0L873.3 534.6M750.1 450.0L734.0 446.2M1004.7 636.4L1032.7 636.5M875.8 505.6L884.7 510.5M927.0 474.5L917.6 479.4M1032.9 339.7L1033.0 366.4M879.4 581.2L862.8 590.4M740.4 677.2L725.7 690.1M822.8 413.7L821.3 403.8M753.9 367.7L797.3 368.6M717.5 462.7L702.0 459.5M988.6 522.3L998.3 507.4M781.7 501.1L778.3 504.4M445.3 663.6L473.6 662.9M851.0 567.4L848.0 579.6M881.4 499.3L887.0 504.1M778.3 504.4L769.6 505.5M640.3 582.0L626.6 595.6M320.4 379.4L304.4 393.7M738.8 477.3L729.1 474.7M682.7 650.3L710.7 649.6M815.3 458.3L814.8 451.9M908.8 299.7L893.4 312.2M950.5 512.9L939.6 501.4M843.7 495.4L838.6 491.4M838.5 512.4L836.1 518.5M331.5 582.9L347.3 595.9M948.4 393.5L927.0 401.1M627.8 676.9L653.5 676.5M599.8 299.4L613.2 312.9M842.2 414.8L861.5 415.6M713.7 393.1L721.8 404.9M346.3 326.3L333.0 340.3M864.3 663.4L893.3 662.8M679.2 470.2L671.5 462.0M639.6 451.5L622.0 459.6M806.9 689.7L837.8 690.2M779.8 312.1L794.2 326.8M793.6 298.8L823.7 299.2M906.3 501.3L909.9 508.6M528.8 340.7L513.7 353.3M906.5 353.3L894.5 366.6M872.0 477.3L860.5 479.4M1005.1 393.7L990.6 406.7M764.6 429.6L752.1 426.0M500.2 393.7L515.1 407.1M710.7 489.5L700.8 491.4M697.7 608.9L710.8 622.9M719.0 498.2L708.8 498.1M837.8 690.2L864.3 690.2M754.0 518.0L746.4 515.1M700.8 491.4L694.6 496.5M961.2 326.7L976.9 339.8M934.0 352.9L921.0 367.0M710.1 353.3L698.4 366.3M542.3 487.5L591.6 481.5M347.2 487.4L333.3 501.2M926.9 485.3L947.5 482.8M528.7 393.2L543.1 407.1M847.7 463.2L839.4 459.8M767.7 483.6L771.3 480.3M557.1 502.3L590.0 496.2M790.4 524.1L781.5 525.2M803.3 495.9L798.8 497.8M836.7 469.7L848.2 472.8M811.9 504.6L822.8 505.3M375.3 487.8L360.7 501.0M613.6 582.6L622.4 557.8M785.6 427.1L801.5 425.0M795.0 622.3L810.5 636.3M731.9 583.1L712.7 580.0M742.4 553.4L717.5 552.2M778.2 521.1L771.4 518.0M445.8 339.6L474.4 339.8M796.6 485.2L802.6 485.3M431.6 515.3L416.5 528.0M738.5 649.4L753.0 663.0M801.5 425.0L810.5 431.1M816.9 421.2L833.9 421.4M976.4 636.7L989.8 649.2M983.7 471.6L966.0 462.5M777.7 489.7L774.0 487.2M826.3 480.2L823.8 483.2M813.0 489.7L811.4 486.1M627.7 353.1L655.0 352.9M846.6 511.4L845.3 517.1M789.4 507.7L789.7 511.9M304.5 312.8L305.2 340.3M500.7 555.6L515.1 568.2M794.6 449.9L787.5 452.5M417.2 662.9L430.4 676.7M830.4 503.7L824.5 508.7M702.0 459.5L684.9 461.5M763.2 495.7L761.4 499.6M921.0 367.0L950.3 366.7M761.1 486.6L751.7 484.2M963.2 522.3L976.6 533.8M832.2 453.0L843.3 454.1M743.5 442.7L727.2 440.5M529.3 554.9L543.4 568.7M859.3 506.4L859.5 511.7M817.0 473.2L821.4 476.4M780.8 463.5L776.4 460.0M881.4 499.3L893.7 497.9M599.0 677.3L612.7 690.0M727.2 440.5L712.8 437.8M612.8 393.8L640.9 393.4M347.7 298.8L333.5 313.0M865.7 608.7L862.8 590.4M839.5 483.6L846.7 484.5M597.9 380.1L626.3 380.3M500.3 581.8L516.2 595.8M688.8 524.0L695.3 531.7M742.0 462.2L744.6 457.0M866.8 488.2L858.2 487.7M712.8 437.8L717.2 425.9M766.5 299.4L779.8 312.1M755.0 459.2L754.4 454.2M347.3 434.5L375.2 435.2M761.4 499.6L755.9 501.9M839.7 449.4L848.1 443.1M571.4 407.0L599.7 407.3M656.4 596.2L671.7 580.4M819.8 480.3L823.8 483.2M768.7 459.5L764.6 454.7M948.1 312.3L961.2 326.7M749.9 499.3L741.9 494.5M981.2 498.3L1012.5 494.3M332.8 474.6L361.5 475.3M756.4 563.8L747.5 572.4M570.8 514.6L590.0 496.2M787.1 570.7L766.7 572.6M882.8 443.8L881.4 455.0M733.6 465.2L726.1 470.4M709.6 568.5L691.3 573.5M709.6 533.1L696.5 540.4M837.7 442.3L839.7 449.4M837.6 498.2L843.7 495.4M976.2 312.9L990.1 325.9M1018.8 380.1L1005.1 393.7M389.4 340.0L402.1 352.9M785.3 519.7L778.2 521.1M403.0 515.7L431.6 515.3M360.8 366.1L348.0 380.1M739.6 353.5L753.9 367.7M777.8 497.7L781.7 501.1M712.7 580.0L686.2 594.8M683.0 298.9L739.5 299.3M680.6 536.4L696.5 540.4M585.6 420.4L571.8 433.8M798.8 497.8L793.2 497.2M866.9 468.4L856.6 467.1M417.2 339.9L432.2 353.9M796.3 445.0L785.7 447.7M854.3 456.1L847.7 463.2M542.8 622.9L529.3 636.5M815.2 440.7L806.4 436.6M571.7 353.0L583.9 367.6M431.6 515.3L459.2 515.0M388.3 554.6L417.3 555.4M542.3 487.5L526.7 501.4M941.6 456.5L936.9 464.8M892.0 459.1L881.8 460.8M658.4 429.1L636.5 429.2M794.8 459.8L790.0 456.7M729.2 431.1L717.2 425.9M769.8 470.4L772.8 475.6M543.9 460.6L557.6 473.8M598.9 353.6L611.9 367.5M806.8 442.3L798.6 439.4M528.6 474.2L513.3 487.9M966.7 545.8L953.3 560.0M417.3 555.4L445.7 555.5M908.9 455.3L924.9 449.3M766.7 572.6L747.5 572.4M763.1 491.7L756.9 492.3M736.4 522.0L727.5 516.2M1001.1 445.2L971.4 448.5M808.4 540.4L822.3 537.6M863.7 473.4L866.9 468.4M557.6 473.8L542.3 487.5M922.7 609.3L891.8 593.8M906.3 501.3L920.6 502.4M752.9 636.8L738.5 649.4M784.0 510.4L776.8 508.2M612.6 482.8L628.0 471.8M613.6 582.6L640.3 582.0M827.1 491.5L825.6 486.7M843.7 495.4L852.7 491.5M808.9 492.0L814.8 494.5M757.3 481.0L751.7 484.2M801.4 488.6L804.7 490.6M1018.3 541.2L1003.7 555.8M779.9 530.6L786.4 535.0M895.8 512.8L897.0 506.7M934.4 650.0L921.2 662.8M584.5 609.0L614.0 608.8M347.7 298.8L793.6 298.8M348.0 568.8L331.5 582.9M798.2 479.9L793.3 477.3M781.5 473.8L775.7 472.6M761.0 443.9L775.2 445.4M612.8 663.9L627.8 676.9M668.1 609.0L686.2 594.8M725.9 494.5L727.5 499.5M375.2 677.1L360.7 690.2M879.0 622.6L907.5 622.8M744.6 457.0L750.1 450.0M803.7 479.9L799.1 476.5M796.6 676.3L806.9 689.7M941.0 524.4L963.2 522.3M815.5 500.6L822.8 505.3M746.1 475.2L736.2 471.8M768.3 466.9L772.8 463.6M1019.4 568.5L1005.2 582.5M801.5 425.0L801.7 417.3M318.6 649.8L346.1 649.5M543.3 299.0L528.6 312.8M776.1 535.4L786.4 535.0M763.3 420.2L752.1 426.0M942.5 491.0L929.8 493.8M830.1 485.1L837.8 487.4M742.8 483.0L746.3 487.0M859.3 506.4L870.9 500.2M819.8 480.3L814.6 483.3M900.0 440.0L905.0 448.5M773.7 492.5L772.4 496.3M709.6 568.5L712.7 580.0M725.4 458.7L734.3 451.9M896.7 523.3L907.7 530.1M499.9 663.1L528.9 663.6M726.2 313.3L709.7 326.5M791.5 503.8L789.4 507.7M896.7 523.3L879.8 528.0M963.3 299.0L948.1 312.3M859.5 511.7L846.6 511.4M528.9 663.6L556.7 663.0M838.0 527.9L851.6 532.9M905.9 325.8L893.8 340.4M864.3 690.2L921.4 690.4M744.8 432.3L729.2 431.1M882.8 443.8L885.2 434.1M806.4 482.4L811.4 486.1M824.1 450.7L829.3 445.8M403.8 326.0L389.4 340.0M752.1 426.0L756.6 433.8M389.4 447.5L376.6 461.1M779.0 480.6L771.3 480.3M711.3 676.5L740.4 677.2M347.2 353.2L334.5 366.3M656.5 380.5L640.9 393.4M742.4 553.4L740.6 561.4M851.3 300.0L879.5 299.4M818.7 558.5L817.2 551.0M403.2 433.6L389.4 447.5M769.4 531.6L765.2 527.2M990.9 352.9L1004.8 366.8M584.4 339.7L571.7 353.0M318.9 407.6L305.7 420.3M417.6 449.0L402.8 461.0M891.3 689.9L921.4 690.4M729.0 504.1L715.6 503.2M842.2 476.1L851.1 477.4M837.8 479.5L842.2 476.1M879.5 299.4L908.8 299.7M836.6 543.5L822.7 544.0M432.0 433.9L417.6 449.0M430.2 623.3L446.2 636.5M773.6 526.1L779.9 530.6M585.8 393.7L599.7 407.3M921.3 636.9L907.7 649.9M429.7 488.1L446.7 501.4M319.5 595.5L347.3 595.9M781.4 381.9L808.2 382.0M658.4 429.1L678.7 419.0M319.7 326.9L346.3 326.3M776.8 508.2L770.8 509.9M788.7 435.8L778.1 432.5M416.5 474.8L429.7 488.1M613.1 635.8L626.8 649.8M708.4 517.9L696.6 518.3M473.2 528.0L459.1 542.3M361.4 663.4L346.7 676.8M834.8 570.5L848.0 579.6M865.7 608.7L892.3 608.4M799.0 473.5L803.9 469.6M1033.3 421.4L1031.9 447.7M784.7 481.1L784.7 477.4M460.3 298.9L683.0 298.9M809.6 394.2L808.2 382.0M501.8 339.8L528.8 340.7M885.2 557.2L870.4 570.0M487.5 515.4L473.2 528.0M797.9 490.8L802.7 493.0M472.5 555.5L458.6 569.0M863.7 473.4L874.8 471.6M500.9 528.1L485.4 542.0M805.0 589.7L785.8 598.9M884.4 470.4L875.3 465.4M769.8 470.4L762.0 469.0M543.4 676.5L528.7 691.1M892.3 608.4L922.7 609.3M670.2 520.4L652.6 519.9M305.6 636.4L334.2 635.6M774.0 483.8L771.3 480.3M636.5 429.2L647.8 418.1M684.4 353.6L710.1 353.3M746.1 475.2L738.8 477.3M976.3 663.7L990.7 677.6M677.3 431.3L658.4 429.1M875.3 465.4L866.9 468.4M998.3 507.4L1012.5 494.3M569.7 676.2L557.2 690.1M444.3 582.0L430.0 596.5M334.2 635.6L360.1 636.0M869.4 482.4L879.8 482.3M487.8 648.8L513.7 648.7M881.5 544.7L867.1 554.3M720.5 482.7L704.9 485.1M615.6 421.6L632.2 407.6M977.8 367.0L1004.8 366.8M808.3 478.0L814.0 478.0M988.7 458.3L971.4 448.5M748.7 480.8L742.8 483.0M513.7 648.7L542.3 650.1M629.6 513.4L633.1 526.2M823.8 483.2L832.4 481.7M654.3 477.8L665.8 485.9M948.4 393.5L976.4 393.8M854.3 456.1L864.4 458.8M876.4 488.2L879.8 482.3M821.4 476.4L828.5 476.7M697.4 663.1L725.1 662.9M941.6 456.5L971.4 448.5M823.7 299.2L836.7 312.6M976.4 393.8L1005.1 393.7M626.6 595.6L614.0 608.8M403.2 433.6L432.0 433.9M585.6 420.4L596.7 442.4M736.9 508.1L746.8 504.0M740.3 489.6L731.0 489.0M612.6 482.8L590.0 496.2M872.0 477.3L863.7 473.4M764.3 604.7L737.8 596.1M878.7 676.8L907.2 677.4M807.1 487.4L804.7 490.6M755.9 501.9L753.9 506.2M808.5 409.6L794.6 400.9M528.0 609.7L542.8 622.9M432.0 433.9L458.8 432.8M808.4 540.4L801.0 535.0M773.7 492.5L777.8 497.7M873.3 534.6L881.5 544.7M754.3 689.9L837.8 690.2M936.9 464.8L927.0 474.5M907.2 677.4L935.4 676.6M950.5 512.9L972.9 512.7M795.0 488.0L791.6 485.9M736.0 457.2L725.4 458.7M832.4 481.7L839.5 483.6M807.0 465.6L815.2 464.7M332.8 393.3L318.9 407.6M416.5 474.8L445.1 474.3M1019.1 434.0L1031.9 447.7M708.4 517.9L704.0 526.4M802.7 493.0L804.7 490.6M844.2 436.3L854.0 430.9M790.4 524.1L798.6 525.6M515.1 407.1L501.0 420.4M976.9 339.8L990.9 352.9M671.5 462.0L656.1 462.7M791.6 485.9L796.6 485.2M739.5 299.3L793.6 298.8M840.3 507.9L846.6 511.4M744.6 457.0L734.3 451.9M359.7 393.3L347.5 407.4M474.4 339.8L486.5 353.1M797.9 490.8L792.4 492.5M305.8 447.9L319.9 461.7M488.4 326.6L514.0 326.5M487.5 515.4L514.4 515.2M796.3 445.0L788.8 441.3M767.4 411.0L779.2 405.6M781.7 540.2L786.4 535.0M944.3 473.4L927.0 474.5M935.4 381.4L903.1 393.0M903.9 463.5L919.4 467.4M769.9 490.3L763.1 491.7M793.3 477.3L799.1 476.5M942.3 446.9L970.1 436.2M661.9 543.6L679.7 545.2M649.5 486.4L633.7 491.4M655.0 352.9L668.1 367.2M865.5 405.4L868.5 393.0M669.3 340.1L698.4 339.5M684.9 461.5L679.2 470.2M879.4 581.2L891.8 593.8M334.1 528.4L347.1 542.4M626.3 622.5L613.1 635.8M801.0 559.6L818.7 558.5M736.7 535.4L721.8 536.8M810.5 636.3L822.5 648.8M926.9 485.3L917.6 479.4M860.9 491.9L866.8 488.2M807.0 465.6L798.5 466.4M774.6 467.1L769.8 470.4M851.1 354.5L879.1 352.4M361.8 528.1L375.0 542.3M989.8 649.2L1003.9 663.7M708.4 517.9L703.4 511.9M845.6 468.9L847.7 463.2M557.6 473.8L591.6 481.5M725.9 494.5L731.0 489.0M804.1 476.2L799.0 473.5M872.2 513.8L864.2 522.1M817.0 487.8L811.4 486.1M748.8 471.3L750.1 465.2M401.5 380.1L430.5 380.5M430.4 676.7L444.9 690.9M820.4 578.8L831.1 590.8M1031.9 447.7L1033.8 474.5M713.7 597.0L712.7 580.0M907.5 555.2L927.0 554.2M794.9 481.9L793.3 477.3M669.2 662.7L683.3 676.7M761.8 504.1L769.6 505.5M869.1 433.0L871.9 425.2M852.7 491.5L860.9 491.9M430.5 380.5L457.8 380.9M848.2 472.8L856.5 471.6M781.8 457.3L776.4 460.0M836.8 372.5L797.3 368.6M834.0 493.9L833.6 489.8M831.6 509.8L831.7 513.9M850.2 676.7L864.3 690.2M714.2 456.7L702.0 459.5M926.9 485.3L927.0 474.5M331.5 582.9L319.5 595.5M620.3 446.3L637.6 440.3M404.2 406.7L430.6 406.6M885.2 434.1L887.4 425.4M948.4 393.5L960.1 421.4M733.5 415.0L715.4 414.9M599.8 299.4L584.0 312.5M905.0 448.5L915.1 440.8M820.6 494.8L823.4 498.1M783.0 419.0L763.3 420.2M808.4 456.1L814.8 451.9M486.7 594.9L500.1 609.0M1017.4 299.3L1032.2 312.5M305.2 340.3L304.4 393.7M852.7 384.0L849.8 395.3M779.8 312.1L767.8 326.1M822.5 523.4L826.7 528.1M305.8 447.9L331.7 447.8M749.9 499.3L736.8 502.7M672.5 567.2L691.3 573.5M961.2 326.7L948.8 339.8M730.6 385.1L693.2 383.7M706.8 451.3L703.6 443.2M753.7 478.3L757.3 481.0M528.7 393.2L515.1 407.1M725.7 608.9L710.8 622.9M837.7 442.3L848.1 443.1M318.1 488.8L347.2 487.4M375.2 407.5L387.8 420.2M334.1 528.4L361.8 528.1M621.0 536.4L603.9 546.8M717.2 425.9L701.9 422.1M652.6 519.9L633.1 526.2M990.1 325.9L976.9 339.8M870.9 500.2L881.4 499.3M962.2 380.7L976.4 393.8M881.4 499.3L890.5 492.7M487.8 434.5L500.1 447.3M306.2 366.8L320.4 379.4M472.3 447.3L458.9 461.6M656.1 462.7L639.6 451.5M361.8 528.1L387.9 527.9M795.0 622.3L781.3 636.5M734.3 451.9L750.1 450.0M778.2 521.1L781.5 525.2M432.2 353.9L418.2 366.5M772.2 513.3L770.8 509.9M796.6 485.2L794.9 481.9M934.7 299.7L963.3 299.0M776.7 440.2L768.6 435.9M694.0 507.4L685.2 501.2M822.2 622.5L810.5 636.3M487.2 488.3L501.4 501.2M976.4 636.7L961.7 649.1M318.1 568.8L348.0 568.8M892.0 415.9L919.3 422.7M376.0 596.2L402.5 595.7M373.9 325.7L403.8 326.0M865.7 608.7L891.8 593.8M545.1 514.9L557.4 528.2M699.8 548.1L696.5 540.4M798.6 525.6L805.2 520.6M1004.7 636.4L989.8 649.2M819.6 434.1L810.5 431.1M530.2 528.6L513.8 542.4M417.2 662.9L401.9 676.8M402.5 595.7L430.0 596.5M922.7 609.3L949.2 608.9M763.2 495.7L768.3 498.3M843.5 503.9L851.9 502.5M529.3 554.9L515.1 568.2M823.2 457.9L831.6 457.3M859.3 506.4L867.4 508.5M620.3 446.3L615.6 421.6M445.3 663.6L430.4 676.7M599.0 677.3L583.5 690.7M949.2 608.9L977.9 608.3M360.1 636.0L388.5 636.5M648.9 510.6L652.6 519.9M831.0 499.1L830.4 503.7M919.4 564.9L897.3 565.5M871.9 425.2L885.2 434.1M818.9 469.7L823.5 467.1M715.6 503.2L707.3 506.2M794.2 648.3L809.3 662.4M557.0 555.4L543.4 568.7M842.4 428.2L851.8 422.5M500.3 581.8L486.7 594.9M742.0 462.2L736.0 457.2M924.9 449.3L924.2 459.0M627.8 676.9L612.7 690.0M801.0 559.6L819.3 567.5M388.5 636.5L416.7 637.0M725.7 608.9L764.3 604.7M784.7 477.4L777.9 476.8M529.9 581.9L516.2 595.8M819.8 480.3L826.3 480.2M884.4 470.4L891.9 465.8M571.5 649.6L599.1 650.0M793.6 298.8L779.8 312.1M907.5 555.2L919.4 564.9M725.9 494.5L719.2 487.8M828.0 495.2L831.0 499.1M648.8 567.5L671.7 580.4M809.9 501.4L804.8 502.6M808.2 382.0L836.8 372.5M486.1 300.1L501.7 312.7M746.3 487.0L735.3 485.9M892.0 415.9L914.0 411.2M652.6 519.9L629.6 513.4M753.0 663.0L781.2 663.7M976.2 312.9L961.2 326.7M716.8 474.1L709.1 479.0M696.7 430.3L701.9 422.1M693.5 483.9L689.4 491.3M768.3 498.3L761.4 499.6M712.7 580.0L691.3 573.5M881.4 499.3L880.7 493.9M668.3 312.8L683.9 326.7M731.0 489.0L719.2 487.8M680.6 536.4L679.7 545.2M879.8 482.3L881.7 476.5M935.4 676.6L963.9 676.4M417.2 339.9L402.1 352.9M390.2 394.6L404.2 406.7M584.5 609.0L597.8 622.7M746.7 521.1L737.3 515.1M888.1 486.6L890.5 492.7M647.8 418.1L615.6 421.6M851.8 326.0L866.2 339.9M571.0 380.2L585.8 393.7M445.8 339.6L432.2 353.9M793.6 298.8L879.5 299.4M815.2 464.7L823.5 467.1M806.8 442.3L806.4 436.6M417.5 394.2L430.6 406.6M801.9 458.9L799.0 454.9M362.6 313.0L390.2 313.0M598.9 353.6L583.9 367.6M662.5 470.8L646.2 469.7M331.7 447.8L348.2 460.7M829.3 445.8L826.2 439.9M775.0 500.4L778.3 504.4M828.2 518.9L823.4 515.8M571.4 407.0L557.0 420.7M837.8 690.2L921.4 690.4M801.4 488.6L797.9 490.8M769.4 531.6L758.3 530.6M627.7 353.1L611.9 367.5M764.6 454.7L768.9 450.2M390.2 313.0L417.5 312.2M762.0 469.0L768.3 466.9M360.1 447.2L376.6 461.1M570.8 514.6L588.7 532.2M544.1 326.1L570.4 326.8M681.7 622.0L697.8 636.1M716.9 493.3L708.8 498.1M814.8 451.9L804.2 446.8M939.6 501.4L942.5 491.0M417.8 501.5L403.0 515.7M797.3 494.2L803.3 495.9M769.4 531.6L769.7 539.8M731.0 489.0L728.2 483.7M803.3 495.9L804.4 499.2M815.3 458.3L823.2 457.9M900.7 491.0L913.2 491.5M570.4 326.8L599.1 325.9M725.5 340.0L752.2 339.8M865.7 636.1L879.6 648.8M613.6 582.6L648.8 567.5M387.9 527.9L402.3 542.2M807.9 494.9L814.8 494.5M851.1 449.3L848.1 443.1M598.9 459.8L591.6 481.5M612.8 663.9L599.0 677.3M374.5 622.8L403.6 623.2M759.9 542.6L756.3 549.0M752.2 339.8L780.8 338.8M746.7 521.1L743.7 526.7M906.5 353.3L934.0 352.9M305.1 663.0L319.2 675.7M416.5 528.0L430.8 542.0M747.5 572.4L740.6 561.4M757.3 587.1L731.9 583.1M798.6 439.4L797.0 431.9M796.6 676.3L780.5 689.8M697.7 608.9L686.2 594.8M557.2 636.9L586.0 635.8M417.3 555.4L431.1 568.6M934.0 352.9L962.7 353.4M457.8 380.9L487.2 380.1M486.5 676.7L499.2 690.5M763.3 420.2L767.4 411.0M776.1 535.4L781.7 540.2M859.3 506.4L860.2 500.2M793.2 497.2L787.9 494.9M828.5 476.7L826.3 480.2M731.0 489.0L735.3 485.9M896.7 523.3L909.3 518.8M487.2 380.1L514.4 379.9M389.0 582.7L402.5 595.7M514.0 675.9L528.7 691.1M960.1 421.4L970.1 436.2M654.5 300.3L668.3 312.8M767.9 649.5L794.2 648.3M773.6 526.1L765.2 527.2M305.5 528.1L304.6 555.5M417.4 582.5L430.0 596.5M748.6 406.0L733.8 397.7M460.3 407.7L487.6 406.6M785.6 427.1L778.1 432.5M696.6 518.3L688.8 524.0M683.0 298.9L697.9 312.4M836.7 312.6L851.8 326.0M698.9 477.6L687.5 477.5M947.8 662.5L976.3 663.7M752.1 426.0L736.8 425.5M893.7 497.9L906.3 501.3M725.9 494.5L719.0 498.2M981.2 498.3L972.9 512.7M905.5 477.6L904.3 470.2M331.7 447.8L360.1 447.2M699.8 548.1L677.1 554.1M656.4 596.2L686.2 594.8M865.1 311.9L878.8 325.7M1019.5 326.3L1032.9 339.7M820.4 578.8L834.8 570.5M387.6 689.9L418.2 691.0M990.9 352.9L977.8 367.0M908.9 455.3L924.2 459.0M777.8 497.7L772.4 496.3M787.1 570.7L782.3 580.9M347.2 487.4L375.3 487.8M881.4 455.0L894.4 451.9M305.2 340.3L317.8 353.6M831.5 551.1L845.9 549.7M768.9 450.2L775.2 445.4M783.2 488.8L780.5 485.9M963.3 299.0L1017.4 299.3M585.8 393.7L571.4 407.0M715.6 503.2L723.6 510.8M375.3 487.8L401.5 487.0M528.1 447.3L543.9 460.6M1004.8 366.8L1018.8 380.1M387.9 527.9L416.5 528.0M797.9 512.7L793.5 516.1M851.2 622.8L865.7 636.1M846.0 480.3L851.1 477.4M703.4 511.9L694.0 507.4M808.3 515.5L812.1 512.4M683.0 298.9L793.6 298.8M486.5 353.1L501.0 366.0M810.9 474.9L806.4 473.2M544.4 434.1L556.8 447.1M612.8 393.8L599.7 407.3M964.7 491.2L993.8 484.8M416.5 528.0L446.0 529.0M791.6 485.9L788.6 483.0M761.4 476.4L753.9 474.4M766.9 487.1L763.1 491.7M733.6 465.2L725.4 458.7M779.3 513.2L770.8 509.9M727.5 516.2L719.3 519.5M790.0 456.7L799.0 454.9M793.6 298.8L963.3 299.0M764.5 514.2L762.4 509.5M981.2 498.3L998.3 507.4M879.0 622.6L865.7 636.1M870.9 500.2L880.7 493.9M778.0 394.8L781.4 381.9M870.4 570.0L848.0 579.6M375.5 568.9L402.7 570.2M1032.3 527.9L1018.3 541.2M473.6 662.9L486.5 676.7M774.0 483.8L767.7 483.6M789.3 479.6L784.7 477.4M665.8 485.9L649.5 486.4M792.4 470.8L798.5 466.4M772.2 513.3L764.5 514.2M658.9 502.2L671.9 499.3M318.6 649.8L305.1 663.0M584.8 555.8L598.5 568.5M318.4 542.1L304.6 555.5M360.8 366.1L388.7 367.0M459.4 596.4L486.7 594.9M787.1 570.7L804.8 569.0M769.9 549.7L781.0 553.4M694.0 507.4L675.0 506.2M786.9 474.0L785.1 470.9M656.4 439.4L658.4 429.1M733.8 397.7L713.7 393.1M768.0 622.9L795.0 622.3M802.6 485.3L807.1 487.4M723.6 510.8L714.0 510.5M499.9 663.1L486.5 676.7M847.7 463.2L856.6 467.1M967.4 479.0L944.3 473.4M883.8 381.5L852.7 384.0M803.9 469.6L798.5 466.4M683.3 676.7L697.0 690.2M711.2 540.4L699.8 548.1M647.4 535.7L661.9 543.6M966.0 462.5L971.4 448.5M851.9 502.5L850.9 507.9M744.6 457.0L754.4 454.2M927.0 554.2L953.3 560.0M798.8 501.6L797.9 506.1M871.9 425.2L892.0 415.9M861.2 451.0L864.4 458.8M585.7 583.1L571.5 596.0M1032.3 527.9L1033.5 555.7M864.9 366.7L883.8 381.5M851.3 300.0L836.7 312.6M838.6 491.4L833.6 489.8M900.0 440.0L905.1 429.7M785.3 519.7L793.5 516.1M528.1 447.3L556.8 447.1M884.7 510.5L897.0 506.7M832.4 481.7L837.8 479.5M791.5 503.8L797.9 506.1M598.9 459.8L596.7 442.4M1032.2 312.5L1019.5 326.3M831.7 522.9L826.7 528.1M757.6 394.7L753.1 381.7M569.7 542.6L603.9 546.8M790.4 524.1L790.0 529.3M815.2 440.7L806.8 442.3M887.0 504.1L893.7 497.9M761.0 443.9L753.2 439.6M319.7 326.9L305.2 340.3M1004.7 419.7L960.1 421.4M895.0 548.1L881.5 544.7M474.4 339.8L458.4 352.8M755.0 469.1L748.8 471.3M444.6 393.7L460.3 407.7M865.7 608.7L851.2 622.8M543.3 299.0L683.0 298.9M879.1 352.4L864.9 366.7M501.8 339.8L486.5 353.1M789.3 489.3L792.4 492.5M865.5 405.4L883.1 401.3M655.0 352.9L641.5 366.6M318.1 488.8L333.3 501.2M473.2 393.2L487.6 406.6M417.5 312.2L444.9 312.8M585.6 420.4L615.6 421.6M924.2 459.0L919.4 467.4M713.7 393.1L730.6 385.1M804.8 569.0L819.3 567.5M543.4 568.7L570.8 568.2M808.9 492.0L807.1 487.4M879.5 299.4L963.3 299.0M684.4 353.6L668.1 367.2M444.9 312.8L472.8 311.9M361.8 528.1L347.1 542.4M778.4 517.1L771.4 518.0M739.3 623.1L752.9 636.8M475.6 501.9L459.2 515.0M487.8 648.8L473.6 662.9M763.8 481.0L761.1 486.6M797.9 512.7L801.0 516.7M626.7 326.0L655.2 326.4M717.2 425.9L696.7 430.3M513.7 648.7L499.9 663.1M751.7 484.2L748.7 480.8M791.6 485.9L794.9 481.9M669.2 662.7L653.5 676.5M656.5 380.5L693.2 383.7M790.0 529.3L801.0 535.0M927.0 554.2L919.4 564.9M761.4 476.4L753.7 478.3M793.2 463.9L802.4 463.2M809.5 340.1L836.6 339.2M726.1 470.4L716.8 474.1M805.0 589.7L831.1 590.8M658.2 493.7L658.9 502.2M962.6 622.3L991.4 622.9M781.8 457.3L774.8 455.4M993.8 484.8L983.7 471.6M822.4 489.2L818.9 484.8M697.4 663.1L683.3 676.7M814.8 494.5L813.0 489.7M850.2 676.7L837.8 690.2M458.6 622.3L486.9 622.1M864.9 366.7L894.5 366.6M854.0 430.9L871.9 425.2M837.8 479.5L831.2 473.4M737.3 515.1L727.5 516.2M677.3 431.3L696.7 430.3M388.9 663.0L401.9 676.8M797.9 506.1L794.6 509.6M921.0 367.0L903.1 393.0M711.2 540.4L709.6 533.1M403.5 649.9L430.7 649.0M919.4 564.9L953.3 560.0M914.0 411.2L903.1 393.0M878.7 676.8L864.3 690.2M679.7 545.2L696.5 540.4M641.5 635.8L669.7 636.4M859.1 437.5L870.0 444.9M1017.4 299.3L1005.5 313.1M976.4 393.8L960.1 421.4M799.0 454.9L794.6 449.9M774.0 487.2L767.7 483.6M585.6 662.9L612.8 663.9M783.0 419.0L790.8 412.4M710.6 299.7L726.2 313.3M629.6 513.4L625.2 500.3M708.8 498.1L707.3 506.2M822.5 648.8L849.5 650.0M699.1 467.1L691.4 471.9M473.1 582.7L486.7 594.9M753.9 474.4L746.1 475.2M766.9 676.1L796.6 676.3M671.5 462.0L660.1 448.7M739.5 299.3L752.6 313.2M735.6 481.1L728.2 483.7M1032.7 609.2L1032.7 636.5M893.4 312.2L905.9 325.8M1003.9 663.7L1034.0 663.0M488.4 326.6L474.4 339.8M819.6 434.1L824.8 428.4M736.9 508.1L747.3 508.6M948.3 690.4L978.5 689.9M662.5 470.8L656.1 462.7M920.5 312.7L934.7 326.5M870.9 500.2L875.8 505.6M872.0 477.3L881.7 476.5M333.0 340.3L347.2 353.2M444.9 690.9L472.5 689.7M669.3 340.1L655.0 352.9M404.2 406.7L387.8 420.2M430.1 299.2L460.3 298.9M734.0 446.2L727.2 440.5M361.7 340.1L375.8 353.8M304.5 312.8L304.4 393.7M678.7 419.0L701.9 422.1M795.0 488.0L801.4 488.6M847.0 406.2L865.5 405.4M334.5 366.3L320.4 379.4M788.6 483.0L784.7 481.1M858.0 443.7L861.2 451.0M613.2 312.9L640.7 312.6M1033.8 474.5L993.8 484.8M1031.9 447.7L1018.5 462.2M733.8 397.7L721.8 404.9M677.1 554.1L679.7 545.2M907.5 622.8L921.3 636.9M780.5 485.9L774.0 483.8M858.0 443.7L859.1 437.5M1033.0 366.4L1033.3 421.4M542.0 352.8L556.5 366.3M735.6 481.1L735.3 485.9M764.6 429.6L756.6 433.8M513.3 487.9L501.4 501.2M856.0 461.4L856.6 467.1M638.6 480.2L649.5 486.4M794.2 326.8L822.1 325.4M935.2 622.8L947.5 636.2M781.7 540.2L794.8 538.8M333.3 501.2L345.9 514.9M346.1 649.5L361.4 663.4M892.3 608.4L891.8 593.8M852.7 491.5L858.2 487.7M822.2 622.5L847.7 600.1M375.8 649.6L388.9 663.0M976.6 533.8L966.7 545.8M789.2 468.0L792.4 470.8M760.9 450.1L761.0 443.9M904.3 470.2L893.6 474.1M870.3 454.7L864.4 458.8M768.3 498.3L769.3 501.9M1033.5 555.7L1019.4 568.5M865.6 496.6L870.1 492.4M375.0 542.3L360.5 554.4M556.7 663.0L569.7 676.2M766.6 474.6L761.4 476.4M804.1 476.2L806.4 473.2M784.7 477.4L781.5 473.8M320.4 379.4L348.0 380.1M792.4 500.4L791.5 503.8M941.0 524.4L921.4 534.7M318.1 568.8L304.0 582.0M445.0 366.6L472.4 366.2M663.7 512.2L682.3 513.1M740.4 677.2L754.3 689.9M810.3 534.1L805.2 528.4M779.0 480.6L777.9 476.8M822.8 413.7L808.5 409.6M753.7 478.3L746.1 475.2M750.1 465.2L755.0 459.2M802.4 463.2L794.8 459.8M991.2 379.7L1018.8 380.1M640.3 582.0L656.4 596.2M875.3 465.4L891.9 465.8M779.9 530.6L776.1 535.4M948.4 582.3L905.6 576.4M823.4 498.1L831.0 499.1M760.9 450.1L768.9 450.2M770.8 509.9L762.4 509.5M908.8 299.7L920.5 312.7M487.8 434.5L515.6 434.6M332.5 420.3L360.4 420.6M919.4 564.9L905.6 576.4M695.3 413.4L703.8 402.2M346.3 326.3L361.7 340.1M472.9 474.5L501.2 474.7M639.6 451.5L620.3 446.3M756.1 497.3L755.9 501.9M814.9 446.2L829.3 445.8M775.0 500.4L769.3 501.9M528.8 340.7L542.0 352.8M837.8 487.4L844.6 489.3M761.1 536.3L759.9 542.6M639.2 690.5L669.7 689.8M1005.1 393.7L1019.1 407.3M836.6 543.5L831.5 551.1M719.0 498.2L715.6 503.2M785.8 598.9L819.7 600.5M804.9 549.6L822.7 544.0M333.3 501.2L360.7 501.0M850.9 507.9L846.6 511.4M769.3 501.9L778.3 504.4M934.0 352.9L950.3 366.7M556.8 339.3L571.7 353.0M360.1 447.2L348.2 460.7M710.1 353.3L724.8 367.2M817.9 519.3L813.7 524.4M883.1 401.3L914.0 411.2M665.8 485.9L658.2 493.7M819.7 600.5L831.1 590.8M808.4 540.4L810.3 534.1M922.7 609.3L907.5 622.8M876.4 488.2L888.1 486.6M758.3 530.6L755.7 524.9M962.7 353.4L977.8 367.0M836.8 502.0L840.3 507.9M793.3 477.3L793.0 473.9M811.9 504.6L817.5 508.8M375.3 487.8L388.8 501.7M1034.0 663.0L1031.4 690.3M557.0 555.4L584.8 555.8M708.8 498.1L710.7 489.5M708.4 517.9L716.4 526.4M360.1 636.0L346.1 649.5M704.0 526.4L709.6 533.1M1005.5 313.1L1032.2 312.5M796.6 485.2L800.3 483.0M746.7 521.1L736.4 522.0M679.2 470.2L671.0 477.0M416.5 528.0L402.3 542.2M990.6 406.7L960.1 421.4M725.7 608.9L737.8 596.1M781.0 553.4L784.4 560.8M750.6 537.7L747.3 531.8M678.5 491.7L658.2 493.7M691.8 438.3L712.8 437.8M822.3 537.6L810.3 534.1M751.5 490.8L746.3 487.0M828.2 518.9L831.7 522.9M737.8 596.1L731.9 583.1M858.0 443.7L848.1 443.1M963.2 522.3L988.6 522.3M514.0 675.9L499.2 690.5M772.8 475.6L767.7 477.9M753.0 663.0L740.4 677.2M891.4 530.0L907.7 530.1M417.4 582.5L402.5 595.7M831.1 590.8L848.0 579.6M785.6 427.1L783.0 419.0M839.5 483.6L837.8 487.4M459.8 649.7L487.8 648.8M588.7 532.2L603.9 546.8M683.0 298.9L668.3 312.8M935.4 676.6L921.4 690.4M768.5 521.9L765.2 527.2M697.8 636.1L723.8 637.0M814.9 446.2L824.1 450.7M929.8 493.8L926.9 485.3M747.3 531.8L733.6 528.0M642.2 663.4L669.2 662.7M865.1 311.9L851.8 326.0M866.8 488.2L876.4 488.2M769.8 470.4L760.2 472.7M362.6 313.0L346.3 326.3M799.0 473.5L798.2 470.1M905.6 576.4L891.8 593.8M908.9 455.3L903.9 463.5M881.4 455.0L892.0 459.1M793.2 497.2L786.4 498.6M823.9 677.4L850.2 676.7M1020.7 596.3L1005.0 610.2M837.6 498.2L845.1 499.2M716.8 474.1L705.9 473.2M544.1 326.1L528.8 340.7M360.8 366.1L374.8 379.8M1004.8 366.8L991.2 379.7M761.0 443.9L768.6 435.9M387.8 420.2L375.2 435.2M842.4 428.2L833.9 421.4M1005.5 689.4L1031.4 690.3M831.5 551.1L836.7 558.7M854.3 456.1L839.4 459.8M764.5 514.2L762.6 518.2M725.5 340.0L710.1 353.3M809.7 508.3L812.1 512.4M460.3 407.7L445.3 419.8M1033.0 366.4L1018.8 380.1M829.7 464.3L836.7 469.7M783.4 467.0L789.2 468.0M658.4 429.1L647.8 418.1M757.3 587.1L747.5 572.4M374.5 622.8L360.1 636.0M781.5 525.2L779.9 530.6M388.7 367.0L374.8 379.8M670.7 407.7L632.2 407.6M763.1 491.7L763.2 495.7M557.2 636.9L542.3 650.1M786.4 498.6L781.7 501.1M458.5 326.7L488.4 326.6M752.9 636.8L767.9 649.5M784.0 510.4L779.3 513.2M868.5 393.0L852.7 384.0M678.7 419.0L647.8 418.1M991.4 622.9L1004.7 636.4M1005.0 610.2L1032.7 609.2M839.7 449.4L843.3 454.1M768.4 557.2L754.2 556.5M900.0 440.0L894.4 451.9M802.7 493.0L808.9 492.0M641.7 339.4L669.3 340.1M305.5 528.1L318.4 542.1M785.3 519.7L781.5 525.2M859.3 546.6L867.1 554.3M348.0 568.8L361.5 581.8M430.7 649.0L445.3 663.6M430.8 542.0L445.7 555.5M859.1 437.5L869.1 433.0M795.8 520.1L805.2 520.6M781.5 473.8L785.1 470.9M757.3 464.4L750.1 465.2M647.4 535.7L621.0 536.4M822.0 353.4L851.1 354.5M883.8 381.5L903.1 393.0M725.2 544.3L742.4 553.4M717.5 552.2L699.8 548.1M691.3 573.5L686.2 594.8M374.8 379.8L401.5 380.1M845.1 499.2L843.5 503.9M789.4 507.7L794.6 509.6M375.5 568.9L361.5 581.8M501.0 366.0L529.1 366.8M763.3 420.2L748.3 416.8M788.8 441.3L776.7 440.2M655.1 648.7L682.7 650.3M885.2 557.2L897.3 565.5M792.4 470.8L793.0 473.9M347.5 407.4L375.2 407.5M806.8 442.3L804.2 446.8M304.4 393.7L332.8 393.3M976.6 581.3L963.0 595.0M791.5 503.8L784.3 504.3M842.4 428.2L824.8 428.4M836.2 662.4L864.3 663.4M963.3 299.0L976.2 312.9M768.5 521.9L771.4 518.0M905.0 448.5L908.9 455.3M544.4 434.1L571.8 433.8M584.8 555.8L622.4 557.8M887.0 504.1L897.0 506.7M774.6 467.1L772.8 463.6M919.4 467.4L904.3 470.2M755.0 469.1L757.3 464.4M1018.5 462.2L983.7 471.6M991.1 299.3L1005.5 313.1M403.8 326.0L417.2 339.9M528.6 474.2L557.6 473.8M756.3 549.0L742.4 553.4M662.5 470.8L671.0 477.0M755.9 501.9L746.8 504.0M789.3 489.3L786.7 486.2M777.7 489.7L769.9 490.3M820.4 578.8L848.0 579.6M473.2 393.2L460.3 407.7M432.8 326.4L445.8 339.6M584.4 339.7L598.9 353.6M784.3 504.3L776.8 508.2M318.9 407.6L332.5 420.3M417.6 449.0L431.5 461.1M804.5 505.7L811.9 504.6M1019.1 407.3L1033.3 421.4M843.7 495.4L855.2 496.1M740.5 542.2L742.4 553.4M837.8 479.5L846.0 480.3M786.9 474.0L781.5 473.8M432.0 433.9L445.6 447.9M614.7 339.9L627.7 353.1M347.5 407.4L360.4 420.6M785.0 515.2L785.3 519.7M305.5 528.1L334.1 528.4M727.2 440.5L729.2 431.1M779.2 405.6L757.6 394.7M854.4 527.2L853.0 522.0M583.9 367.6L571.0 380.2M778.0 394.8L794.6 400.9M781.5 473.8L777.9 476.8M808.3 478.0L811.0 481.2M811.0 481.2L819.8 480.3M1018.5 462.2L993.8 484.8M1019.6 353.0L1033.0 366.4M445.6 447.9L431.5 461.1M610.6 470.4L628.0 471.8M810.9 474.9L811.1 471.4M768.0 622.9L752.9 636.8M1003.7 555.8L1033.5 555.7M473.2 528.0L485.4 542.0M936.9 464.8L966.0 462.5M446.2 636.5L459.8 649.7M784.7 481.1L779.0 480.6M305.8 447.9L304.3 474.1M769.8 470.4L766.6 474.6M487.5 515.4L500.9 528.1M459.0 487.9L475.6 501.9M947.5 636.2L934.4 650.0M805.0 589.7L819.7 600.5M500.9 528.1L513.8 542.4M347.3 595.9L376.0 596.2M851.6 532.9L850.5 541.4M790.8 412.4L779.2 405.6M678.7 419.0L696.7 430.3M626.8 649.8L642.2 663.4M854.0 430.9L851.8 422.5M729.1 474.7L716.8 474.1M742.1 468.5L742.0 462.2M677.3 431.3L678.7 419.0M677.3 453.0L671.5 462.0M388.9 663.0L375.2 677.1M569.7 676.2L583.5 690.7M870.9 500.2L870.1 492.4M847.0 406.2L849.8 395.3M543.4 568.7L529.9 581.9M809.3 662.4L823.9 677.4M724.4 561.7L701.9 558.2M767.4 411.0L748.3 416.8M713.7 393.1L703.8 402.2M584.8 555.8L603.9 546.8M675.0 506.2L682.3 513.1M834.0 493.9L837.6 498.2M947.6 534.7L963.2 522.3M304.4 393.7L304.3 474.1M629.6 513.4L609.1 508.0M990.7 677.6L1005.5 689.4M622.4 557.8L648.8 567.5M761.4 476.4L760.2 472.7M769.7 539.8L769.9 549.7M757.3 464.4L755.0 459.2M1033.8 474.5L1012.5 494.3M473.1 582.7L459.4 596.4M895.8 512.8L909.3 518.8M871.9 425.2L861.5 415.6M713.7 597.0L686.2 594.8M764.5 514.2L770.8 509.9M804.7 512.1L809.7 508.3M739.5 299.3L726.2 313.3M836.7 558.7L851.5 558.1M687.5 477.5L678.4 483.3M430.0 596.5L415.7 609.4M793.2 463.9L788.0 460.4M626.6 595.6L639.6 609.4M702.0 459.5L699.1 467.1M776.8 508.2L779.3 513.2M855.2 496.1L852.7 491.5M920.6 502.4L929.8 493.8M677.3 453.0L684.9 461.5M417.6 449.0L445.6 447.9M542.3 650.1L571.5 649.6M727.2 440.5L718.6 446.1M872.0 477.3L874.8 471.6M920.5 312.7L905.9 325.8M746.4 515.1L746.7 521.1M728.2 571.5L712.7 580.0M417.5 312.2L403.8 326.0M599.1 325.9L614.7 339.9M734.0 446.2L743.5 442.7M746.8 504.0L747.3 508.6M429.7 488.1L459.0 487.9M779.2 405.6L778.0 394.8M785.3 519.7L795.8 520.1M809.9 501.4L811.9 504.6M361.7 340.1L347.2 353.2M967.4 479.0L947.5 482.8M807.0 465.6L808.3 461.1M768.2 493.6L768.3 498.3M515.1 407.1L529.7 420.6M769.9 490.3L768.2 493.6M473.2 528.0L500.9 528.1M701.9 558.2L672.5 567.2M647.8 418.1L632.2 407.6M359.7 393.3L375.2 407.5M870.0 444.9L869.1 433.0M304.5 312.8L333.5 313.0M828.5 394.7L849.8 395.3M846.0 480.3L846.7 484.5M445.0 366.6L457.8 380.9M726.1 470.4L729.1 474.7M348.0 380.1L332.8 393.3M935.2 622.8L921.3 636.9M500.9 528.1L530.2 528.6M703.6 443.2L687.0 446.6M781.7 540.2L782.7 546.2M431.1 568.6L458.6 569.0M772.8 463.6L776.4 460.0M763.1 491.7L761.1 486.6M333.5 313.0L362.6 313.0M768.6 435.9L756.6 433.8M626.3 622.5L641.5 635.8M851.1 477.4L863.7 473.4M684.9 461.5L671.5 462.0M962.6 622.3L947.5 636.2M360.7 501.0L345.9 514.9M375.8 649.6L361.4 663.4M458.6 569.0L487.3 569.2M924.2 459.0L936.9 464.8M516.2 595.8L543.1 595.8M703.4 511.9L707.3 506.2M807.9 494.9L804.4 499.2M860.9 491.9L858.2 487.7M694.0 507.4L696.6 518.3M514.0 326.5L544.1 326.1M388.8 501.7L374.3 515.4M610.6 470.4L591.6 481.5M403.5 649.9L388.9 663.0M556.7 663.0L543.4 676.5M543.1 595.8L571.5 596.0M783.0 419.0L801.7 417.3M319.0 623.2L346.2 622.8M761.4 499.6L769.3 501.9M698.4 339.5L725.5 340.0M1004.7 419.7L1001.1 445.2M804.9 549.6L808.4 540.4M585.6 662.9L569.7 676.2M663.7 512.2L670.2 520.4M346.2 622.8L374.5 622.8M964.7 491.2L967.4 479.0M701.9 558.2L691.3 573.5M485.4 542.0L500.7 555.6M501.6 635.7L529.3 636.5M789.4 507.7L797.9 506.1M869.1 433.0L885.2 434.1M879.1 352.4L906.5 353.3M742.4 553.4L724.4 561.7M571.9 461.3L598.9 459.8M661.9 543.6L634.2 545.6M803.9 451.7L814.8 451.9M781.5 525.2L790.0 529.3M848.0 579.6L862.8 590.4M778.1 432.5L776.7 440.2M766.9 676.1L754.3 689.9M726.8 523.8L716.4 526.4M431.1 568.6L444.3 582.0M529.3 636.5L557.2 636.9M921.4 534.7L896.3 538.5M571.9 461.3L591.6 481.5M666.8 530.3L680.6 536.4M885.2 434.1L900.0 440.0M797.9 506.1L802.4 508.7M658.9 502.2L675.0 506.2M909.9 508.6L920.6 502.4M710.7 649.6L738.5 649.4M824.5 508.7L822.8 505.3M698.4 366.3L693.2 383.7M909.3 518.8L922.6 524.0M755.0 459.2L744.6 457.0M897.3 565.5L905.6 576.4M670.7 407.7L703.8 402.2M893.3 662.8L921.2 662.8M837.8 487.4L838.6 491.4M430.6 406.6L460.3 407.7M921.2 662.8L947.8 662.5M706.8 451.3L718.6 446.1M694.6 496.5L685.2 501.2M333.7 689.7L360.7 690.2M724.8 367.2L693.2 383.7M556.8 339.3L542.0 352.8M836.8 502.0L845.1 499.2M1032.6 392.1L1019.1 407.3M771.4 518.0L762.6 518.2M320.3 299.0L347.7 298.8M838.5 512.4L831.6 509.8M725.7 608.9L739.3 623.1M806.4 482.4L814.6 483.3M794.2 326.8L780.8 338.8M620.3 446.3L596.7 442.4M808.4 540.4L822.7 544.0M963.0 595.0L977.9 608.3M990.1 325.9L1005.9 339.9M948.3 690.4L1031.4 690.3M758.3 530.6L747.3 531.8M360.7 690.2L387.6 689.9M962.7 353.4L950.3 366.7M792.4 492.5L786.0 492.3M739.6 353.5L724.8 367.2M846.0 480.3L853.5 482.4M444.9 690.9L528.7 691.1M501.7 312.7L528.6 312.8M790.0 529.3L786.4 535.0M950.3 366.7L962.2 380.7M472.3 447.3L486.4 460.6M729.1 474.7L724.1 478.3M332.5 420.3L347.3 434.5M852.7 384.0L836.8 372.5M907.5 555.2L885.2 557.2M432.2 353.9L445.0 366.6M786.0 492.3L783.2 488.8M528.7 691.1L837.8 690.2M795.0 488.0L789.3 489.3M557.3 393.6L543.1 407.1M528.6 312.8L556.8 313.1M679.2 470.2L662.5 470.8M788.6 483.0L794.9 481.9M500.1 447.3L515.6 461.4M683.9 326.7L709.7 326.5M822.2 622.5L838.1 635.5M858.2 487.7L851.2 487.7M734.0 493.8L737.1 498.0M880.7 493.9L890.5 492.7M822.3 537.6L822.7 544.0M790.8 412.4L808.5 409.6M709.7 326.5L739.7 326.5M905.1 429.7L934.9 437.2M866.2 339.9L893.8 340.4M1004.7 636.4L1019.7 649.1M737.8 596.1L713.7 597.0M530.2 528.6L541.4 541.4M848.0 579.6L879.4 581.2M778.1 432.5L774.6 424.3M801.4 488.6L802.6 485.3M814.8 494.5L813.0 497.5M1032.6 392.1L1033.3 421.4M542.3 487.5L590.0 496.2M893.8 340.4L920.6 340.2M306.2 366.8L334.5 366.3M445.3 663.6L459.3 676.9M557.4 528.2L569.7 542.6M808.3 461.1L801.9 458.9M682.7 650.3L697.4 663.1M557.0 555.4L570.8 568.2M742.8 483.0L735.6 481.1M334.5 366.3L360.8 366.1M864.4 458.8L881.8 460.8M792.4 550.3L796.5 544.6M627.8 676.9L639.2 690.5M646.2 469.7L628.0 471.8M909.3 518.8L907.7 530.1M864.3 663.4L878.7 676.8M670.7 407.7L647.8 418.1M879.6 648.8L907.7 649.9M801.5 425.0L783.0 419.0M748.8 471.3L742.1 468.5M846.7 484.5L851.2 487.7M626.3 380.3L656.5 380.5M529.9 581.9L543.1 595.8M856.0 461.4L866.9 468.4M866.8 488.2L869.4 482.4M703.6 443.2L718.6 446.1M806.4 436.6L819.6 434.1M793.6 298.8L808.0 312.7M907.5 555.2L897.3 565.5M750.1 465.2L742.0 462.2M729.0 504.1L736.9 508.1M557.9 582.4L571.5 596.0M646.2 469.7L639.6 451.5M887.4 425.4L905.1 429.7M716.8 474.1L724.1 478.3M671.7 580.4L686.2 594.8M764.6 454.7L754.4 454.2M814.0 478.0L811.0 481.2M823.8 483.2L825.6 486.7M472.3 447.3L500.1 447.3M779.3 513.2L772.2 513.3M528.7 691.1L557.2 690.1M500.1 447.3L528.1 447.3M788.7 435.8L785.6 427.1M687.5 477.5L679.2 470.2M487.2 488.3L513.3 487.9M725.4 458.7L717.5 462.7M761.1 536.3L758.3 530.6M664.5 394.8L632.2 407.6M1005.5 313.1L990.1 325.9M695.3 531.7L696.5 540.4M415.7 609.4L430.2 623.3M445.8 339.6L458.4 352.8M633.1 526.2L647.4 535.7M753.9 474.4L748.8 471.3M768.5 353.9L753.9 367.7M829.3 445.8L837.7 442.3M662.5 470.8L654.3 477.8M829.6 468.9L836.7 469.7M513.3 487.9L542.3 487.5M401.5 380.1L417.5 394.2M304.0 582.0L306.5 608.7M571.4 407.0L585.6 420.4M530.2 528.6L557.4 528.2M828.2 518.9L836.1 518.5M993.8 484.8L967.4 479.0M627.7 353.1L641.5 366.6M722.9 451.9L734.0 446.2M868.5 393.0L883.8 381.5M890.4 479.9L893.6 474.1M501.0 366.0L514.4 379.9M991.4 622.9L976.4 636.7M795.8 520.1L798.6 525.6M939.6 501.4L929.8 493.8M417.8 501.5L431.6 515.3M818.7 558.5L819.3 567.5M487.3 569.2L515.1 568.2M802.7 493.0L797.3 494.2M853.5 482.4L851.1 477.4M304.2 501.2L304.6 555.5M900.7 491.0L910.4 485.1M851.6 532.9L862.3 535.7M868.5 393.0L903.1 393.0M778.0 394.8L757.6 394.7M1018.8 622.5L1004.7 636.4M807.9 494.9L813.0 497.5M430.7 649.0L417.2 662.9M515.1 568.2L543.4 568.7M430.8 542.0L417.3 555.4M571.5 596.0L597.7 596.3M656.4 439.4L636.5 429.2M780.5 485.9L779.0 480.6M736.9 508.1L723.6 510.8M804.1 476.2L799.1 476.5M722.9 451.9L718.6 446.1M817.0 487.8L822.4 489.2M728.2 483.7L719.2 487.8M459.8 649.7L445.3 663.6M801.0 516.7L805.2 520.6M597.7 596.3L626.6 595.6M779.6 470.1L774.6 467.1M717.5 552.2L724.4 561.7M784.3 504.3L784.0 510.4M740.3 489.6L746.3 487.0M914.0 411.2L927.0 401.1M803.7 479.9L811.0 481.2M828.2 518.9L822.5 523.4M642.2 663.4L627.8 676.9M403.6 623.2L430.2 623.3M831.7 513.9L820.9 512.2M797.9 512.7L802.4 508.7M826.7 528.1L819.0 531.2M823.9 677.4L806.9 689.7M387.8 420.2L417.5 420.6M487.3 569.2L500.3 581.8M586.0 635.8L613.1 635.8M919.3 422.7L939.3 415.8M755.0 459.2L742.0 462.2M650.1 554.1L677.1 554.1M748.6 406.0L757.6 394.7M736.0 457.2L744.6 457.0M785.6 427.1L774.6 424.3M800.2 577.3L820.4 578.8M919.4 467.4L917.6 479.4M786.9 474.0L792.4 470.8M991.1 299.3L976.2 312.9M823.5 467.1L829.7 464.3M698.9 477.6L693.5 483.9M705.9 473.2L699.1 467.1M829.3 445.8L832.2 453.0M790.0 529.3L805.2 528.4M432.8 326.4L417.2 339.9M756.9 492.3L749.0 495.1M900.7 491.0L890.5 492.7M828.0 495.2L827.1 491.5M758.3 530.6L750.6 537.7M850.5 541.4L845.9 549.7M935.7 595.6L922.7 609.3M1019.1 407.3L1004.7 419.7M884.7 510.5L887.0 504.1M417.8 501.5L446.7 501.4M458.5 326.7L445.8 339.6M614.7 339.9L598.9 353.6M347.5 407.4L332.5 420.3M375.6 299.4L400.9 299.4M831.7 513.9L823.4 515.8M703.4 511.9L696.6 518.3M830.1 485.1L825.6 486.7M697.0 690.2L837.8 690.2M1005.0 610.2L991.4 622.9M919.4 467.4L927.0 474.5M839.5 483.6L846.0 480.3M430.8 542.0L459.1 542.3M716.9 493.3L710.7 489.5M641.7 339.4L627.7 353.1M1019.6 353.0L1004.8 366.8M780.5 485.9L784.7 481.1M400.9 299.4L430.1 299.2M556.8 313.1L584.0 312.5M446.2 636.5L430.7 649.0M741.9 494.5L740.3 489.6M304.0 582.0L331.5 582.9M806.4 473.2L811.1 471.4M826.2 439.9L815.2 440.7M459.0 487.9L446.7 501.4M584.0 312.5L613.2 312.9M1033.6 501.4L1012.5 494.3M813.0 497.5L820.6 494.8M556.8 447.1L571.9 461.3M879.0 622.6L892.9 636.2M739.7 326.5L767.8 326.1M1033.0 366.4L1033.8 474.5M838.0 527.9L854.4 527.2M799.1 476.5L799.0 473.5M736.4 522.0L726.8 523.8M626.8 649.8L612.8 663.9M703.6 443.2L712.8 437.8M767.8 326.1L794.2 326.8M304.2 501.2L319.4 514.8M318.6 649.8L333.6 663.2M920.6 340.2L948.8 339.8M318.4 542.1L333.3 555.0M750.1 450.0L743.5 442.7M655.1 648.7L642.2 663.4M839.7 449.4L851.1 449.3M809.3 662.4L796.6 676.3M306.5 608.7L334.3 608.8M1032.9 339.7L1033.8 474.5M776.8 508.2L778.3 504.4M781.7 501.1L784.3 504.3M570.7 622.7L597.8 622.7M719.3 519.5L716.4 526.4M842.4 428.2L854.0 430.9M802.7 493.0L803.3 495.9M733.8 397.7L730.6 385.1M783.2 488.8L780.6 492.1M934.9 437.2L970.1 436.2M948.8 339.8L976.9 339.8M947.6 534.7L946.7 546.0M715.6 503.2L714.0 510.5M796.5 544.6L808.4 540.4M499.9 663.1L514.0 675.9M709.1 479.0L724.1 478.3M836.2 662.4L823.9 677.4M990.7 677.6L978.5 689.9M887.5 517.4L877.1 521.9M597.8 622.7L626.3 622.5M830.4 533.7L836.6 543.5M647.4 535.7L634.2 545.6M752.1 426.0L748.3 416.8M1003.7 555.8L991.6 568.8M804.7 512.1L808.3 515.5M388.7 367.0L418.2 366.5M528.9 663.6L543.4 676.5M764.6 429.6L768.6 435.9M1018.3 676.4L1005.5 689.4M895.0 548.1L907.5 555.2M781.3 636.5L810.5 636.3M879.4 581.2L897.3 565.5M677.3 453.0L687.0 446.6M935.4 381.4L962.2 380.7M947.5 482.8L927.0 474.5M711.3 676.5L725.7 690.1M585.7 583.1L597.7 596.3M864.9 366.7L852.7 384.0M725.1 662.9L753.0 663.0M753.1 381.7L730.6 385.1M838.5 512.4L831.7 513.9M740.5 542.2L725.2 544.3M748.3 416.8L748.6 406.0M851.3 300.0L865.1 311.9M961.7 649.1L989.8 649.2M728.2 571.5L709.6 568.5M599.1 325.9L584.4 339.7M751.7 484.2L746.3 487.0M678.5 491.7L685.2 501.2M785.3 519.7L778.4 517.1M769.3 501.9L769.6 505.5M851.6 532.9L854.4 527.2M756.3 549.0L754.2 556.5M613.6 582.6L626.6 595.6M808.9 492.0L804.7 490.6M879.5 299.4L893.4 312.2M790.0 456.7L787.5 452.5M831.7 522.9L838.0 527.9M401.9 676.8L430.4 676.7M793.5 516.1L795.8 520.1M794.6 400.9L809.6 394.2M934.9 437.2L924.9 449.3M860.5 479.4L863.7 473.4M797.9 512.7L804.7 512.1M865.7 608.7L847.7 600.1M872.2 513.8L884.7 510.5M319.7 326.9L333.0 340.3M755.0 469.1L750.1 465.2M1033.5 555.7L1032.7 609.2M583.5 690.7L612.7 690.0M768.5 521.9L762.6 518.2M445.0 366.6L430.5 380.5M795.0 622.3L764.3 604.7M570.9 300.0L599.8 299.4M865.7 608.7L879.0 622.6M704.9 485.1L710.7 489.5M501.8 339.8L513.7 353.3M879.1 352.4L894.5 366.6M892.0 415.9L883.1 401.3M976.4 393.8L990.6 406.7M742.4 553.4L754.2 556.5M472.4 366.2L457.8 380.9M734.3 451.9L734.0 446.2M789.3 489.3L786.0 492.3M752.6 313.2L779.8 312.1M892.3 608.4L907.5 622.8M304.2 501.2L333.3 501.2M457.8 380.9L473.2 393.2M305.6 636.4L318.6 649.8M431.5 461.1L416.5 474.8M924.2 459.0L941.6 456.5M903.9 463.5L891.9 465.8M817.9 519.3L822.5 523.4M786.7 486.2L783.2 488.8M684.4 353.6L698.4 366.3M775.2 445.4L785.7 447.7M858.2 487.7L853.5 482.4M785.0 515.2L778.4 517.1M905.0 448.5L894.4 451.9M898.2 484.7L890.4 479.9M934.7 326.5L961.2 326.7M921.4 534.7L912.7 546.1M334.2 635.6L346.1 649.5M781.4 381.9L753.9 367.7M487.8 648.8L499.9 663.1M759.9 542.6L769.7 539.8M859.3 546.6L851.5 558.1M475.6 501.9L487.5 515.4M458.9 461.6L445.1 474.3M818.3 491.7L827.1 491.5M805.2 528.4L813.7 524.4M698.9 477.6L704.9 485.1M756.5 513.3L746.4 515.1M810.9 474.9L814.0 478.0M934.9 437.2L919.3 422.7M375.8 353.8L402.1 352.9M513.7 648.7L528.9 663.6M501.4 501.2L514.4 515.2M485.4 542.0L472.5 555.5M789.4 507.7L784.3 504.3M724.1 478.3L735.6 481.1M700.8 491.4L689.4 491.3M786.4 498.6L777.8 497.7M402.1 352.9L432.2 353.9M304.3 474.1L304.2 501.2M431.1 568.6L417.4 582.5M513.8 542.4L500.7 555.6M697.4 663.1L711.3 676.5M670.2 520.4L688.8 524.0M843.7 495.4L845.1 499.2M838.5 512.4L845.3 517.1M910.4 485.1L917.6 479.4M719.2 487.8L710.7 489.5M767.4 411.0L757.6 394.7M733.6 528.0L721.8 536.8M458.6 569.0L444.3 582.0M583.9 367.6L611.9 367.5M878.7 676.8L891.3 689.9M768.6 435.9L753.2 439.6M846.7 484.5L853.5 482.4M891.4 530.0L873.3 534.6M390.2 394.6L417.5 394.2M319.5 595.5L306.5 608.7M907.2 677.4L921.4 690.4M840.4 536.3L836.6 543.5M838.0 527.9L840.4 536.3M807.0 465.6L812.8 468.0M629.6 513.4L610.6 521.6M907.7 530.1L922.6 524.0M976.6 533.8L988.6 522.3M472.4 420.4L501.0 420.4M852.7 491.5L851.2 487.7M771.4 518.0L764.5 514.2M838.5 512.4L846.6 511.4M625.2 500.3L612.6 482.8M488.4 326.6L501.8 339.8M734.0 493.8L725.9 494.5M726.1 470.4L715.4 469.0M963.0 595.0L949.2 608.9M761.1 486.6L757.3 481.0M431.5 461.1L458.9 461.6M333.5 313.0L319.7 326.9M444.9 690.9L499.2 690.5M669.3 340.1L684.4 353.6M950.3 366.7L935.4 381.4M404.2 406.7L417.5 420.6M756.1 497.3L761.4 499.6M804.5 505.7L804.8 502.6M332.5 420.3L320.3 434.1M991.0 596.3L977.9 608.3M907.5 555.2L912.7 546.1M475.6 501.9L501.4 501.2M795.0 488.0L797.9 490.8M514.0 326.5L501.8 339.8M334.5 366.3L348.0 380.1M788.6 483.0L789.3 479.6M977.8 367.0L962.2 380.7M500.1 447.3L486.4 460.6M360.4 420.6L347.3 434.5M794.6 353.2L797.3 368.6M822.4 489.2L825.6 486.7M319.0 623.2L305.6 636.4M701.9 558.2L709.6 568.5M485.4 542.0L513.8 542.4M791.6 485.9L789.3 489.3M698.4 339.5L684.4 353.6M430.6 406.6L417.5 420.6M460.3 298.9L486.1 300.1M513.3 487.9L526.7 501.4M756.9 492.3L755.5 487.6M781.0 553.4L768.4 557.2M319.9 461.7L332.8 474.6M789.7 511.9L793.5 516.1M501.6 635.7L487.8 648.8M644.7 498.6L658.9 502.2M361.5 581.8L389.0 582.7M793.3 477.3L786.9 474.0M761.8 504.1L762.4 509.5M557.4 528.2L541.4 541.4M749.9 499.3L746.8 504.0M746.1 475.2L748.7 480.8M778.1 432.5L764.6 429.6M529.3 636.5L513.7 648.7M831.6 509.8L820.9 512.2M682.7 650.3L669.2 662.7M904.3 470.2L891.9 465.8M760.9 450.1L754.4 454.2M977.9 608.3L1005.0 610.2M375.0 542.3L388.3 554.6M710.7 649.6L697.4 663.1M864.3 663.4L850.2 676.7M360.8 609.6L389.5 609.4M768.5 353.9L794.6 353.2M798.5 466.4L793.2 463.9M806.4 482.4L811.0 481.2M318.1 568.8L331.5 582.9M416.7 637.0L446.2 636.5M663.7 512.2L652.6 519.9M759.9 542.6L740.5 542.2M893.3 662.8L878.7 676.8M693.5 483.9L700.8 491.4M654.9 622.8L681.7 622.0M750.1 465.2L742.1 468.5M661.9 543.6L650.1 554.1M557.9 582.4L543.1 595.8M864.4 458.8L866.9 468.4M1018.5 462.2L1001.1 445.2M824.8 428.4L816.9 421.2M784.4 560.8L787.1 570.7M858.2 487.7L869.4 482.4M599.1 650.0L626.8 649.8M644.7 498.6L648.9 510.6M671.7 580.4L691.3 573.5M838.1 635.5L865.7 636.1M807.1 487.4L813.0 489.7M320.3 299.0L304.5 312.8M877.1 521.9L864.2 522.1M656.4 439.4L660.1 448.7M948.4 582.3L963.0 595.0M851.5 558.1L870.4 570.0M781.2 663.7L809.3 662.4M733.5 415.0L717.2 425.9M756.5 513.3L754.0 518.0M783.0 419.0L767.4 411.0M817.9 519.3L805.2 520.6M501.7 312.7L488.4 326.6M638.6 480.2L628.0 471.8M769.7 539.8L781.7 540.2M963.9 676.4L990.7 677.6M415.7 609.4L403.6 623.2M922.6 524.0L941.0 524.4M934.7 299.7L948.1 312.3M755.7 524.9L743.7 526.7M851.9 502.5L859.3 506.4M459.3 676.9L486.5 676.7M683.9 326.7L669.3 340.1M639.2 690.5L697.0 690.2M761.1 536.3L750.6 537.7M654.3 477.8L638.6 480.2M836.6 543.5L845.9 549.7M401.5 380.1L390.2 394.6M885.2 557.2L867.1 554.3M859.3 546.6L869.8 542.3M749.0 495.1L749.9 499.3M373.9 325.7L389.4 340.0M304.4 393.7L304.0 582.0M776.1 535.4L769.7 539.8M866.2 339.9L851.1 354.5M501.0 366.0L487.2 380.1M430.5 380.5L417.5 394.2M599.7 407.3L585.6 420.4M627.0 299.4L654.5 300.3M830.4 503.7L822.8 505.3M922.7 609.3L935.2 622.8M829.3 445.8L839.7 449.4M529.1 366.8L514.4 379.9M990.6 406.7L1004.7 419.7M1001.1 445.2L970.1 436.2M808.0 312.7L836.7 312.6M949.2 608.9L962.6 622.3M747.3 508.6L737.3 515.1M729.2 431.1L712.8 437.8M360.1 636.0L375.8 649.6M486.4 460.6L472.9 474.5M795.0 488.0L792.4 492.5M743.5 442.7L753.2 439.6M830.3 434.5L842.4 428.2M742.8 483.0L735.3 485.9M766.9 487.1L769.9 490.3M775.2 445.4L788.8 441.3M869.1 433.0L854.0 430.9M388.5 636.5L403.5 649.9M861.2 451.0L870.0 444.9M913.2 491.5L920.6 502.4M906.3 501.3L913.2 491.5M879.6 648.8L864.3 663.4M780.8 338.8L809.5 340.1M892.0 459.1L903.9 463.5M905.1 429.7L892.0 415.9M828.2 518.9L817.9 519.3M557.1 502.3L570.8 514.6M571.5 649.6L585.6 662.9M733.6 528.0L736.7 535.4M779.9 530.6L769.4 531.6M870.4 570.0L897.3 565.5M962.7 353.4L990.9 352.9M814.8 494.5L820.6 494.8M458.4 352.8L486.5 353.1M487.3 569.2L473.1 582.7M569.7 542.6L557.0 555.4M753.0 663.0L766.9 676.1M919.3 422.7L914.0 411.2M850.5 541.4L859.3 546.6M514.4 379.9L542.1 380.0M807.0 465.6L802.4 463.2M744.8 432.3L736.8 425.5M515.1 568.2L500.3 581.8M641.5 366.6L668.1 367.2M935.4 676.6L948.3 690.4M946.7 546.0L927.0 554.2M487.6 406.6L515.1 407.1M709.1 479.0L720.5 482.7M717.5 462.7L726.1 470.4M829.7 464.3L840.1 465.2M444.6 393.7L473.2 393.2M376.0 596.2L360.8 609.6M733.5 415.0L721.8 404.9M826.3 480.2L832.4 481.7M845.6 468.9L856.6 467.1M789.7 511.9L785.0 515.2M362.6 313.0L373.9 325.7M360.1 447.2L389.4 447.5M896.3 538.5L881.5 544.7M665.8 485.9L678.5 491.7M620.3 446.3L636.5 429.2M1020.7 596.3L1032.7 609.2M529.7 420.6L557.0 420.7M418.2 691.0L444.9 690.9M390.2 313.0L403.8 326.0M756.4 563.8L740.6 561.4M544.1 326.1L556.8 339.3M831.7 513.9L828.2 518.9M653.5 676.5L683.3 676.7M306.5 608.7L319.0 623.2M387.8 420.2L403.2 433.6M831.5 551.1L817.2 551.0M821.3 403.8L794.6 400.9M486.4 460.6L515.6 461.4M648.9 510.6L629.6 513.4M780.5 485.9L788.6 483.0M763.1 491.7L755.5 487.6M570.4 326.8L584.4 339.7M725.5 340.0L739.6 353.5M460.3 407.7L472.4 420.4M864.2 522.1L853.0 522.0M767.7 483.6L761.1 486.6M799.0 473.5L792.4 470.8M375.2 435.2L360.1 447.2M781.8 457.3L787.5 452.5M374.5 622.8L388.5 636.5M1018.3 541.2L988.6 522.3M752.2 339.8L768.5 353.9M388.7 367.0L401.5 380.1M487.6 406.6L501.0 420.4M556.8 447.1L543.9 460.6M305.1 663.0L304.1 690.4M417.5 420.6L403.2 433.6M751.5 490.8L740.3 489.6M874.8 471.6L884.4 470.4M633.7 491.4L612.6 482.8M687.0 446.6L691.8 438.3M361.5 475.3L375.3 487.8M557.2 636.9L571.5 649.6M418.2 366.5L430.5 380.5M846.6 511.4L856.7 517.3M693.9 453.9L677.3 453.0M402.7 570.2L431.1 568.6M888.1 486.6L890.4 479.9M376.6 461.1L389.3 474.9M881.4 455.0L881.8 460.8M735.3 485.9L728.2 483.7M797.3 494.2L798.8 497.8M703.8 402.2L664.5 394.8M828.5 394.7L809.6 394.2M638.6 480.2L633.7 491.4M802.7 493.0L807.9 494.9M719.3 519.5L708.4 517.9M718.6 446.1L712.8 437.8M783.2 488.8L777.7 489.7M753.9 506.2L746.8 504.0M820.6 494.8L818.3 491.7M796.5 544.6L804.9 549.6M753.1 381.7L781.4 381.9M486.7 594.9L516.2 595.8M761.0 443.9L743.5 442.7M859.1 437.5L854.0 430.9M781.5 473.8L779.6 470.1M887.5 517.4L896.7 523.3M767.9 649.5L781.2 663.7M785.1 470.9L783.4 467.0M757.6 394.7L730.6 385.1M753.9 474.4L755.0 469.1M927.0 401.1L903.1 393.0M528.9 663.6L514.0 675.9M774.6 467.1L780.8 463.5M947.8 662.5L963.9 676.4M830.4 503.7L831.6 509.8M717.5 552.2L701.9 558.2M781.8 457.3L790.0 456.7M923.9 513.4L920.6 502.4M845.1 499.2L851.9 502.5M947.5 482.8L944.3 473.4M711.3 676.5L697.0 690.2M375.5 568.9L389.0 582.7M472.7 636.5L501.6 635.7M789.3 479.6L793.3 477.3M862.3 535.7L869.8 542.3M799.0 454.9L803.9 451.7M613.6 582.6L597.7 596.3M402.7 570.2L417.4 582.5M976.6 581.3L991.0 596.3M879.5 299.4L865.1 311.9M305.2 340.3L306.2 366.8M948.4 393.5L939.3 415.8M375.6 299.4L362.6 313.0M691.8 438.3L696.7 430.3M871.9 425.2L887.4 425.4M1005.2 582.5L1020.7 596.3M375.2 435.2L403.2 433.6M823.5 467.1L821.1 462.3M769.6 505.5L762.4 509.5M738.8 477.3L735.6 481.1M556.8 313.1L544.1 326.1M815.2 440.7L819.6 434.1M801.9 458.9L808.4 456.1M803.9 469.6L812.8 468.0M802.4 508.7L804.7 512.1M1032.7 636.5L1034.0 663.0M472.8 609.3L458.6 622.3M361.5 475.3L389.3 474.9M879.4 581.2L905.6 576.4M923.9 513.4L950.5 512.9M739.7 326.5L725.5 340.0M892.3 608.4L879.0 622.6M457.8 380.9L444.6 393.7M862.8 590.4L891.8 593.8M318.4 542.1L347.1 542.4M304.1 690.4L333.7 689.7M418.2 691.0L528.7 691.1M785.0 515.2L793.5 516.1M845.6 468.9L840.1 465.2M756.4 563.8L754.2 556.5M920.6 340.2L906.5 353.3M759.9 542.6L750.6 537.7M487.2 380.1L473.2 393.2M334.2 635.6L318.6 649.8M583.9 367.6L597.9 380.1M960.1 421.4L942.6 427.1M1004.7 419.7L1019.1 434.0M570.8 568.2L598.5 568.5M841.6 522.4L854.4 527.2M724.4 561.7L709.6 568.5M570.7 622.7L557.2 636.9M472.8 311.9L501.7 312.7M831.2 473.4L829.6 468.9M445.6 447.9L458.9 461.6M768.0 622.9L781.3 636.5M810.9 474.9L817.0 473.2M305.7 420.3L320.3 434.1M695.3 413.4L701.9 422.1M501.4 501.2L487.5 515.4M820.9 512.2L812.1 512.4M881.8 460.8L891.9 465.8M741.9 494.5L737.1 498.0M733.6 465.2L736.2 471.8M798.8 497.8L792.4 500.4M622.0 459.6L620.3 446.3M655.2 326.4L683.9 326.7M750.6 537.7L736.7 535.4M799.0 454.9L787.5 452.5M769.8 470.4L768.3 466.9M947.5 636.2L961.7 649.1M859.5 511.7L856.7 517.3M526.7 501.4L514.4 515.2M740.3 489.6L734.0 493.8M836.7 558.7L834.8 570.5M935.7 595.6L963.0 595.0M319.4 514.8L334.1 528.4M786.4 498.6L784.3 504.3M836.6 339.2L866.2 339.9M767.7 477.9L763.8 481.0M804.5 505.7L809.7 508.3M725.1 662.9L711.3 676.5M682.3 513.1L688.8 524.0M486.9 622.1L515.0 622.8M543.4 568.7L557.9 582.4M858.2 487.7L860.5 479.4M753.7 478.3L748.7 480.8M907.2 677.4L891.3 689.9M570.8 568.2L585.7 583.1M843.5 503.9L840.3 507.9M669.7 636.4L697.8 636.1M856.6 467.1L856.5 471.6M768.4 557.2L756.3 549.0M715.4 469.0L705.9 473.2M571.0 380.2L597.9 380.1M789.7 511.9L794.6 509.6M804.7 512.1L812.1 512.4M1033.6 501.4L998.3 507.4M753.9 506.2L756.5 513.3M670.7 407.7L664.5 394.8M822.3 537.6L836.6 543.5M766.7 572.6L756.4 563.8M849.5 650.0L879.6 648.8M430.0 596.5L444.2 610.4M775.2 445.4L776.7 440.2M895.0 548.1L885.2 557.2M819.8 480.3L818.9 484.8M622.0 459.6L598.9 459.8M793.2 463.9L794.8 459.8M646.2 469.7L656.1 462.7M543.1 407.1L571.4 407.0M570.9 300.0L556.8 313.1M855.2 496.1L860.9 491.9M876.4 488.2L880.7 493.9M963.2 522.3L950.5 512.9M724.1 478.3L728.2 483.7M596.7 442.4L615.6 421.6M935.7 595.6L891.8 593.8M715.4 414.9L703.8 402.2M698.9 477.6L691.4 471.9M640.9 393.4L632.2 407.6M417.5 312.2L432.8 326.4M818.9 469.7L815.2 464.7M752.6 313.2L739.7 326.5M779.2 405.6L794.6 400.9M736.8 502.7L729.0 504.1M942.5 491.0L947.5 482.8M319.2 675.7L346.7 676.8M737.3 515.1L723.6 510.8M472.5 689.7L499.2 690.5M444.9 312.8L458.5 326.7M885.2 434.1L905.1 429.7M865.6 496.6L860.9 491.9M961.6 503.6L981.2 498.3M445.6 447.9L472.3 447.3M934.7 326.5L920.6 340.2M360.8 609.6L374.5 622.8M831.1 590.8L847.7 600.1M499.2 690.5L528.7 691.1M784.7 481.1L789.3 479.6M626.7 326.0L641.7 339.4M907.7 530.1L921.4 534.7M822.0 353.4L797.3 368.6M640.7 312.6L668.3 312.8M348.0 380.1L359.7 393.3M319.9 461.7L304.3 474.1M920.6 502.4L939.6 501.4M375.8 353.8L360.8 366.1M459.0 487.9L487.2 488.3M472.4 420.4L487.8 434.5M851.1 449.3L854.3 456.1M789.3 479.6L794.9 481.9M625.2 500.3L590.0 496.2M811.1 471.4L817.0 473.2M843.3 454.1L839.4 459.8M768.7 459.5L774.8 455.4M809.5 340.1L822.0 353.4M800.3 483.0L798.2 479.9M348.2 460.7L332.8 474.6M543.1 407.1L557.0 420.7M822.1 325.4L851.8 326.0M360.7 501.0L374.3 515.4M768.9 450.2L779.6 451.9M962.6 622.3L976.4 636.7M644.7 498.6L633.7 491.4M900.7 491.0L906.3 501.3M822.4 489.2L827.1 491.5M458.6 622.3L472.7 636.5M860.9 491.9L870.1 492.4M817.0 473.2L814.0 478.0M804.9 549.6L801.0 559.6M774.6 424.3L764.6 429.6M786.4 535.0L794.8 538.8M1005.9 339.9L1032.9 339.7M610.6 470.4L612.6 482.8M961.6 503.6L942.5 491.0M388.8 501.7L403.0 515.7M403.5 649.9L417.2 662.9M822.7 544.0L831.5 551.1M729.0 504.1L723.6 510.8M641.5 635.8L655.1 648.7M761.4 476.4L763.8 481.0M814.8 451.9L814.9 446.2M828.5 394.7L836.8 372.5M910.4 485.1L905.5 477.6M402.3 542.2L388.3 554.6M585.6 662.9L599.0 677.3M706.8 451.3L702.0 459.5M964.7 491.2L947.5 482.8M803.7 479.9L808.3 478.0M822.5 648.8L836.2 662.4M864.4 458.8L875.3 465.4M472.4 366.2L501.0 366.0M806.4 436.6L797.0 431.9M750.6 537.7L740.5 542.2M766.9 676.1L780.5 689.8M716.8 474.1L715.4 469.0M851.8 422.5L871.9 425.2M802.4 508.7L809.7 508.3M804.4 499.2L798.8 501.6M1003.9 663.7L1018.3 676.4M634.2 545.6L650.1 554.1M678.4 483.3L678.5 491.7M948.4 582.3L935.7 595.6M644.7 498.6L625.2 500.3M658.9 502.2L648.9 510.6M842.2 414.8L822.8 413.7M792.4 492.5L793.2 497.2M716.4 526.4L721.8 536.8M824.5 508.7L817.5 508.8M845.3 517.1L853.0 522.0M430.1 299.2L444.9 312.8M778.4 517.1L772.2 513.3M360.4 420.6L387.8 420.2M909.3 518.8L923.9 513.4M804.4 499.2L809.9 501.4M934.7 299.7L920.5 312.7M675.6 441.2L691.8 438.3M777.9 476.8L772.8 475.6M747.5 572.4L731.9 583.1M795.8 520.1L801.0 516.7M613.2 312.9L626.7 326.0M319.9 461.7L348.2 460.7M923.9 513.4L941.0 524.4M779.0 480.6L774.0 483.8M373.9 325.7L361.7 340.1M897.0 506.7L906.3 501.3M794.2 326.8L809.5 340.1M348.2 460.7L376.6 461.1M360.7 501.0L388.8 501.7M903.9 463.5L904.3 470.2M769.9 549.7L756.3 549.0M360.7 690.2L418.2 691.0M675.6 441.2L660.1 448.7M949.2 608.9L935.2 622.8M388.8 501.7L417.8 501.5M542.1 380.0L557.3 393.6M375.0 542.3L402.3 542.2M822.5 523.4L813.7 524.4M991.6 568.8L966.7 545.8M347.7 298.8L375.6 299.4M557.3 393.6L571.4 407.0M971.4 448.5L970.1 436.2M304.0 582.0L304.1 690.4M776.8 508.2L769.6 505.5M819.6 434.1L830.3 434.5M977.9 608.3L962.6 622.3M912.7 546.1L946.7 546.0M924.9 449.3L942.3 446.9M641.5 366.6L656.5 380.5M402.3 542.2L430.8 542.0M388.5 636.5L375.8 649.6M991.6 568.8L1019.4 568.5M799.0 473.5L806.4 473.2M823.8 483.2L830.1 485.1M771.4 518.0L772.2 513.3M798.8 501.6L791.5 503.8M844.2 436.3L848.1 443.1M416.7 637.0L403.5 649.9M557.1 502.3L545.1 514.9M571.5 649.6L556.7 663.0M963.0 595.0L991.0 596.3M823.4 515.8L817.9 519.3M788.0 460.4L794.8 459.8M819.0 531.2L822.3 537.6M599.1 650.0L585.6 662.9M828.5 476.7L837.8 479.5M991.0 596.3L1020.7 596.3M374.3 515.4L387.9 527.9M515.0 622.8L542.8 622.9M789.2 468.0L798.5 466.4M798.8 501.6L804.8 502.6M792.4 550.3L781.0 553.4M818.3 491.7L822.4 489.2M842.2 476.1L846.0 480.3M891.4 530.0L879.8 528.0M781.2 663.7L766.9 676.1M542.8 622.9L570.7 622.7M360.5 554.4L348.0 568.8M765.1 463.6L768.7 459.5M798.5 466.4L802.4 463.2M845.9 549.7L851.5 558.1M963.9 676.4L948.3 690.4M895.8 512.8L896.7 523.3M723.8 637.0L752.9 636.8M724.1 478.3L720.5 482.7M661.9 543.6L680.6 536.4M905.1 429.7L919.3 422.7M896.3 538.5L895.0 548.1M599.7 407.3L632.2 407.6M838.6 491.4L844.6 489.3M784.4 560.8L768.4 557.2M736.7 535.4L725.2 544.3M907.7 649.9L934.4 650.0M390.2 313.0L373.9 325.7M814.0 478.0L819.8 480.3M750.1 450.0L761.0 443.9M934.4 650.0L961.7 649.1M516.2 595.8L528.0 609.7M762.0 469.0L757.3 464.4M346.7 676.8L375.2 677.1M570.4 326.8L556.8 339.3M528.7 691.1L583.5 690.7M847.7 463.2L856.0 461.4M808.0 312.7L794.2 326.8M725.4 458.7L714.2 456.7M801.7 417.3L790.8 412.4M1005.5 313.1L1019.5 326.3M375.2 677.1L401.9 676.8M633.1 526.2L621.0 536.4M760.2 472.7L753.9 474.4M1018.3 541.2L976.6 533.8M752.2 339.8L739.6 353.5M794.9 481.9L800.3 483.0M487.6 406.6L472.4 420.4M709.1 479.0L698.9 477.6M515.1 300.1L543.3 299.0" fill="none" stroke="#000" stroke-width="0.85"/>
<polygon points="758,647 989.7,447 990,683 758.4,873" fill="#fff" fill-opacity="0.13"/>
<path d="M758 647 V873 L990 683 M356.5 531.5 L758 647 L989.7 447" fill="none" stroke="#fff" stroke-opacity="0.25" stroke-width="1.5"/>
<polygon points="353.0,543.4 757.0,666.0 988.6,464.5 588.2,339.0" fill="none" stroke="#222" stroke-width="0.9"/>
<polygon points="353.0,543.4 757.0,666.0 748.0,892.5 350.6,767.0" fill="none" stroke="#222" stroke-width="0.9"/>
<polygon points="757.0,666.0 988.6,464.5 987.5,685.5 748.0,892.5" fill="none" stroke="#222" stroke-width="0.9"/>
</svg>
<svg class="r" style="left:985px;top:295px;" width="12" height="9" viewBox="0 0 12 9"><path d="M1.5 1.5 L6 6 L10.5 1.5" fill="none" stroke="#f4a070" stroke-width="1.3"/></svg>
<div class="r" style="left:1001px;top:289.5px;width:130px;height:21px;background:#f26f21;"></div>
<div class="t" style="left:1006.0px;top:293.5px;font-size:11.8px;color:#fff;font-weight:bold;letter-spacing:-0.45px;">ULS Combinations</div>
<div class="t" style="left:1006.0px;top:315.2px;font-size:11.6px;color:#444;font-weight:normal;">C1</div>
<svg class="r" style="left:1040px;top:180px;" width="110" height="85" viewBox="0 0 110 85">
<ellipse cx="54.3" cy="56.2" rx="33.5" ry="16" fill="none" stroke="#dedede" stroke-width="8"/>
<path d="M27.7 23.7 L48.8 12.2 L78.3 18.1 L76.1 47.3 L60.6 65.8 L30.7 54.3 Z" fill="#ababab"/>
<path d="M27.7 23.7 L48.8 12.2 L78.3 18.1 L62.5 32.2 Z" fill="#b3b3b3"/>
<path d="M27.7 23.7 L48.8 12.2 L78.3 18.1 L76.1 47.3 L60.6 65.8 L30.7 54.3 Z M27.7 23.7 L62.5 32.2 L78.3 18.1 M62.5 32.2 L60.6 65.8 M48.8 12.2 L48.4 39.2 L30.7 54.3 M48.4 39.2 L76.1 47.3" fill="none" stroke="#8a8a8a" stroke-width="1.3" stroke-linejoin="round"/>
<path d="M54 22 L58 20" stroke="#eee" stroke-width="1.2"/>
<path d="M43 46 L46 45 M47 43 L47.5 48" stroke="#eee" stroke-width="1"/>
<path d="M70.5 38 L70.5 43" stroke="#eee" stroke-width="1"/>
<path d="M21 41.5 L26 40 M25 37 L25.5 42" stroke="#666" stroke-width="1.3"/>
<path d="M84 59.5 L94 63" stroke="#999" stroke-width="1"/>
<path d="M26.5 76 L32.5 70 M31 66 L32 71 L39 69" fill="none" stroke="#7a7a7a" stroke-width="1.8"/>
</svg>
<div class="r" style="left:991px;top:56px;width:67px;height:90px;background:transparent;border:4.6px solid #fd3235;border-radius:7px;box-sizing:border-box;"></div>
<div class="r" style="left:1059px;top:56px;width:64px;height:90px;background:transparent;border:4.6px solid #fd3235;border-radius:7px;box-sizing:border-box;"></div>
<div class="r" style="left:1302px;top:56px;width:63px;height:90px;background:transparent;border:4.6px solid #fd3235;border-radius:7px;box-sizing:border-box;"></div>
<div class="t" style="left:876.0px;width:300px;text-align:center;top:17.7px;font-size:37px;color:#fd3235;font-weight:bold;">1</div>
<div class="t" style="left:941.3px;width:300px;text-align:center;top:17.7px;font-size:37px;color:#fd3235;font-weight:bold;">2</div>
<div class="t" style="left:1183.0px;width:300px;text-align:center;top:17.7px;font-size:37px;color:#fd3235;font-weight:bold;">3</div>
</body></html>
